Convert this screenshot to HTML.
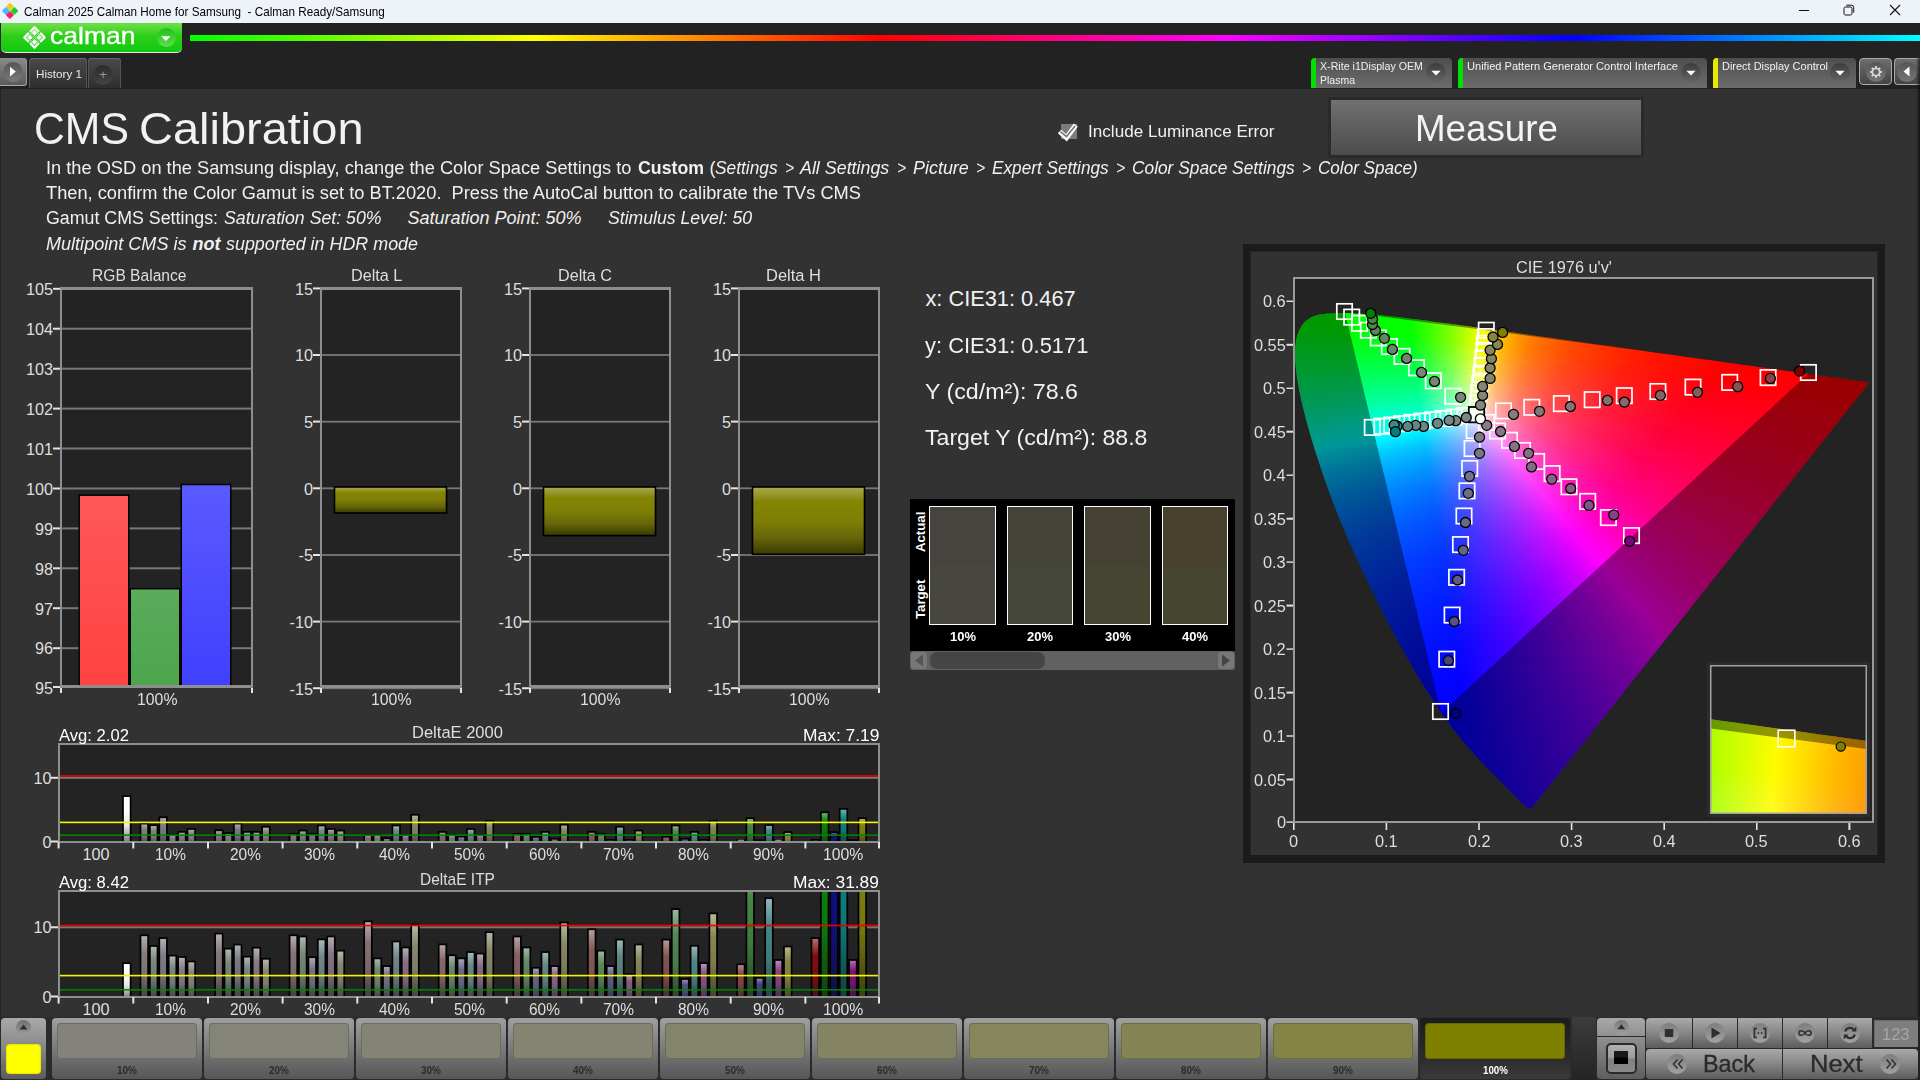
<!DOCTYPE html><html><head><meta charset="utf-8"><title>Calman</title><style>
html,body{margin:0;padding:0}
body{width:1920px;height:1080px;overflow:hidden;background:#323232;position:relative;font-family:"Liberation Sans",sans-serif}
.t{position:absolute;line-height:0;white-space:pre;transform-origin:0 0;z-index:2}
.a{position:absolute}
.tab{position:absolute;top:58px;height:30px;border-radius:4px 4px 0 0;background:linear-gradient(#4a4a4a,#3a3a3a 60%,#2e2e2e);box-shadow:inset 0 1px 0 #666, inset 1px 0 0 #555, inset -1px 0 0 #555}
.dev{position:absolute;top:58px;height:30px;border-radius:4px 4px 0 0;background:linear-gradient(#4e4e4e,#5e5e5e 50%,#6c6c6c);overflow:hidden}
.dev i{position:absolute;left:0;top:0;width:5px;height:30px}
.rb{position:absolute;border-radius:50%}
.btn{position:absolute;background:linear-gradient(#a9a9a9,#8a8a8a 45%,#5c5c5c);}
.pb{position:absolute;top:1018px;width:150px;height:61px;border-radius:4px;background:linear-gradient(#a0a0a0,#7a7a7a 50%,#565656)}
.pb b{position:absolute;left:5px;top:5px;width:140px;height:36px;border-radius:4px;box-shadow:inset 0 0 0 1px rgba(0,0,0,.18)}
</style></head><body>
<div class="a" style="left:0;top:0;width:1920px;height:23px;background:#eef3f9"></div>
<div class="t" style="left:23.50px;top:12.00px;font-size:12.4px;color:#000;transform:scaleX(0.9437);">Calman 2025 Calman Home for Samsung  - Calman Ready/Samsung</div>
<div class="a" style="left:0;top:23px;width:1920px;height:66px;background:#222"></div>
<div class="a" style="left:190px;top:34.9px;width:1730px;height:5.7px;background:linear-gradient(90deg,#0f0 0%,#ff0 20%,#f00 40%,#f0f 60%,#00f 80%,#0ff 100%);filter:blur(0.5px)"></div>
<div class="a" style="left:1px;top:23px;width:181px;height:29px;background:linear-gradient(#6fe048,#2dcf18 45%,#10c810);border-bottom:1px solid #e8e8e8;border-radius:0 0 5px 5px"></div>
<div class="a" style="left:0;top:58px;width:27px;height:28px;border-radius:0 4px 4px 0;background:linear-gradient(#8a8a8a,#5a5a5a);box-shadow:inset 0 -1px 0 #aaa, inset -1px 0 0 #999"></div>
<div class="rb" style="left:3px;top:62px;width:20px;height:20px;background:linear-gradient(#555,#7a7a7a)"></div>
<div class="tab" style="left:29px;width:58px"></div>
<div class="tab" style="left:88px;width:33px"></div>
<div class="rb" style="left:93px;top:65px;width:20px;height:20px;background:linear-gradient(#2c2c2c,#444)"></div>
<div class="t" style="left:35.50px;top:74.00px;font-size:11.6px;color:#e8e8e8;transform:scaleX(1.0051);">History 1</div>
<div class="t" style="left:99.20px;top:75.00px;font-size:13px;color:#999;">+</div>
<div class="dev" style="left:1311px;width:141px"><i style="background:#00e000"></i></div>
<div class="rb" style="left:1426px;top:63px;width:20px;height:20px;background:linear-gradient(#3c3c3c,#666)"></div>
<div class="t" style="left:1320.00px;top:66.00px;font-size:11.6px;color:#f0f0f0;transform:scaleX(0.9183);">X-Rite i1Display OEM</div>
<div class="t" style="left:1320.00px;top:80.00px;font-size:11.6px;color:#f0f0f0;transform:scaleX(0.9048);">Plasma</div>
<div class="dev" style="left:1458px;width:249px"><i style="background:#00e000"></i></div>
<div class="rb" style="left:1681px;top:63px;width:20px;height:20px;background:linear-gradient(#3c3c3c,#666)"></div>
<div class="t" style="left:1467.00px;top:66.00px;font-size:11.6px;color:#f0f0f0;transform:scaleX(0.9540);">Unified Pattern Generator Control Interface</div>
<div class="dev" style="left:1713px;width:143px"><i style="background:#e8e800"></i></div>
<div class="rb" style="left:1830px;top:63px;width:20px;height:20px;background:linear-gradient(#3c3c3c,#666)"></div>
<div class="t" style="left:1722.00px;top:66.00px;font-size:11.6px;color:#f0f0f0;transform:scaleX(0.9450);">Direct Display Control</div>
<div class="a" style="left:1859px;top:58px;width:33px;height:27px;border-radius:4px;border:1px solid #aaa;box-sizing:border-box;background:linear-gradient(#6e6e6e,#444)"></div>
<div class="a" style="left:1894px;top:58px;width:26px;height:27px;border-radius:4px 0 0 4px;border:1px solid #aaa;border-right:none;box-sizing:border-box;background:linear-gradient(#6e6e6e,#444)"></div>
<div class="rb" style="left:1866px;top:62px;width:20px;height:20px;background:linear-gradient(#555,#777)"></div>
<div class="rb" style="left:1897px;top:62px;width:20px;height:20px;background:linear-gradient(#555,#777)"></div>
<div class="a" style="left:0;top:89px;width:1920px;height:928px;background:#323232"></div>
<div class="a" style="left:0;top:89px;width:1px;height:928px;background:#222"></div>
<div class="t" style="left:34.30px;top:128.75px;font-size:43.5px;color:#f2f2f2;transform:scaleX(0.9827);">CMS</div>
<div class="t" style="left:139.20px;top:128.75px;font-size:43.5px;color:#f2f2f2;transform:scaleX(1.0796);">Calibration</div>
<div class="t" style="left:46.00px;top:167.75px;font-size:18px;color:#f0f0f0;transform:scaleX(1.0129);">In the OSD on the Samsung display, change the Color Space Settings to</div>
<div class="t" style="left:637.50px;top:167.75px;font-size:18px;color:#f0f0f0;font-weight:700;transform:scaleX(0.9851);">Custom</div>
<div class="t" style="left:709.50px;top:167.75px;font-size:18px;color:#f0f0f0;">(</div>
<div class="t" style="left:715.40px;top:167.75px;font-size:18px;color:#f0f0f0;font-style:italic;transform:scaleX(0.9625);">Settings</div>
<div class="t" style="left:800.00px;top:167.75px;font-size:18px;color:#f0f0f0;font-style:italic;transform:scaleX(0.9917);">All Settings</div>
<div class="t" style="left:913.00px;top:167.75px;font-size:18px;color:#f0f0f0;font-style:italic;transform:scaleX(0.9960);">Picture</div>
<div class="t" style="left:992.00px;top:167.75px;font-size:18px;color:#f0f0f0;font-style:italic;transform:scaleX(0.9560);">Expert Settings</div>
<div class="t" style="left:1132.30px;top:167.75px;font-size:18px;color:#f0f0f0;font-style:italic;transform:scaleX(0.9622);">Color Space Settings</div>
<div class="t" style="left:1317.80px;top:167.75px;font-size:18px;color:#f0f0f0;font-style:italic;transform:scaleX(0.9500);">Color Space)</div>
<div class="t" style="left:785.30px;top:167.75px;font-size:18px;color:#f0f0f0;font-style:italic;transform:scaleX(0.8752);">&gt;</div>
<div class="t" style="left:896.80px;top:167.75px;font-size:18px;color:#f0f0f0;font-style:italic;transform:scaleX(0.8752);">&gt;</div>
<div class="t" style="left:976.20px;top:167.75px;font-size:18px;color:#f0f0f0;font-style:italic;transform:scaleX(0.8752);">&gt;</div>
<div class="t" style="left:1116.10px;top:167.75px;font-size:18px;color:#f0f0f0;font-style:italic;transform:scaleX(0.8752);">&gt;</div>
<div class="t" style="left:1302.40px;top:167.75px;font-size:18px;color:#f0f0f0;font-style:italic;transform:scaleX(0.8752);">&gt;</div>
<div class="t" style="left:46.00px;top:192.75px;font-size:18px;color:#f0f0f0;transform:scaleX(1.0136);">Then, confirm the Color Gamut is set to BT.2020.  Press the AutoCal button to calibrate the TVs CMS</div>
<div class="t" style="left:46.00px;top:217.50px;font-size:18px;color:#f0f0f0;transform:scaleX(0.9882);">Gamut CMS Settings:</div>
<div class="t" style="left:224.00px;top:217.50px;font-size:18px;color:#f0f0f0;font-style:italic;transform:scaleX(0.9837);">Saturation Set: 50%</div>
<div class="t" style="left:407.50px;top:217.50px;font-size:18px;color:#f0f0f0;font-style:italic;">Saturation Point: 50%</div>
<div class="t" style="left:607.50px;top:217.50px;font-size:18px;color:#f0f0f0;font-style:italic;transform:scaleX(0.9791);">Stimulus Level: 50</div>
<div class="t" style="left:46.00px;top:244.00px;font-size:18px;color:#f0f0f0;font-style:italic;transform:scaleX(1.0033);">Multipoint CMS is</div>
<div class="t" style="left:192.50px;top:244.00px;font-size:18px;color:#f0f0f0;font-weight:700;font-style:italic;">not</div>
<div class="t" style="left:226.00px;top:244.00px;font-size:18px;color:#f0f0f0;font-style:italic;transform:scaleX(0.9943);">supported in HDR mode</div>
<div class="a" style="left:1061px;top:124px;width:16px;height:15px;background:#7c7c7c"></div>
<div class="t" style="left:1088.40px;top:132.00px;font-size:17px;color:#f0f0f0;transform:scaleX(1.0069);">Include Luminance Error</div>
<div class="a" style="left:1328px;top:97px;width:316px;height:61px;background:#2a2a2a"></div>
<div class="a" style="left:1331px;top:100px;width:310px;height:55px;background:linear-gradient(#717171,#4c4c4c)"></div>
<div class="t" style="left:1415.00px;top:128.80px;font-size:37px;color:#f4f4f4;transform:scaleX(0.9933);">Measure</div>
<div class="t" style="left:925.40px;top:299.20px;font-size:21.8px;color:#f2f2f2;">x: CIE31: 0.467</div>
<div class="t" style="left:925.40px;top:345.50px;font-size:21.8px;color:#f2f2f2;transform:scaleX(1.0068);">y: CIE31: 0.5171</div>
<div class="t" style="left:925.40px;top:392.20px;font-size:21.8px;color:#f2f2f2;transform:scaleX(1.0642);">Y (cd/m²): 78.6</div>
<div class="t" style="left:925.40px;top:438.00px;font-size:21.8px;color:#f2f2f2;transform:scaleX(1.0594);">Target Y (cd/m²): 88.8</div>
<div class="t" style="left:34.98px;top:687.60px;font-size:16.2px;color:#dedede;">95</div>
<div class="t" style="left:34.98px;top:648.47px;font-size:16.2px;color:#dedede;">96</div>
<div class="t" style="left:34.98px;top:608.54px;font-size:16.2px;color:#dedede;">97</div>
<div class="t" style="left:34.98px;top:568.61px;font-size:16.2px;color:#dedede;">98</div>
<div class="t" style="left:34.98px;top:528.68px;font-size:16.2px;color:#dedede;">99</div>
<div class="t" style="left:25.97px;top:488.75px;font-size:16.2px;color:#dedede;">100</div>
<div class="t" style="left:25.97px;top:448.82px;font-size:16.2px;color:#dedede;">101</div>
<div class="t" style="left:25.97px;top:408.89px;font-size:16.2px;color:#dedede;">102</div>
<div class="t" style="left:25.97px;top:368.96px;font-size:16.2px;color:#dedede;">103</div>
<div class="t" style="left:25.97px;top:329.03px;font-size:16.2px;color:#dedede;">104</div>
<div class="t" style="left:25.97px;top:289.10px;font-size:16.2px;color:#dedede;">105</div>
<div class="t" style="left:92.45px;top:276.25px;font-size:16.7px;color:#dedede;transform:scaleX(0.9340);">RGB Balance</div>
<div class="t" style="left:136.95px;top:699.00px;font-size:16.2px;color:#dedede;transform:scaleX(0.9775);">100%</div>
<div class="t" style="left:289.58px;top:688.55px;font-size:16.2px;color:#dedede;">-15</div>
<div class="t" style="left:289.58px;top:621.90px;font-size:16.2px;color:#dedede;">-10</div>
<div class="t" style="left:298.59px;top:555.25px;font-size:16.2px;color:#dedede;">-5</div>
<div class="t" style="left:303.99px;top:488.60px;font-size:16.2px;color:#dedede;">0</div>
<div class="t" style="left:303.99px;top:421.95px;font-size:16.2px;color:#dedede;">5</div>
<div class="t" style="left:294.98px;top:355.30px;font-size:16.2px;color:#dedede;">10</div>
<div class="t" style="left:294.98px;top:288.65px;font-size:16.2px;color:#dedede;">15</div>
<div class="t" style="left:350.60px;top:276.25px;font-size:16.7px;color:#dedede;transform:scaleX(0.9714);">Delta L</div>
<div class="t" style="left:370.75px;top:699.00px;font-size:16.2px;color:#dedede;transform:scaleX(0.9775);">100%</div>
<div class="t" style="left:498.58px;top:688.55px;font-size:16.2px;color:#dedede;">-15</div>
<div class="t" style="left:498.58px;top:621.90px;font-size:16.2px;color:#dedede;">-10</div>
<div class="t" style="left:507.59px;top:555.25px;font-size:16.2px;color:#dedede;">-5</div>
<div class="t" style="left:512.99px;top:488.60px;font-size:16.2px;color:#dedede;">0</div>
<div class="t" style="left:512.99px;top:421.95px;font-size:16.2px;color:#dedede;">5</div>
<div class="t" style="left:503.98px;top:355.30px;font-size:16.2px;color:#dedede;">10</div>
<div class="t" style="left:503.98px;top:288.65px;font-size:16.2px;color:#dedede;">15</div>
<div class="t" style="left:558.00px;top:276.25px;font-size:16.7px;color:#dedede;transform:scaleX(0.9697);">Delta C</div>
<div class="t" style="left:579.75px;top:699.00px;font-size:16.2px;color:#dedede;transform:scaleX(0.9775);">100%</div>
<div class="t" style="left:707.58px;top:688.55px;font-size:16.2px;color:#dedede;">-15</div>
<div class="t" style="left:707.58px;top:621.90px;font-size:16.2px;color:#dedede;">-10</div>
<div class="t" style="left:716.59px;top:555.25px;font-size:16.2px;color:#dedede;">-5</div>
<div class="t" style="left:721.99px;top:488.60px;font-size:16.2px;color:#dedede;">0</div>
<div class="t" style="left:721.99px;top:421.95px;font-size:16.2px;color:#dedede;">5</div>
<div class="t" style="left:712.98px;top:355.30px;font-size:16.2px;color:#dedede;">10</div>
<div class="t" style="left:712.98px;top:288.65px;font-size:16.2px;color:#dedede;">15</div>
<div class="t" style="left:766.20px;top:276.25px;font-size:16.7px;color:#dedede;transform:scaleX(0.9877);">Delta H</div>
<div class="t" style="left:788.75px;top:699.00px;font-size:16.2px;color:#dedede;transform:scaleX(0.9775);">100%</div>
<div class="a" style="left:910px;top:499px;width:325px;height:152px;background:#000"></div>
<div class="a" style="left:910px;top:651px;width:325px;height:19px;background:#616161;border-radius:3px"></div>
<div class="a" style="left:930px;top:652px;width:115px;height:17px;background:#454545;border-radius:7px"></div>
<div class="a" style="left:911px;top:652px;width:16px;height:17px;background:#777;border-radius:3px"></div>
<div class="a" style="left:1218px;top:652px;width:16px;height:17px;background:#777;border-radius:3px"></div>
<div class="a" style="left:929.0px;top:506px;width:66.6px;height:119px;box-sizing:border-box;border:1px solid #fff;background:linear-gradient(#47443f 49%,#47463f 51%)"></div>
<div class="t" style="left:949.50px;top:636.80px;font-size:13.6px;color:#fff;font-weight:700;transform:scaleX(0.9552);">10%</div>
<div class="a" style="left:1006.6px;top:506px;width:66.6px;height:119px;box-sizing:border-box;border:1px solid #fff;background:linear-gradient(#46443a 49%,#45463a 51%)"></div>
<div class="t" style="left:1027.10px;top:636.80px;font-size:13.6px;color:#fff;font-weight:700;transform:scaleX(0.9552);">20%</div>
<div class="a" style="left:1084.2px;top:506px;width:66.6px;height:119px;box-sizing:border-box;border:1px solid #fff;background:linear-gradient(#464233 49%,#464532 51%)"></div>
<div class="t" style="left:1104.70px;top:636.80px;font-size:13.6px;color:#fff;font-weight:700;transform:scaleX(0.9552);">30%</div>
<div class="a" style="left:1161.8px;top:506px;width:66.6px;height:119px;box-sizing:border-box;border:1px solid #fff;background:linear-gradient(#47412e 49%,#46452d 51%)"></div>
<div class="t" style="left:1182.30px;top:636.80px;font-size:13.6px;color:#fff;font-weight:700;transform:scaleX(0.9552);">40%</div>
<div class="t" style="left:926px;top:552px;font-size:13.2px;color:#fff;font-weight:700;transform:rotate(-90deg);transform-origin:0 0;line-height:0"><span style="position:absolute;left:0;top:-4.6px">Actual</span></div>
<div class="t" style="left:926px;top:619px;font-size:13.2px;color:#fff;font-weight:700;transform:rotate(-90deg);transform-origin:0 0;line-height:0"><span style="position:absolute;left:0;top:-4.6px">Target</span></div>
<!--MORE-->
<div class="t" style="left:82.44px;top:853.60px;font-size:16.2px;color:#dedede;">100</div>
<div class="t" style="left:155.12px;top:853.60px;font-size:16.2px;color:#dedede;transform:scaleX(0.9561);">10%</div>
<div class="t" style="left:229.80px;top:853.60px;font-size:16.2px;color:#dedede;transform:scaleX(0.9561);">20%</div>
<div class="t" style="left:304.48px;top:853.60px;font-size:16.2px;color:#dedede;transform:scaleX(0.9561);">30%</div>
<div class="t" style="left:379.16px;top:853.60px;font-size:16.2px;color:#dedede;transform:scaleX(0.9561);">40%</div>
<div class="t" style="left:453.84px;top:853.60px;font-size:16.2px;color:#dedede;transform:scaleX(0.9561);">50%</div>
<div class="t" style="left:528.52px;top:853.60px;font-size:16.2px;color:#dedede;transform:scaleX(0.9561);">60%</div>
<div class="t" style="left:603.20px;top:853.60px;font-size:16.2px;color:#dedede;transform:scaleX(0.9561);">70%</div>
<div class="t" style="left:677.88px;top:853.60px;font-size:16.2px;color:#dedede;transform:scaleX(0.9561);">80%</div>
<div class="t" style="left:752.56px;top:853.60px;font-size:16.2px;color:#dedede;transform:scaleX(0.9561);">90%</div>
<div class="t" style="left:822.54px;top:853.60px;font-size:16.2px;color:#dedede;transform:scaleX(0.9750);">100%</div>
<div class="t" style="left:42.49px;top:841.80px;font-size:16.2px;color:#dedede;">0</div>
<div class="t" style="left:33.48px;top:777.80px;font-size:16.2px;color:#dedede;">10</div>
<div class="t" style="left:411.50px;top:732.90px;font-size:16.7px;color:#dedede;transform:scaleX(0.9900);">DeltaE 2000</div>
<div class="t" style="left:58.50px;top:736.10px;font-size:16.7px;color:#fff;transform:scaleX(0.9963);">Avg: 2.02</div>
<div class="t" style="left:802.50px;top:736.10px;font-size:16.7px;color:#fff;transform:scaleX(1.0432);">Max: 7.19</div>
<div class="t" style="left:82.44px;top:1008.50px;font-size:16.2px;color:#dedede;">100</div>
<div class="t" style="left:155.12px;top:1008.50px;font-size:16.2px;color:#dedede;transform:scaleX(0.9561);">10%</div>
<div class="t" style="left:229.80px;top:1008.50px;font-size:16.2px;color:#dedede;transform:scaleX(0.9561);">20%</div>
<div class="t" style="left:304.48px;top:1008.50px;font-size:16.2px;color:#dedede;transform:scaleX(0.9561);">30%</div>
<div class="t" style="left:379.16px;top:1008.50px;font-size:16.2px;color:#dedede;transform:scaleX(0.9561);">40%</div>
<div class="t" style="left:453.84px;top:1008.50px;font-size:16.2px;color:#dedede;transform:scaleX(0.9561);">50%</div>
<div class="t" style="left:528.52px;top:1008.50px;font-size:16.2px;color:#dedede;transform:scaleX(0.9561);">60%</div>
<div class="t" style="left:603.20px;top:1008.50px;font-size:16.2px;color:#dedede;transform:scaleX(0.9561);">70%</div>
<div class="t" style="left:677.88px;top:1008.50px;font-size:16.2px;color:#dedede;transform:scaleX(0.9561);">80%</div>
<div class="t" style="left:752.56px;top:1008.50px;font-size:16.2px;color:#dedede;transform:scaleX(0.9561);">90%</div>
<div class="t" style="left:822.54px;top:1008.50px;font-size:16.2px;color:#dedede;transform:scaleX(0.9750);">100%</div>
<div class="t" style="left:42.49px;top:996.80px;font-size:16.2px;color:#dedede;">0</div>
<div class="t" style="left:33.48px;top:927.30px;font-size:16.2px;color:#dedede;">10</div>
<div class="t" style="left:419.50px;top:880.10px;font-size:16.7px;color:#dedede;transform:scaleX(0.9288);">DeltaE ITP</div>
<div class="t" style="left:58.50px;top:883.30px;font-size:16.7px;color:#fff;transform:scaleX(0.9963);">Avg: 8.42</div>
<div class="t" style="left:793.00px;top:883.30px;font-size:16.7px;color:#fff;transform:scaleX(1.0409);">Max: 31.89</div>
<div class="t" style="left:1276.91px;top:822.20px;font-size:16.5px;color:#dedede;transform:scaleX(0.9900);">0</div>
<div class="t" style="left:1254.21px;top:779.62px;font-size:16.5px;color:#dedede;transform:scaleX(0.9900);">0.05</div>
<div class="t" style="left:1263.29px;top:736.15px;font-size:16.5px;color:#dedede;transform:scaleX(0.9900);">0.1</div>
<div class="t" style="left:1254.21px;top:692.68px;font-size:16.5px;color:#dedede;transform:scaleX(0.9900);">0.15</div>
<div class="t" style="left:1263.29px;top:649.20px;font-size:16.5px;color:#dedede;transform:scaleX(0.9900);">0.2</div>
<div class="t" style="left:1254.21px;top:605.73px;font-size:16.5px;color:#dedede;transform:scaleX(0.9900);">0.25</div>
<div class="t" style="left:1263.29px;top:562.25px;font-size:16.5px;color:#dedede;transform:scaleX(0.9900);">0.3</div>
<div class="t" style="left:1254.21px;top:518.77px;font-size:16.5px;color:#dedede;transform:scaleX(0.9900);">0.35</div>
<div class="t" style="left:1263.29px;top:475.30px;font-size:16.5px;color:#dedede;transform:scaleX(0.9900);">0.4</div>
<div class="t" style="left:1254.21px;top:431.82px;font-size:16.5px;color:#dedede;transform:scaleX(0.9900);">0.45</div>
<div class="t" style="left:1263.29px;top:388.35px;font-size:16.5px;color:#dedede;transform:scaleX(0.9900);">0.5</div>
<div class="t" style="left:1254.21px;top:344.88px;font-size:16.5px;color:#dedede;transform:scaleX(0.9900);">0.55</div>
<div class="t" style="left:1263.29px;top:301.40px;font-size:16.5px;color:#dedede;transform:scaleX(0.9900);">0.6</div>
<div class="t" style="left:1289.26px;top:840.80px;font-size:16.5px;color:#dedede;transform:scaleX(0.9900);">0</div>
<div class="t" style="left:1375.05px;top:840.80px;font-size:16.5px;color:#dedede;transform:scaleX(0.9900);">0.1</div>
<div class="t" style="left:1467.65px;top:840.80px;font-size:16.5px;color:#dedede;transform:scaleX(0.9900);">0.2</div>
<div class="t" style="left:1560.25px;top:840.80px;font-size:16.5px;color:#dedede;transform:scaleX(0.9900);">0.3</div>
<div class="t" style="left:1652.85px;top:840.80px;font-size:16.5px;color:#dedede;transform:scaleX(0.9900);">0.4</div>
<div class="t" style="left:1745.45px;top:840.80px;font-size:16.5px;color:#dedede;transform:scaleX(0.9900);">0.5</div>
<div class="t" style="left:1838.05px;top:840.80px;font-size:16.5px;color:#dedede;transform:scaleX(0.9900);">0.6</div>
<div class="t" style="left:1516.00px;top:266.60px;font-size:17.3px;color:#dedede;transform:scaleX(0.9429);">CIE 1976 u&#x27;v&#x27;</div>
<div class="a" style="left:0;top:1017px;width:1920px;height:63px;background:#2b2b2b"></div>
<div class="a" style="left:1572px;top:1017px;width:24px;height:63px;background:linear-gradient(#3c3c3c,#242424)"></div>
<div class="btn" style="left:1px;top:1018px;width:45px;height:61px;border-radius:4px"></div>
<div class="rb" style="left:16px;top:1020px;width:15px;height:15px;background:linear-gradient(#707070,#9a9a9a)"></div>
<div class="a" style="left:6px;top:1044px;width:35px;height:30px;border-radius:4px;background:#ffff00;box-shadow:inset 0 0 2px rgba(120,120,0,.6)"></div>
<div class="pb" style="left:52px;"><b style="background:#83837c"></b></div>
<div class="t" style="left:117.00px;top:1069.80px;font-size:10.6px;color:#2a2a2a;font-weight:700;transform:scaleX(0.9427);">10%</div>
<div class="pb" style="left:204px;"><b style="background:#848479"></b></div>
<div class="t" style="left:269.00px;top:1069.80px;font-size:10.6px;color:#2a2a2a;font-weight:700;transform:scaleX(0.9427);">20%</div>
<div class="pb" style="left:356px;"><b style="background:#848475"></b></div>
<div class="t" style="left:421.00px;top:1069.80px;font-size:10.6px;color:#2a2a2a;font-weight:700;transform:scaleX(0.9427);">30%</div>
<div class="pb" style="left:508px;"><b style="background:#848470"></b></div>
<div class="t" style="left:573.00px;top:1069.80px;font-size:10.6px;color:#2a2a2a;font-weight:700;transform:scaleX(0.9427);">40%</div>
<div class="pb" style="left:660px;"><b style="background:#84846a"></b></div>
<div class="t" style="left:725.00px;top:1069.80px;font-size:10.6px;color:#2a2a2a;font-weight:700;transform:scaleX(0.9427);">50%</div>
<div class="pb" style="left:812px;"><b style="background:#848463"></b></div>
<div class="t" style="left:877.00px;top:1069.80px;font-size:10.6px;color:#2a2a2a;font-weight:700;transform:scaleX(0.9427);">60%</div>
<div class="pb" style="left:964px;"><b style="background:#85865e"></b></div>
<div class="t" style="left:1029.00px;top:1069.80px;font-size:10.6px;color:#2a2a2a;font-weight:700;transform:scaleX(0.9427);">70%</div>
<div class="pb" style="left:1116px;"><b style="background:#858554"></b></div>
<div class="t" style="left:1181.00px;top:1069.80px;font-size:10.6px;color:#2a2a2a;font-weight:700;transform:scaleX(0.9427);">80%</div>
<div class="pb" style="left:1268px;"><b style="background:#848445"></b></div>
<div class="t" style="left:1333.00px;top:1069.80px;font-size:10.6px;color:#2a2a2a;font-weight:700;transform:scaleX(0.9427);">90%</div>
<div class="pb" style="left:1420px;background:linear-gradient(#1c1c1c,#2a2a2a 60%,#3a3a3a);"><b style="background:#808000"></b></div>
<div class="t" style="left:1482.50px;top:1069.80px;font-size:10.6px;color:#fff;font-weight:700;transform:scaleX(0.9221);">100%</div>
<div class="btn" style="left:1597px;top:1018px;width:48px;height:18px;border-radius:4px 4px 0 0;background:linear-gradient(#a8a8a8,#919191)"></div>
<div class="btn" style="left:1597px;top:1037px;width:48px;height:42px;border-radius:0 0 4px 4px;background:linear-gradient(#8f8f8f,#5e5e5e)"></div>
<div class="rb" style="left:1614px;top:1020px;width:15px;height:15px;background:linear-gradient(#7a7a7a,#a0a0a0)"></div>
<div class="a" style="left:1605.5px;top:1042.5px;width:31px;height:31px;box-sizing:border-box;border:2.5px solid #2a2a2a;border-radius:5px;background:linear-gradient(#b0b0b0 0%,#9c9c9c 49%,#808080 51%,#8a8a8a 100%)"></div>
<div class="a" style="left:1614.3px;top:1051.2px;width:13.4px;height:13.2px;background:linear-gradient(#1a1a1a 0%,#181818 49%,#000 51%)"></div>
<div class="btn" style="left:1646px;top:1018px;width:46px;height:30px;border-radius:4px 0 0 0"></div>
<div class="rb" style="left:1659px;top:1023px;width:20px;height:20px;background:linear-gradient(#7d7d7d,#a2a2a2)"></div>
<div class="btn" style="left:1693px;top:1018px;width:44px;height:30px;border-radius:0"></div>
<div class="rb" style="left:1705px;top:1023px;width:20px;height:20px;background:linear-gradient(#7d7d7d,#a2a2a2)"></div>
<div class="btn" style="left:1738px;top:1018px;width:44px;height:30px;border-radius:0"></div>
<div class="rb" style="left:1750px;top:1023px;width:20px;height:20px;background:linear-gradient(#7d7d7d,#a2a2a2)"></div>
<div class="btn" style="left:1783px;top:1018px;width:44px;height:30px;border-radius:0"></div>
<div class="rb" style="left:1795px;top:1023px;width:20px;height:20px;background:linear-gradient(#7d7d7d,#a2a2a2)"></div>
<div class="btn" style="left:1828px;top:1018px;width:44px;height:30px;border-radius:0"></div>
<div class="rb" style="left:1840px;top:1023px;width:20px;height:20px;background:linear-gradient(#7d7d7d,#a2a2a2)"></div>
<div class="a" style="left:1874px;top:1020px;width:44px;height:27px;background:#7e7e7e;box-shadow:inset 1px 1px 0 #6a6a6a"></div>
<div class="t" style="left:1882.45px;top:1034.60px;font-size:17px;color:#a4a8ac;transform:scaleX(0.9695);">123</div>
<div class="btn" style="left:1646px;top:1049px;width:136px;height:30px;border-radius:4px 0 0 4px"></div>
<div class="btn" style="left:1783px;top:1049px;width:135px;height:30px;border-radius:0 4px 4px 0"></div>
<div class="rb" style="left:1667px;top:1054px;width:20px;height:20px;background:linear-gradient(#7d7d7d,#a2a2a2)"></div>
<div class="rb" style="left:1880px;top:1054px;width:20px;height:20px;background:linear-gradient(#7d7d7d,#a2a2a2)"></div>
<div class="t" style="left:1703.00px;top:1064.20px;font-size:23.2px;color:#2a2a2a;transform:scaleX(1.0082);-webkit-text-stroke:0.3px #2a2a2a;">Back</div>
<div class="t" style="left:1810.00px;top:1064.20px;font-size:23.2px;color:#2a2a2a;transform:scaleX(1.1006);-webkit-text-stroke:0.3px #2a2a2a;">Next</div>
<div class="a" style="left:1918px;top:1017px;width:2px;height:63px;background:#222"></div>
<div class="a" style="left:1915.5px;top:58px;width:4.5px;height:959px;background:linear-gradient(90deg,rgba(0,0,0,0),rgba(0,0,0,.62));z-index:3"></div>
<div class="t" style="left:49.60px;top:35.80px;font-size:23.2px;color:#fff;transform:scaleX(1.1432);-webkit-text-stroke:0.35px #fff;">calman</div>
<div class="rb" style="left:156.5px;top:27.5px;width:19px;height:19px;background:linear-gradient(#1cc01c,#5fe04a)"></div>
<svg class="a" style="left:0;top:0;z-index:1" width="1920" height="1080" viewBox="0 0 1920 1080"><defs><linearGradient id="gr" x2="0" y2="1"><stop offset="0" stop-color="#ff5858"/><stop offset="1" stop-color="#ff4242"/></linearGradient><linearGradient id="gg" x2="0" y2="1"><stop offset="0" stop-color="#5bab5b"/><stop offset="1" stop-color="#4da54d"/></linearGradient><linearGradient id="gb" x2="0" y2="1"><stop offset="0" stop-color="#5a5aff"/><stop offset="1" stop-color="#4040ff"/></linearGradient><linearGradient id="go" x2="0" y2="1"><stop offset="0" stop-color="#abab52"/><stop offset="0.22" stop-color="#848404"/><stop offset="0.5" stop-color="#7f7f06"/><stop offset="0.75" stop-color="#66660a"/><stop offset="1" stop-color="#3a3a00"/></linearGradient><clipPath id="ca"><rect x="58" y="744" width="822" height="98"/></clipPath><linearGradient id="b1" x2="0" y2="1"><stop offset="0" stop-color="#ffffff"/><stop offset="0.28" stop-color="#ffffff"/><stop offset="0.6" stop-color="#e8e8e8"/><stop offset="1" stop-color="#6d6d6d"/></linearGradient><linearGradient id="b2" x2="0" y2="1"><stop offset="0" stop-color="#b9b3b3"/><stop offset="0.28" stop-color="#867c7c"/><stop offset="0.6" stop-color="#7b7272"/><stop offset="1" stop-color="#3f3c3c"/></linearGradient><linearGradient id="b3" x2="0" y2="1"><stop offset="0" stop-color="#b3b9b3"/><stop offset="0.28" stop-color="#7c867c"/><stop offset="0.6" stop-color="#727b72"/><stop offset="1" stop-color="#3c3f3c"/></linearGradient><linearGradient id="b4" x2="0" y2="1"><stop offset="0" stop-color="#b3b3b9"/><stop offset="0.28" stop-color="#7c7c86"/><stop offset="0.6" stop-color="#72727b"/><stop offset="1" stop-color="#3c3c3f"/></linearGradient><linearGradient id="b5" x2="0" y2="1"><stop offset="0" stop-color="#b3b9b9"/><stop offset="0.28" stop-color="#7c8686"/><stop offset="0.6" stop-color="#727b7b"/><stop offset="1" stop-color="#3c3f3f"/></linearGradient><linearGradient id="b6" x2="0" y2="1"><stop offset="0" stop-color="#b9b3b9"/><stop offset="0.28" stop-color="#867c86"/><stop offset="0.6" stop-color="#7b727b"/><stop offset="1" stop-color="#3f3c3f"/></linearGradient><linearGradient id="b7" x2="0" y2="1"><stop offset="0" stop-color="#b9b9b3"/><stop offset="0.28" stop-color="#86867c"/><stop offset="0.6" stop-color="#7b7b72"/><stop offset="1" stop-color="#3f3f3c"/></linearGradient><linearGradient id="b8" x2="0" y2="1"><stop offset="0" stop-color="#b9b1b1"/><stop offset="0.28" stop-color="#867878"/><stop offset="0.6" stop-color="#7b6e6e"/><stop offset="1" stop-color="#3f3a3a"/></linearGradient><linearGradient id="b9" x2="0" y2="1"><stop offset="0" stop-color="#b1b9b1"/><stop offset="0.28" stop-color="#788678"/><stop offset="0.6" stop-color="#6e7b6e"/><stop offset="1" stop-color="#3a3f3a"/></linearGradient><linearGradient id="b10" x2="0" y2="1"><stop offset="0" stop-color="#b1b1b9"/><stop offset="0.28" stop-color="#787886"/><stop offset="0.6" stop-color="#6e6e7b"/><stop offset="1" stop-color="#3a3a3f"/></linearGradient><linearGradient id="b11" x2="0" y2="1"><stop offset="0" stop-color="#b1b9b9"/><stop offset="0.28" stop-color="#788686"/><stop offset="0.6" stop-color="#6e7b7b"/><stop offset="1" stop-color="#3a3f3f"/></linearGradient><linearGradient id="b12" x2="0" y2="1"><stop offset="0" stop-color="#b9b1b9"/><stop offset="0.28" stop-color="#867886"/><stop offset="0.6" stop-color="#7b6e7b"/><stop offset="1" stop-color="#3f3a3f"/></linearGradient><linearGradient id="b13" x2="0" y2="1"><stop offset="0" stop-color="#b9b9b1"/><stop offset="0.28" stop-color="#868678"/><stop offset="0.6" stop-color="#7b7b6e"/><stop offset="1" stop-color="#3f3f3a"/></linearGradient><linearGradient id="b14" x2="0" y2="1"><stop offset="0" stop-color="#b9aeae"/><stop offset="0.28" stop-color="#867474"/><stop offset="0.6" stop-color="#7b6a6a"/><stop offset="1" stop-color="#3f3838"/></linearGradient><linearGradient id="b15" x2="0" y2="1"><stop offset="0" stop-color="#aeb9ae"/><stop offset="0.28" stop-color="#748674"/><stop offset="0.6" stop-color="#6a7b6a"/><stop offset="1" stop-color="#383f38"/></linearGradient><linearGradient id="b16" x2="0" y2="1"><stop offset="0" stop-color="#aeaeb9"/><stop offset="0.28" stop-color="#747486"/><stop offset="0.6" stop-color="#6a6a7b"/><stop offset="1" stop-color="#38383f"/></linearGradient><linearGradient id="b17" x2="0" y2="1"><stop offset="0" stop-color="#aeb9b9"/><stop offset="0.28" stop-color="#748686"/><stop offset="0.6" stop-color="#6a7b7b"/><stop offset="1" stop-color="#383f3f"/></linearGradient><linearGradient id="b18" x2="0" y2="1"><stop offset="0" stop-color="#b9aeb9"/><stop offset="0.28" stop-color="#867486"/><stop offset="0.6" stop-color="#7b6a7b"/><stop offset="1" stop-color="#3f383f"/></linearGradient><linearGradient id="b19" x2="0" y2="1"><stop offset="0" stop-color="#b9b9ae"/><stop offset="0.28" stop-color="#868674"/><stop offset="0.6" stop-color="#7b7b6a"/><stop offset="1" stop-color="#3f3f38"/></linearGradient><linearGradient id="b20" x2="0" y2="1"><stop offset="0" stop-color="#b9abab"/><stop offset="0.28" stop-color="#866f6f"/><stop offset="0.6" stop-color="#7b6666"/><stop offset="1" stop-color="#3f3737"/></linearGradient><linearGradient id="b21" x2="0" y2="1"><stop offset="0" stop-color="#abb9ab"/><stop offset="0.28" stop-color="#6f866f"/><stop offset="0.6" stop-color="#667b66"/><stop offset="1" stop-color="#373f37"/></linearGradient><linearGradient id="b22" x2="0" y2="1"><stop offset="0" stop-color="#ababb9"/><stop offset="0.28" stop-color="#6f6f86"/><stop offset="0.6" stop-color="#66667b"/><stop offset="1" stop-color="#37373f"/></linearGradient><linearGradient id="b23" x2="0" y2="1"><stop offset="0" stop-color="#abb9b9"/><stop offset="0.28" stop-color="#6f8686"/><stop offset="0.6" stop-color="#667b7b"/><stop offset="1" stop-color="#373f3f"/></linearGradient><linearGradient id="b24" x2="0" y2="1"><stop offset="0" stop-color="#b9abb9"/><stop offset="0.28" stop-color="#866f86"/><stop offset="0.6" stop-color="#7b667b"/><stop offset="1" stop-color="#3f373f"/></linearGradient><linearGradient id="b25" x2="0" y2="1"><stop offset="0" stop-color="#b9b9ab"/><stop offset="0.28" stop-color="#86866f"/><stop offset="0.6" stop-color="#7b7b66"/><stop offset="1" stop-color="#3f3f37"/></linearGradient><linearGradient id="b26" x2="0" y2="1"><stop offset="0" stop-color="#b9a8a8"/><stop offset="0.28" stop-color="#866969"/><stop offset="0.6" stop-color="#7b6161"/><stop offset="1" stop-color="#3f3434"/></linearGradient><linearGradient id="b27" x2="0" y2="1"><stop offset="0" stop-color="#a8b9a8"/><stop offset="0.28" stop-color="#698669"/><stop offset="0.6" stop-color="#617b61"/><stop offset="1" stop-color="#343f34"/></linearGradient><linearGradient id="b28" x2="0" y2="1"><stop offset="0" stop-color="#a8a8b9"/><stop offset="0.28" stop-color="#696986"/><stop offset="0.6" stop-color="#61617b"/><stop offset="1" stop-color="#34343f"/></linearGradient><linearGradient id="b29" x2="0" y2="1"><stop offset="0" stop-color="#a8b9b9"/><stop offset="0.28" stop-color="#698686"/><stop offset="0.6" stop-color="#617b7b"/><stop offset="1" stop-color="#343f3f"/></linearGradient><linearGradient id="b30" x2="0" y2="1"><stop offset="0" stop-color="#b9a8b9"/><stop offset="0.28" stop-color="#866986"/><stop offset="0.6" stop-color="#7b617b"/><stop offset="1" stop-color="#3f343f"/></linearGradient><linearGradient id="b31" x2="0" y2="1"><stop offset="0" stop-color="#b9b9a8"/><stop offset="0.28" stop-color="#868669"/><stop offset="0.6" stop-color="#7b7b61"/><stop offset="1" stop-color="#3f3f34"/></linearGradient><linearGradient id="b32" x2="0" y2="1"><stop offset="0" stop-color="#b9a5a5"/><stop offset="0.28" stop-color="#866363"/><stop offset="0.6" stop-color="#7b5b5b"/><stop offset="1" stop-color="#3f3232"/></linearGradient><linearGradient id="b33" x2="0" y2="1"><stop offset="0" stop-color="#a5b9a5"/><stop offset="0.28" stop-color="#638663"/><stop offset="0.6" stop-color="#5b7b5b"/><stop offset="1" stop-color="#323f32"/></linearGradient><linearGradient id="b34" x2="0" y2="1"><stop offset="0" stop-color="#a5a5b9"/><stop offset="0.28" stop-color="#636386"/><stop offset="0.6" stop-color="#5b5b7b"/><stop offset="1" stop-color="#32323f"/></linearGradient><linearGradient id="b35" x2="0" y2="1"><stop offset="0" stop-color="#a5b9b9"/><stop offset="0.28" stop-color="#638686"/><stop offset="0.6" stop-color="#5b7b7b"/><stop offset="1" stop-color="#323f3f"/></linearGradient><linearGradient id="b36" x2="0" y2="1"><stop offset="0" stop-color="#b9a5b9"/><stop offset="0.28" stop-color="#866386"/><stop offset="0.6" stop-color="#7b5b7b"/><stop offset="1" stop-color="#3f323f"/></linearGradient><linearGradient id="b37" x2="0" y2="1"><stop offset="0" stop-color="#b9b9a5"/><stop offset="0.28" stop-color="#868663"/><stop offset="0.6" stop-color="#7b7b5b"/><stop offset="1" stop-color="#3f3f32"/></linearGradient><linearGradient id="b38" x2="0" y2="1"><stop offset="0" stop-color="#b9a0a0"/><stop offset="0.28" stop-color="#865b5b"/><stop offset="0.6" stop-color="#7b5454"/><stop offset="1" stop-color="#3f2f2f"/></linearGradient><linearGradient id="b39" x2="0" y2="1"><stop offset="0" stop-color="#a0b9a0"/><stop offset="0.28" stop-color="#5b865b"/><stop offset="0.6" stop-color="#547b54"/><stop offset="1" stop-color="#2f3f2f"/></linearGradient><linearGradient id="b40" x2="0" y2="1"><stop offset="0" stop-color="#a0a0b9"/><stop offset="0.28" stop-color="#5b5b86"/><stop offset="0.6" stop-color="#54547b"/><stop offset="1" stop-color="#2f2f3f"/></linearGradient><linearGradient id="b41" x2="0" y2="1"><stop offset="0" stop-color="#a0b9b9"/><stop offset="0.28" stop-color="#5b8686"/><stop offset="0.6" stop-color="#547b7b"/><stop offset="1" stop-color="#2f3f3f"/></linearGradient><linearGradient id="b42" x2="0" y2="1"><stop offset="0" stop-color="#b9a0b9"/><stop offset="0.28" stop-color="#865b86"/><stop offset="0.6" stop-color="#7b547b"/><stop offset="1" stop-color="#3f2f3f"/></linearGradient><linearGradient id="b43" x2="0" y2="1"><stop offset="0" stop-color="#b9b9a0"/><stop offset="0.28" stop-color="#86865b"/><stop offset="0.6" stop-color="#7b7b54"/><stop offset="1" stop-color="#3f3f2f"/></linearGradient><linearGradient id="b44" x2="0" y2="1"><stop offset="0" stop-color="#b99a9a"/><stop offset="0.28" stop-color="#865252"/><stop offset="0.6" stop-color="#7b4b4b"/><stop offset="1" stop-color="#3f2b2b"/></linearGradient><linearGradient id="b45" x2="0" y2="1"><stop offset="0" stop-color="#9ab99a"/><stop offset="0.28" stop-color="#528652"/><stop offset="0.6" stop-color="#4b7b4b"/><stop offset="1" stop-color="#2b3f2b"/></linearGradient><linearGradient id="b46" x2="0" y2="1"><stop offset="0" stop-color="#9a9ab9"/><stop offset="0.28" stop-color="#525286"/><stop offset="0.6" stop-color="#4b4b7b"/><stop offset="1" stop-color="#2b2b3f"/></linearGradient><linearGradient id="b47" x2="0" y2="1"><stop offset="0" stop-color="#9ab9b9"/><stop offset="0.28" stop-color="#528686"/><stop offset="0.6" stop-color="#4b7b7b"/><stop offset="1" stop-color="#2b3f3f"/></linearGradient><linearGradient id="b48" x2="0" y2="1"><stop offset="0" stop-color="#b99ab9"/><stop offset="0.28" stop-color="#865286"/><stop offset="0.6" stop-color="#7b4b7b"/><stop offset="1" stop-color="#3f2b3f"/></linearGradient><linearGradient id="b49" x2="0" y2="1"><stop offset="0" stop-color="#b9b99a"/><stop offset="0.28" stop-color="#868652"/><stop offset="0.6" stop-color="#7b7b4b"/><stop offset="1" stop-color="#3f3f2b"/></linearGradient><linearGradient id="b50" x2="0" y2="1"><stop offset="0" stop-color="#b99292"/><stop offset="0.28" stop-color="#864343"/><stop offset="0.6" stop-color="#7b3e3e"/><stop offset="1" stop-color="#3f2626"/></linearGradient><linearGradient id="b51" x2="0" y2="1"><stop offset="0" stop-color="#92b992"/><stop offset="0.28" stop-color="#438643"/><stop offset="0.6" stop-color="#3e7b3e"/><stop offset="1" stop-color="#263f26"/></linearGradient><linearGradient id="b52" x2="0" y2="1"><stop offset="0" stop-color="#92b9b9"/><stop offset="0.28" stop-color="#438686"/><stop offset="0.6" stop-color="#3e7b7b"/><stop offset="1" stop-color="#263f3f"/></linearGradient><linearGradient id="b53" x2="0" y2="1"><stop offset="0" stop-color="#b992b9"/><stop offset="0.28" stop-color="#864386"/><stop offset="0.6" stop-color="#7b3e7b"/><stop offset="1" stop-color="#3f263f"/></linearGradient><linearGradient id="b54" x2="0" y2="1"><stop offset="0" stop-color="#b9b992"/><stop offset="0.28" stop-color="#868643"/><stop offset="0.6" stop-color="#7b7b3e"/><stop offset="1" stop-color="#3f3f26"/></linearGradient><linearGradient id="b55" x2="0" y2="1"><stop offset="0" stop-color="#b57373"/><stop offset="0.28" stop-color="#800e0e"/><stop offset="0.6" stop-color="#750f0f"/><stop offset="1" stop-color="#3d1212"/></linearGradient><linearGradient id="b56" x2="0" y2="1"><stop offset="0" stop-color="#73b573"/><stop offset="0.28" stop-color="#0e800e"/><stop offset="0.6" stop-color="#0f750f"/><stop offset="1" stop-color="#123d12"/></linearGradient><linearGradient id="b57" x2="0" y2="1"><stop offset="0" stop-color="#7373b5"/><stop offset="0.28" stop-color="#0e0e80"/><stop offset="0.6" stop-color="#0f0f75"/><stop offset="1" stop-color="#12123d"/></linearGradient><linearGradient id="b58" x2="0" y2="1"><stop offset="0" stop-color="#73b5b5"/><stop offset="0.28" stop-color="#0e8080"/><stop offset="0.6" stop-color="#0f7575"/><stop offset="1" stop-color="#123d3d"/></linearGradient><linearGradient id="b59" x2="0" y2="1"><stop offset="0" stop-color="#b573b5"/><stop offset="0.28" stop-color="#800e80"/><stop offset="0.6" stop-color="#750f75"/><stop offset="1" stop-color="#3d123d"/></linearGradient><linearGradient id="b60" x2="0" y2="1"><stop offset="0" stop-color="#b5b573"/><stop offset="0.28" stop-color="#80800e"/><stop offset="0.6" stop-color="#75750f"/><stop offset="1" stop-color="#3d3d12"/></linearGradient><clipPath id="cb"><rect x="58" y="891" width="822" height="106"/></clipPath><linearGradient id="b61" x2="0" y2="1"><stop offset="0" stop-color="#ffffff"/><stop offset="0.28" stop-color="#ffffff"/><stop offset="0.6" stop-color="#e8e8e8"/><stop offset="1" stop-color="#6d6d6d"/></linearGradient><linearGradient id="b62" x2="0" y2="1"><stop offset="0" stop-color="#b9b3b3"/><stop offset="0.28" stop-color="#867c7c"/><stop offset="0.6" stop-color="#7b7272"/><stop offset="1" stop-color="#3f3c3c"/></linearGradient><linearGradient id="b63" x2="0" y2="1"><stop offset="0" stop-color="#b3b9b3"/><stop offset="0.28" stop-color="#7c867c"/><stop offset="0.6" stop-color="#727b72"/><stop offset="1" stop-color="#3c3f3c"/></linearGradient><linearGradient id="b64" x2="0" y2="1"><stop offset="0" stop-color="#b3b3b9"/><stop offset="0.28" stop-color="#7c7c86"/><stop offset="0.6" stop-color="#72727b"/><stop offset="1" stop-color="#3c3c3f"/></linearGradient><linearGradient id="b65" x2="0" y2="1"><stop offset="0" stop-color="#b3b9b9"/><stop offset="0.28" stop-color="#7c8686"/><stop offset="0.6" stop-color="#727b7b"/><stop offset="1" stop-color="#3c3f3f"/></linearGradient><linearGradient id="b66" x2="0" y2="1"><stop offset="0" stop-color="#b9b3b9"/><stop offset="0.28" stop-color="#867c86"/><stop offset="0.6" stop-color="#7b727b"/><stop offset="1" stop-color="#3f3c3f"/></linearGradient><linearGradient id="b67" x2="0" y2="1"><stop offset="0" stop-color="#b9b9b3"/><stop offset="0.28" stop-color="#86867c"/><stop offset="0.6" stop-color="#7b7b72"/><stop offset="1" stop-color="#3f3f3c"/></linearGradient><linearGradient id="b68" x2="0" y2="1"><stop offset="0" stop-color="#b9b1b1"/><stop offset="0.28" stop-color="#867878"/><stop offset="0.6" stop-color="#7b6e6e"/><stop offset="1" stop-color="#3f3a3a"/></linearGradient><linearGradient id="b69" x2="0" y2="1"><stop offset="0" stop-color="#b1b9b1"/><stop offset="0.28" stop-color="#788678"/><stop offset="0.6" stop-color="#6e7b6e"/><stop offset="1" stop-color="#3a3f3a"/></linearGradient><linearGradient id="b70" x2="0" y2="1"><stop offset="0" stop-color="#b1b1b9"/><stop offset="0.28" stop-color="#787886"/><stop offset="0.6" stop-color="#6e6e7b"/><stop offset="1" stop-color="#3a3a3f"/></linearGradient><linearGradient id="b71" x2="0" y2="1"><stop offset="0" stop-color="#b1b9b9"/><stop offset="0.28" stop-color="#788686"/><stop offset="0.6" stop-color="#6e7b7b"/><stop offset="1" stop-color="#3a3f3f"/></linearGradient><linearGradient id="b72" x2="0" y2="1"><stop offset="0" stop-color="#b9b1b9"/><stop offset="0.28" stop-color="#867886"/><stop offset="0.6" stop-color="#7b6e7b"/><stop offset="1" stop-color="#3f3a3f"/></linearGradient><linearGradient id="b73" x2="0" y2="1"><stop offset="0" stop-color="#b9b9b1"/><stop offset="0.28" stop-color="#868678"/><stop offset="0.6" stop-color="#7b7b6e"/><stop offset="1" stop-color="#3f3f3a"/></linearGradient><linearGradient id="b74" x2="0" y2="1"><stop offset="0" stop-color="#b9aeae"/><stop offset="0.28" stop-color="#867474"/><stop offset="0.6" stop-color="#7b6a6a"/><stop offset="1" stop-color="#3f3838"/></linearGradient><linearGradient id="b75" x2="0" y2="1"><stop offset="0" stop-color="#aeb9ae"/><stop offset="0.28" stop-color="#748674"/><stop offset="0.6" stop-color="#6a7b6a"/><stop offset="1" stop-color="#383f38"/></linearGradient><linearGradient id="b76" x2="0" y2="1"><stop offset="0" stop-color="#aeaeb9"/><stop offset="0.28" stop-color="#747486"/><stop offset="0.6" stop-color="#6a6a7b"/><stop offset="1" stop-color="#38383f"/></linearGradient><linearGradient id="b77" x2="0" y2="1"><stop offset="0" stop-color="#aeb9b9"/><stop offset="0.28" stop-color="#748686"/><stop offset="0.6" stop-color="#6a7b7b"/><stop offset="1" stop-color="#383f3f"/></linearGradient><linearGradient id="b78" x2="0" y2="1"><stop offset="0" stop-color="#b9aeb9"/><stop offset="0.28" stop-color="#867486"/><stop offset="0.6" stop-color="#7b6a7b"/><stop offset="1" stop-color="#3f383f"/></linearGradient><linearGradient id="b79" x2="0" y2="1"><stop offset="0" stop-color="#b9b9ae"/><stop offset="0.28" stop-color="#868674"/><stop offset="0.6" stop-color="#7b7b6a"/><stop offset="1" stop-color="#3f3f38"/></linearGradient><linearGradient id="b80" x2="0" y2="1"><stop offset="0" stop-color="#b9abab"/><stop offset="0.28" stop-color="#866f6f"/><stop offset="0.6" stop-color="#7b6666"/><stop offset="1" stop-color="#3f3737"/></linearGradient><linearGradient id="b81" x2="0" y2="1"><stop offset="0" stop-color="#abb9ab"/><stop offset="0.28" stop-color="#6f866f"/><stop offset="0.6" stop-color="#667b66"/><stop offset="1" stop-color="#373f37"/></linearGradient><linearGradient id="b82" x2="0" y2="1"><stop offset="0" stop-color="#ababb9"/><stop offset="0.28" stop-color="#6f6f86"/><stop offset="0.6" stop-color="#66667b"/><stop offset="1" stop-color="#37373f"/></linearGradient><linearGradient id="b83" x2="0" y2="1"><stop offset="0" stop-color="#abb9b9"/><stop offset="0.28" stop-color="#6f8686"/><stop offset="0.6" stop-color="#667b7b"/><stop offset="1" stop-color="#373f3f"/></linearGradient><linearGradient id="b84" x2="0" y2="1"><stop offset="0" stop-color="#b9abb9"/><stop offset="0.28" stop-color="#866f86"/><stop offset="0.6" stop-color="#7b667b"/><stop offset="1" stop-color="#3f373f"/></linearGradient><linearGradient id="b85" x2="0" y2="1"><stop offset="0" stop-color="#b9b9ab"/><stop offset="0.28" stop-color="#86866f"/><stop offset="0.6" stop-color="#7b7b66"/><stop offset="1" stop-color="#3f3f37"/></linearGradient><linearGradient id="b86" x2="0" y2="1"><stop offset="0" stop-color="#b9a8a8"/><stop offset="0.28" stop-color="#866969"/><stop offset="0.6" stop-color="#7b6161"/><stop offset="1" stop-color="#3f3434"/></linearGradient><linearGradient id="b87" x2="0" y2="1"><stop offset="0" stop-color="#a8b9a8"/><stop offset="0.28" stop-color="#698669"/><stop offset="0.6" stop-color="#617b61"/><stop offset="1" stop-color="#343f34"/></linearGradient><linearGradient id="b88" x2="0" y2="1"><stop offset="0" stop-color="#a8a8b9"/><stop offset="0.28" stop-color="#696986"/><stop offset="0.6" stop-color="#61617b"/><stop offset="1" stop-color="#34343f"/></linearGradient><linearGradient id="b89" x2="0" y2="1"><stop offset="0" stop-color="#a8b9b9"/><stop offset="0.28" stop-color="#698686"/><stop offset="0.6" stop-color="#617b7b"/><stop offset="1" stop-color="#343f3f"/></linearGradient><linearGradient id="b90" x2="0" y2="1"><stop offset="0" stop-color="#b9a8b9"/><stop offset="0.28" stop-color="#866986"/><stop offset="0.6" stop-color="#7b617b"/><stop offset="1" stop-color="#3f343f"/></linearGradient><linearGradient id="b91" x2="0" y2="1"><stop offset="0" stop-color="#b9b9a8"/><stop offset="0.28" stop-color="#868669"/><stop offset="0.6" stop-color="#7b7b61"/><stop offset="1" stop-color="#3f3f34"/></linearGradient><linearGradient id="b92" x2="0" y2="1"><stop offset="0" stop-color="#b9a5a5"/><stop offset="0.28" stop-color="#866363"/><stop offset="0.6" stop-color="#7b5b5b"/><stop offset="1" stop-color="#3f3232"/></linearGradient><linearGradient id="b93" x2="0" y2="1"><stop offset="0" stop-color="#a5b9a5"/><stop offset="0.28" stop-color="#638663"/><stop offset="0.6" stop-color="#5b7b5b"/><stop offset="1" stop-color="#323f32"/></linearGradient><linearGradient id="b94" x2="0" y2="1"><stop offset="0" stop-color="#a5a5b9"/><stop offset="0.28" stop-color="#636386"/><stop offset="0.6" stop-color="#5b5b7b"/><stop offset="1" stop-color="#32323f"/></linearGradient><linearGradient id="b95" x2="0" y2="1"><stop offset="0" stop-color="#a5b9b9"/><stop offset="0.28" stop-color="#638686"/><stop offset="0.6" stop-color="#5b7b7b"/><stop offset="1" stop-color="#323f3f"/></linearGradient><linearGradient id="b96" x2="0" y2="1"><stop offset="0" stop-color="#b9a5b9"/><stop offset="0.28" stop-color="#866386"/><stop offset="0.6" stop-color="#7b5b7b"/><stop offset="1" stop-color="#3f323f"/></linearGradient><linearGradient id="b97" x2="0" y2="1"><stop offset="0" stop-color="#b9b9a5"/><stop offset="0.28" stop-color="#868663"/><stop offset="0.6" stop-color="#7b7b5b"/><stop offset="1" stop-color="#3f3f32"/></linearGradient><linearGradient id="b98" x2="0" y2="1"><stop offset="0" stop-color="#b9a0a0"/><stop offset="0.28" stop-color="#865b5b"/><stop offset="0.6" stop-color="#7b5454"/><stop offset="1" stop-color="#3f2f2f"/></linearGradient><linearGradient id="b99" x2="0" y2="1"><stop offset="0" stop-color="#a0b9a0"/><stop offset="0.28" stop-color="#5b865b"/><stop offset="0.6" stop-color="#547b54"/><stop offset="1" stop-color="#2f3f2f"/></linearGradient><linearGradient id="b100" x2="0" y2="1"><stop offset="0" stop-color="#a0a0b9"/><stop offset="0.28" stop-color="#5b5b86"/><stop offset="0.6" stop-color="#54547b"/><stop offset="1" stop-color="#2f2f3f"/></linearGradient><linearGradient id="b101" x2="0" y2="1"><stop offset="0" stop-color="#a0b9b9"/><stop offset="0.28" stop-color="#5b8686"/><stop offset="0.6" stop-color="#547b7b"/><stop offset="1" stop-color="#2f3f3f"/></linearGradient><linearGradient id="b102" x2="0" y2="1"><stop offset="0" stop-color="#b9a0b9"/><stop offset="0.28" stop-color="#865b86"/><stop offset="0.6" stop-color="#7b547b"/><stop offset="1" stop-color="#3f2f3f"/></linearGradient><linearGradient id="b103" x2="0" y2="1"><stop offset="0" stop-color="#b9b9a0"/><stop offset="0.28" stop-color="#86865b"/><stop offset="0.6" stop-color="#7b7b54"/><stop offset="1" stop-color="#3f3f2f"/></linearGradient><linearGradient id="b104" x2="0" y2="1"><stop offset="0" stop-color="#b99a9a"/><stop offset="0.28" stop-color="#865252"/><stop offset="0.6" stop-color="#7b4b4b"/><stop offset="1" stop-color="#3f2b2b"/></linearGradient><linearGradient id="b105" x2="0" y2="1"><stop offset="0" stop-color="#9ab99a"/><stop offset="0.28" stop-color="#528652"/><stop offset="0.6" stop-color="#4b7b4b"/><stop offset="1" stop-color="#2b3f2b"/></linearGradient><linearGradient id="b106" x2="0" y2="1"><stop offset="0" stop-color="#9a9ab9"/><stop offset="0.28" stop-color="#525286"/><stop offset="0.6" stop-color="#4b4b7b"/><stop offset="1" stop-color="#2b2b3f"/></linearGradient><linearGradient id="b107" x2="0" y2="1"><stop offset="0" stop-color="#9ab9b9"/><stop offset="0.28" stop-color="#528686"/><stop offset="0.6" stop-color="#4b7b7b"/><stop offset="1" stop-color="#2b3f3f"/></linearGradient><linearGradient id="b108" x2="0" y2="1"><stop offset="0" stop-color="#b99ab9"/><stop offset="0.28" stop-color="#865286"/><stop offset="0.6" stop-color="#7b4b7b"/><stop offset="1" stop-color="#3f2b3f"/></linearGradient><linearGradient id="b109" x2="0" y2="1"><stop offset="0" stop-color="#b9b99a"/><stop offset="0.28" stop-color="#868652"/><stop offset="0.6" stop-color="#7b7b4b"/><stop offset="1" stop-color="#3f3f2b"/></linearGradient><linearGradient id="b110" x2="0" y2="1"><stop offset="0" stop-color="#b99292"/><stop offset="0.28" stop-color="#864343"/><stop offset="0.6" stop-color="#7b3e3e"/><stop offset="1" stop-color="#3f2626"/></linearGradient><linearGradient id="b111" x2="0" y2="1"><stop offset="0" stop-color="#92b992"/><stop offset="0.28" stop-color="#438643"/><stop offset="0.6" stop-color="#3e7b3e"/><stop offset="1" stop-color="#263f26"/></linearGradient><linearGradient id="b112" x2="0" y2="1"><stop offset="0" stop-color="#9292b9"/><stop offset="0.28" stop-color="#434386"/><stop offset="0.6" stop-color="#3e3e7b"/><stop offset="1" stop-color="#26263f"/></linearGradient><linearGradient id="b113" x2="0" y2="1"><stop offset="0" stop-color="#92b9b9"/><stop offset="0.28" stop-color="#438686"/><stop offset="0.6" stop-color="#3e7b7b"/><stop offset="1" stop-color="#263f3f"/></linearGradient><linearGradient id="b114" x2="0" y2="1"><stop offset="0" stop-color="#b992b9"/><stop offset="0.28" stop-color="#864386"/><stop offset="0.6" stop-color="#7b3e7b"/><stop offset="1" stop-color="#3f263f"/></linearGradient><linearGradient id="b115" x2="0" y2="1"><stop offset="0" stop-color="#b9b992"/><stop offset="0.28" stop-color="#868643"/><stop offset="0.6" stop-color="#7b7b3e"/><stop offset="1" stop-color="#3f3f26"/></linearGradient><linearGradient id="b116" x2="0" y2="1"><stop offset="0" stop-color="#b57373"/><stop offset="0.28" stop-color="#800e0e"/><stop offset="0.6" stop-color="#750f0f"/><stop offset="1" stop-color="#3d1212"/></linearGradient><linearGradient id="b117" x2="0" y2="1"><stop offset="0" stop-color="#73b573"/><stop offset="0.28" stop-color="#0e800e"/><stop offset="0.6" stop-color="#0f750f"/><stop offset="1" stop-color="#123d12"/></linearGradient><linearGradient id="b118" x2="0" y2="1"><stop offset="0" stop-color="#7373b5"/><stop offset="0.28" stop-color="#0e0e80"/><stop offset="0.6" stop-color="#0f0f75"/><stop offset="1" stop-color="#12123d"/></linearGradient><linearGradient id="b119" x2="0" y2="1"><stop offset="0" stop-color="#73b5b5"/><stop offset="0.28" stop-color="#0e8080"/><stop offset="0.6" stop-color="#0f7575"/><stop offset="1" stop-color="#123d3d"/></linearGradient><linearGradient id="b120" x2="0" y2="1"><stop offset="0" stop-color="#b573b5"/><stop offset="0.28" stop-color="#800e80"/><stop offset="0.6" stop-color="#750f75"/><stop offset="1" stop-color="#3d123d"/></linearGradient><linearGradient id="b121" x2="0" y2="1"><stop offset="0" stop-color="#b5b573"/><stop offset="0.28" stop-color="#80800e"/><stop offset="0.6" stop-color="#75750f"/><stop offset="1" stop-color="#3d3d12"/></linearGradient><linearGradient id="g0"><stop offset="0.000" stop-color="#00ff00"/><stop offset="1.000" stop-color="#00ff00"/></linearGradient><linearGradient id="g1"><stop offset="0.000" stop-color="#00ff00"/><stop offset="1.000" stop-color="#00ff00"/></linearGradient><linearGradient id="g2"><stop offset="0.000" stop-color="#00ff00"/><stop offset="1.000" stop-color="#02ff00"/></linearGradient><linearGradient id="g3"><stop offset="0.000" stop-color="#00ff00"/><stop offset="0.875" stop-color="#04ff00"/><stop offset="1.000" stop-color="#2cff00"/></linearGradient><linearGradient id="g4"><stop offset="0.000" stop-color="#00ff00"/><stop offset="0.781" stop-color="#03ff00"/><stop offset="1.000" stop-color="#59ff00"/></linearGradient><linearGradient id="g5"><stop offset="0.000" stop-color="#00ff02"/><stop offset="0.708" stop-color="#02ff00"/><stop offset="0.974" stop-color="#7cff00"/><stop offset="1.000" stop-color="#8aff00"/></linearGradient><linearGradient id="g6"><stop offset="0.000" stop-color="#00ff05"/><stop offset="0.651" stop-color="#02ff00"/><stop offset="0.893" stop-color="#7cff00"/><stop offset="1.000" stop-color="#beff00"/></linearGradient><linearGradient id="g7"><stop offset="0.000" stop-color="#00ff08"/><stop offset="0.503" stop-color="#00ff00"/><stop offset="0.605" stop-color="#04ff00"/><stop offset="0.822" stop-color="#7cff00"/><stop offset="1.000" stop-color="#fbff00"/></linearGradient><linearGradient id="g8"><stop offset="0.000" stop-color="#00ff0c"/><stop offset="0.515" stop-color="#00ff00"/><stop offset="0.565" stop-color="#03ff00"/><stop offset="0.765" stop-color="#7cff00"/><stop offset="0.935" stop-color="#fffe00"/><stop offset="1.000" stop-color="#ffcd00"/></linearGradient><linearGradient id="g9"><stop offset="0.000" stop-color="#00ff0f"/><stop offset="0.530" stop-color="#02ff00"/><stop offset="0.716" stop-color="#7cff00"/><stop offset="0.874" stop-color="#fffd00"/><stop offset="0.963" stop-color="#ffbb00"/><stop offset="1.000" stop-color="#ffa600"/></linearGradient><linearGradient id="g10"><stop offset="0.000" stop-color="#00ff12"/><stop offset="0.498" stop-color="#02ff00"/><stop offset="0.671" stop-color="#7cff00"/><stop offset="0.818" stop-color="#fffc00"/><stop offset="0.900" stop-color="#ffba00"/><stop offset="1.000" stop-color="#ff8700"/></linearGradient><linearGradient id="g11"><stop offset="0.000" stop-color="#00ff15"/><stop offset="0.473" stop-color="#04ff01"/><stop offset="0.633" stop-color="#7cff00"/><stop offset="0.771" stop-color="#fffc00"/><stop offset="0.849" stop-color="#ffb900"/><stop offset="0.963" stop-color="#ff7e00"/><stop offset="1.000" stop-color="#ff7000"/></linearGradient><linearGradient id="g12"><stop offset="0.000" stop-color="#00ff18"/><stop offset="0.450" stop-color="#03ff06"/><stop offset="0.600" stop-color="#7cff00"/><stop offset="0.723" stop-color="#faff00"/><stop offset="0.762" stop-color="#ffdb00"/><stop offset="0.850" stop-color="#ff9b00"/><stop offset="0.981" stop-color="#ff6300"/><stop offset="1.000" stop-color="#ff5d00"/></linearGradient><linearGradient id="g13"><stop offset="0.000" stop-color="#00ff1c"/><stop offset="0.427" stop-color="#02ff0a"/><stop offset="0.569" stop-color="#7bff01"/><stop offset="0.690" stop-color="#ffff00"/><stop offset="0.759" stop-color="#ffbb00"/><stop offset="0.858" stop-color="#ff8000"/><stop offset="1.000" stop-color="#ff4e00"/></linearGradient><linearGradient id="g14"><stop offset="0.000" stop-color="#00ff1f"/><stop offset="0.407" stop-color="#01ff0e"/><stop offset="0.541" stop-color="#7bff05"/><stop offset="0.655" stop-color="#fffe00"/><stop offset="0.721" stop-color="#ffba00"/><stop offset="0.814" stop-color="#ff7f00"/><stop offset="0.959" stop-color="#ff4a00"/><stop offset="1.000" stop-color="#ff4000"/></linearGradient><linearGradient id="g15"><stop offset="0.000" stop-color="#00ff22"/><stop offset="0.391" stop-color="#04ff12"/><stop offset="0.516" stop-color="#7bff0a"/><stop offset="0.625" stop-color="#fffd01"/><stop offset="0.688" stop-color="#ffb900"/><stop offset="0.776" stop-color="#ff7e00"/><stop offset="0.914" stop-color="#ff4a00"/><stop offset="1.000" stop-color="#ff3500"/></linearGradient><linearGradient id="g16"><stop offset="0.000" stop-color="#00ff25"/><stop offset="0.374" stop-color="#03ff17"/><stop offset="0.494" stop-color="#7bff0f"/><stop offset="0.597" stop-color="#fffd07"/><stop offset="0.657" stop-color="#ffb801"/><stop offset="0.742" stop-color="#ff7d00"/><stop offset="0.874" stop-color="#ff4900"/><stop offset="1.000" stop-color="#ff2c00"/></linearGradient><linearGradient id="g17"><stop offset="0.000" stop-color="#00ff29"/><stop offset="0.357" stop-color="#02ff1b"/><stop offset="0.471" stop-color="#7bff14"/><stop offset="0.571" stop-color="#fffc0c"/><stop offset="0.628" stop-color="#ffb805"/><stop offset="0.709" stop-color="#ff7d00"/><stop offset="0.835" stop-color="#ff4900"/><stop offset="1.000" stop-color="#ff2300"/></linearGradient><linearGradient id="g18"><stop offset="0.000" stop-color="#00ff2c"/><stop offset="0.343" stop-color="#01ff1f"/><stop offset="0.452" stop-color="#7bff19"/><stop offset="0.542" stop-color="#faff13"/><stop offset="0.565" stop-color="#ffe20f"/><stop offset="0.625" stop-color="#ffa207"/><stop offset="0.715" stop-color="#ff6a00"/><stop offset="0.856" stop-color="#ff3800"/><stop offset="1.000" stop-color="#ff1c00"/></linearGradient><linearGradient id="g19"><stop offset="0.000" stop-color="#00ff2f"/><stop offset="0.332" stop-color="#03ff24"/><stop offset="0.438" stop-color="#7eff1e"/><stop offset="0.524" stop-color="#ffff18"/><stop offset="0.573" stop-color="#ffbc0f"/><stop offset="0.645" stop-color="#ff8006"/><stop offset="0.756" stop-color="#ff4c00"/><stop offset="0.939" stop-color="#ff1f00"/><stop offset="1.000" stop-color="#ff1600"/></linearGradient><linearGradient id="g20"><stop offset="0.000" stop-color="#00ff32"/><stop offset="0.320" stop-color="#03ff28"/><stop offset="0.419" stop-color="#7bff23"/><stop offset="0.504" stop-color="#fffe1e"/><stop offset="0.552" stop-color="#ffbb13"/><stop offset="0.621" stop-color="#ff800a"/><stop offset="0.728" stop-color="#ff4b01"/><stop offset="0.904" stop-color="#ff1f00"/><stop offset="1.000" stop-color="#ff1000"/></linearGradient><linearGradient id="g21"><stop offset="0.000" stop-color="#00ff36"/><stop offset="0.308" stop-color="#02ff2d"/><stop offset="0.403" stop-color="#7aff28"/><stop offset="0.485" stop-color="#fffe23"/><stop offset="0.531" stop-color="#ffba18"/><stop offset="0.597" stop-color="#ff7f0d"/><stop offset="0.700" stop-color="#ff4b04"/><stop offset="0.869" stop-color="#ff1e00"/><stop offset="1.000" stop-color="#ff0b00"/></linearGradient><linearGradient id="g22"><stop offset="0.000" stop-color="#00ff39"/><stop offset="0.300" stop-color="#04ff31"/><stop offset="0.391" stop-color="#7eff2e"/><stop offset="0.468" stop-color="#fffd29"/><stop offset="0.512" stop-color="#ffba1c"/><stop offset="0.577" stop-color="#ff7e11"/><stop offset="0.676" stop-color="#ff4a06"/><stop offset="0.839" stop-color="#ff1e00"/><stop offset="1.000" stop-color="#ff0600"/></linearGradient><linearGradient id="g23"><stop offset="0.000" stop-color="#00ff3d"/><stop offset="0.289" stop-color="#03ff36"/><stop offset="0.378" stop-color="#7eff33"/><stop offset="0.452" stop-color="#fffc2f"/><stop offset="0.495" stop-color="#ffb921"/><stop offset="0.557" stop-color="#ff7d14"/><stop offset="0.653" stop-color="#ff4909"/><stop offset="0.811" stop-color="#ff1d00"/><stop offset="1.000" stop-color="#ff0200"/></linearGradient><linearGradient id="g24"><stop offset="0.000" stop-color="#00ff40"/><stop offset="0.279" stop-color="#03ff3b"/><stop offset="0.363" stop-color="#7aff38"/><stop offset="0.432" stop-color="#f9ff36"/><stop offset="0.446" stop-color="#ffe931"/><stop offset="0.492" stop-color="#ffa721"/><stop offset="0.559" stop-color="#ff6e14"/><stop offset="0.663" stop-color="#ff3c09"/><stop offset="0.838" stop-color="#ff1300"/><stop offset="1.000" stop-color="#ff0000"/></linearGradient><linearGradient id="g25"><stop offset="0.000" stop-color="#00ff43"/><stop offset="0.271" stop-color="#02ff40"/><stop offset="0.351" stop-color="#7aff3e"/><stop offset="0.418" stop-color="#faff3c"/><stop offset="0.432" stop-color="#ffe936"/><stop offset="0.474" stop-color="#ffa926"/><stop offset="0.537" stop-color="#ff7018"/><stop offset="0.635" stop-color="#ff3e0c"/><stop offset="0.801" stop-color="#ff1401"/><stop offset="0.980" stop-color="#ff0000"/><stop offset="1.000" stop-color="#ff0000"/></linearGradient><linearGradient id="g26"><stop offset="0.000" stop-color="#00ff47"/><stop offset="0.265" stop-color="#04ff44"/><stop offset="0.343" stop-color="#7dff43"/><stop offset="0.408" stop-color="#ffff42"/><stop offset="0.445" stop-color="#ffbc30"/><stop offset="0.499" stop-color="#ff8120"/><stop offset="0.581" stop-color="#ff4c12"/><stop offset="0.718" stop-color="#ff1f06"/><stop offset="0.928" stop-color="#ff0000"/><stop offset="1.000" stop-color="#ff0000"/></linearGradient><linearGradient id="g27"><stop offset="0.000" stop-color="#00ff4a"/><stop offset="0.256" stop-color="#03ff49"/><stop offset="0.332" stop-color="#7dff49"/><stop offset="0.395" stop-color="#fffe48"/><stop offset="0.431" stop-color="#ffbc35"/><stop offset="0.483" stop-color="#ff8024"/><stop offset="0.563" stop-color="#ff4c15"/><stop offset="0.695" stop-color="#ff1f08"/><stop offset="0.897" stop-color="#ff0000"/><stop offset="1.000" stop-color="#ff0000"/></linearGradient><linearGradient id="g28"><stop offset="0.000" stop-color="#00ff4e"/><stop offset="0.249" stop-color="#02ff4e"/><stop offset="0.322" stop-color="#7dff4e"/><stop offset="0.384" stop-color="#fffd4e"/><stop offset="0.418" stop-color="#ffbb3a"/><stop offset="0.469" stop-color="#ff7f27"/><stop offset="0.547" stop-color="#ff4b17"/><stop offset="0.676" stop-color="#ff1e0a"/><stop offset="0.867" stop-color="#ff0000"/><stop offset="1.000" stop-color="#ff0000"/></linearGradient><linearGradient id="g29"><stop offset="0.000" stop-color="#00ff51"/><stop offset="0.241" stop-color="#02ff53"/><stop offset="0.310" stop-color="#79ff54"/><stop offset="0.368" stop-color="#f8ff55"/><stop offset="0.376" stop-color="#fff351"/><stop offset="0.412" stop-color="#ffb13c"/><stop offset="0.463" stop-color="#ff7729"/><stop offset="0.545" stop-color="#ff4418"/><stop offset="0.680" stop-color="#ff180a"/><stop offset="0.851" stop-color="#ff0001"/><stop offset="1.000" stop-color="#ff0000"/></linearGradient><linearGradient id="g30"><stop offset="0.000" stop-color="#00ff55"/><stop offset="0.236" stop-color="#04ff58"/><stop offset="0.304" stop-color="#7dff5a"/><stop offset="0.362" stop-color="#fffc5a"/><stop offset="0.395" stop-color="#ffb943"/><stop offset="0.443" stop-color="#ff7d2f"/><stop offset="0.516" stop-color="#ff4a1d"/><stop offset="0.638" stop-color="#ff1d0d"/><stop offset="0.816" stop-color="#ff0003"/><stop offset="1.000" stop-color="#ff0000"/></linearGradient><linearGradient id="g31"><stop offset="0.000" stop-color="#00ff59"/><stop offset="0.229" stop-color="#03ff5e"/><stop offset="0.295" stop-color="#7dff60"/><stop offset="0.350" stop-color="#feff62"/><stop offset="0.383" stop-color="#ffb848"/><stop offset="0.430" stop-color="#ff7d32"/><stop offset="0.502" stop-color="#ff4920"/><stop offset="0.620" stop-color="#ff1d0f"/><stop offset="0.791" stop-color="#ff0004"/><stop offset="1.000" stop-color="#ff0000"/></linearGradient><linearGradient id="g32"><stop offset="0.000" stop-color="#00ff5c"/><stop offset="0.223" stop-color="#02ff63"/><stop offset="0.288" stop-color="#7dff66"/><stop offset="0.341" stop-color="#ffff69"/><stop offset="0.372" stop-color="#ffbb4e"/><stop offset="0.416" stop-color="#ff8038"/><stop offset="0.484" stop-color="#ff4b23"/><stop offset="0.595" stop-color="#ff1f12"/><stop offset="0.764" stop-color="#ff0006"/><stop offset="1.000" stop-color="#ff0000"/></linearGradient><linearGradient id="g33"><stop offset="0.000" stop-color="#00ff60"/><stop offset="0.216" stop-color="#01ff68"/><stop offset="0.277" stop-color="#79ff6c"/><stop offset="0.331" stop-color="#fffe6f"/><stop offset="0.361" stop-color="#ffba54"/><stop offset="0.404" stop-color="#ff7f3b"/><stop offset="0.470" stop-color="#ff4b26"/><stop offset="0.580" stop-color="#ff1e14"/><stop offset="0.742" stop-color="#ff0007"/><stop offset="1.000" stop-color="#ff0000"/></linearGradient><linearGradient id="g34"><stop offset="0.000" stop-color="#00ff64"/><stop offset="0.213" stop-color="#04ff6d"/><stop offset="0.272" stop-color="#7cff72"/><stop offset="0.323" stop-color="#fffd76"/><stop offset="0.351" stop-color="#ffbc5a"/><stop offset="0.393" stop-color="#ff8040"/><stop offset="0.455" stop-color="#ff4c2a"/><stop offset="0.560" stop-color="#ff1f17"/><stop offset="0.721" stop-color="#ff0009"/><stop offset="1.000" stop-color="#ff0000"/></linearGradient><linearGradient id="g35"><stop offset="0.000" stop-color="#00ff67"/><stop offset="0.211" stop-color="#03ff73"/><stop offset="0.270" stop-color="#7cff78"/><stop offset="0.321" stop-color="#fffd7d"/><stop offset="0.348" stop-color="#ffbb5f"/><stop offset="0.390" stop-color="#ff7f44"/><stop offset="0.452" stop-color="#ff4b2d"/><stop offset="0.556" stop-color="#ff1f19"/><stop offset="0.714" stop-color="#ff000a"/><stop offset="1.000" stop-color="#ff0000"/></linearGradient><linearGradient id="g36"><stop offset="0.000" stop-color="#00ff6b"/><stop offset="0.210" stop-color="#02ff78"/><stop offset="0.270" stop-color="#7cff7e"/><stop offset="0.320" stop-color="#fffc83"/><stop offset="0.348" stop-color="#ffba64"/><stop offset="0.390" stop-color="#ff7e48"/><stop offset="0.452" stop-color="#ff4b30"/><stop offset="0.557" stop-color="#ff1e1b"/><stop offset="0.711" stop-color="#ff000c"/><stop offset="1.000" stop-color="#ff0000"/></linearGradient><linearGradient id="g37"><stop offset="0.000" stop-color="#00ff6f"/><stop offset="0.211" stop-color="#01ff7e"/><stop offset="0.271" stop-color="#7cff85"/><stop offset="0.321" stop-color="#fffb8a"/><stop offset="0.349" stop-color="#ffba6a"/><stop offset="0.391" stop-color="#ff7d4c"/><stop offset="0.454" stop-color="#ff4a33"/><stop offset="0.558" stop-color="#ff1e1d"/><stop offset="0.712" stop-color="#ff000d"/><stop offset="1.000" stop-color="#ff0000"/></linearGradient><linearGradient id="g38"><stop offset="0.000" stop-color="#00ff73"/><stop offset="0.213" stop-color="#04ff84"/><stop offset="0.271" stop-color="#7cff8b"/><stop offset="0.320" stop-color="#ffff93"/><stop offset="0.348" stop-color="#ffbc71"/><stop offset="0.388" stop-color="#ff8152"/><stop offset="0.449" stop-color="#ff4d37"/><stop offset="0.551" stop-color="#ff2020"/><stop offset="0.708" stop-color="#ff000f"/><stop offset="1.000" stop-color="#ff0001"/></linearGradient><linearGradient id="g39"><stop offset="0.000" stop-color="#00ff77"/><stop offset="0.213" stop-color="#03ff89"/><stop offset="0.271" stop-color="#7cff92"/><stop offset="0.320" stop-color="#ffff9a"/><stop offset="0.348" stop-color="#ffbb76"/><stop offset="0.388" stop-color="#ff8056"/><stop offset="0.450" stop-color="#ff4c3a"/><stop offset="0.552" stop-color="#ff1f22"/><stop offset="0.708" stop-color="#ff0010"/><stop offset="1.000" stop-color="#ff0002"/></linearGradient><linearGradient id="g40"><stop offset="0.000" stop-color="#00ff7b"/><stop offset="0.213" stop-color="#02ff8f"/><stop offset="0.272" stop-color="#7cff98"/><stop offset="0.321" stop-color="#fffea1"/><stop offset="0.349" stop-color="#ffba7b"/><stop offset="0.390" stop-color="#ff7f5a"/><stop offset="0.451" stop-color="#ff4b3d"/><stop offset="0.554" stop-color="#ff1f24"/><stop offset="0.707" stop-color="#ff0012"/><stop offset="1.000" stop-color="#ff0003"/></linearGradient><linearGradient id="g41"><stop offset="0.000" stop-color="#00ff7f"/><stop offset="0.212" stop-color="#01ff95"/><stop offset="0.271" stop-color="#7bff9f"/><stop offset="0.320" stop-color="#fffda8"/><stop offset="0.349" stop-color="#ffb981"/><stop offset="0.389" stop-color="#ff7e5e"/><stop offset="0.451" stop-color="#ff4a40"/><stop offset="0.554" stop-color="#ff1e26"/><stop offset="0.706" stop-color="#ff0014"/><stop offset="1.000" stop-color="#ff0004"/></linearGradient><linearGradient id="g42"><stop offset="0.000" stop-color="#00ff83"/><stop offset="0.215" stop-color="#04ff9b"/><stop offset="0.272" stop-color="#7bffa6"/><stop offset="0.321" stop-color="#fffcaf"/><stop offset="0.350" stop-color="#ffb886"/><stop offset="0.391" stop-color="#ff7d62"/><stop offset="0.453" stop-color="#ff4a43"/><stop offset="0.556" stop-color="#ff1d28"/><stop offset="0.707" stop-color="#ff0015"/><stop offset="1.000" stop-color="#ff0005"/></linearGradient><linearGradient id="g43"><stop offset="0.000" stop-color="#00ff87"/><stop offset="0.215" stop-color="#03ffa1"/><stop offset="0.272" stop-color="#7bffac"/><stop offset="0.322" stop-color="#fffbb7"/><stop offset="0.351" stop-color="#ffb88c"/><stop offset="0.391" stop-color="#ff7c67"/><stop offset="0.454" stop-color="#ff4946"/><stop offset="0.557" stop-color="#ff1d2a"/><stop offset="0.706" stop-color="#ff0017"/><stop offset="1.000" stop-color="#ff0006"/></linearGradient><linearGradient id="g44"><stop offset="0.000" stop-color="#00ff8b"/><stop offset="0.215" stop-color="#02ffa7"/><stop offset="0.272" stop-color="#7bffb3"/><stop offset="0.318" stop-color="#f9ffc0"/><stop offset="0.326" stop-color="#fff0b7"/><stop offset="0.354" stop-color="#ffb08d"/><stop offset="0.397" stop-color="#ff7667"/><stop offset="0.463" stop-color="#ff4346"/><stop offset="0.574" stop-color="#ff1829"/><stop offset="0.712" stop-color="#ff0018"/><stop offset="1.000" stop-color="#ff0007"/></linearGradient><linearGradient id="g45"><stop offset="0.000" stop-color="#00ff8f"/><stop offset="0.215" stop-color="#01ffad"/><stop offset="0.273" stop-color="#7bffba"/><stop offset="0.320" stop-color="#faffc8"/><stop offset="0.325" stop-color="#fff4c2"/><stop offset="0.354" stop-color="#ffb295"/><stop offset="0.395" stop-color="#ff796e"/><stop offset="0.460" stop-color="#ff454b"/><stop offset="0.567" stop-color="#ff1a2d"/><stop offset="0.709" stop-color="#ff001a"/><stop offset="1.000" stop-color="#ff0008"/></linearGradient><linearGradient id="g46"><stop offset="0.000" stop-color="#00ff93"/><stop offset="0.216" stop-color="#03ffb4"/><stop offset="0.272" stop-color="#7bffc2"/><stop offset="0.321" stop-color="#fffed0"/><stop offset="0.348" stop-color="#ffbca2"/><stop offset="0.387" stop-color="#ff8077"/><stop offset="0.449" stop-color="#ff4b52"/><stop offset="0.550" stop-color="#ff1e33"/><stop offset="0.701" stop-color="#ff001c"/><stop offset="1.000" stop-color="#ff0009"/></linearGradient><linearGradient id="g47"><stop offset="0.000" stop-color="#00ff98"/><stop offset="0.217" stop-color="#03ffba"/><stop offset="0.273" stop-color="#7affc9"/><stop offset="0.322" stop-color="#fffdd8"/><stop offset="0.349" stop-color="#ffbba7"/><stop offset="0.389" stop-color="#ff7f7c"/><stop offset="0.450" stop-color="#ff4a56"/><stop offset="0.552" stop-color="#ff1e35"/><stop offset="0.700" stop-color="#ff001e"/><stop offset="1.000" stop-color="#ff000a"/></linearGradient><linearGradient id="g48"><stop offset="0.000" stop-color="#00ff9c"/><stop offset="0.216" stop-color="#02ffc1"/><stop offset="0.272" stop-color="#7affd0"/><stop offset="0.321" stop-color="#fffce0"/><stop offset="0.348" stop-color="#ffbaad"/><stop offset="0.388" stop-color="#ff7e80"/><stop offset="0.450" stop-color="#ff4a59"/><stop offset="0.552" stop-color="#ff1d37"/><stop offset="0.699" stop-color="#ff0020"/><stop offset="1.000" stop-color="#ff000b"/></linearGradient><linearGradient id="g49"><stop offset="0.000" stop-color="#00ffa0"/><stop offset="0.217" stop-color="#01ffc7"/><stop offset="0.273" stop-color="#7affd8"/><stop offset="0.322" stop-color="#fffbe7"/><stop offset="0.350" stop-color="#ffb9b3"/><stop offset="0.390" stop-color="#ff7d85"/><stop offset="0.452" stop-color="#ff495c"/><stop offset="0.554" stop-color="#ff1d39"/><stop offset="0.699" stop-color="#ff0021"/><stop offset="1.000" stop-color="#ff000c"/></linearGradient><linearGradient id="g50"><stop offset="0.000" stop-color="#00ffa5"/><stop offset="0.218" stop-color="#03ffce"/><stop offset="0.274" stop-color="#7effe0"/><stop offset="0.320" stop-color="#fefff2"/><stop offset="0.349" stop-color="#ffb8b9"/><stop offset="0.389" stop-color="#ff7c89"/><stop offset="0.452" stop-color="#ff485f"/><stop offset="0.554" stop-color="#ff1c3c"/><stop offset="0.698" stop-color="#ff0023"/><stop offset="1.000" stop-color="#ff000d"/></linearGradient><linearGradient id="g51"><stop offset="0.000" stop-color="#00ffa9"/><stop offset="0.215" stop-color="#00ffd4"/><stop offset="0.235" stop-color="#23ffda"/><stop offset="0.288" stop-color="#9fffed"/><stop offset="0.321" stop-color="#fffffb"/><stop offset="0.349" stop-color="#ffbbc2"/><stop offset="0.387" stop-color="#ff8091"/><stop offset="0.446" stop-color="#ff4c66"/><stop offset="0.543" stop-color="#ff1f41"/><stop offset="0.692" stop-color="#ff0026"/><stop offset="1.000" stop-color="#ff000e"/></linearGradient><linearGradient id="g52"><stop offset="0.000" stop-color="#00ffae"/><stop offset="0.210" stop-color="#00ffd9"/><stop offset="0.220" stop-color="#05ffdc"/><stop offset="0.275" stop-color="#7effef"/><stop offset="0.321" stop-color="#fafaff"/><stop offset="0.332" stop-color="#ffdfe9"/><stop offset="0.363" stop-color="#ff9fb2"/><stop offset="0.410" stop-color="#ff6882"/><stop offset="0.483" stop-color="#ff3758"/><stop offset="0.609" stop-color="#ff0e35"/><stop offset="0.710" stop-color="#ff0025"/><stop offset="1.000" stop-color="#ff000f"/></linearGradient><linearGradient id="g53"><stop offset="0.000" stop-color="#00ffb2"/><stop offset="0.205" stop-color="#00ffde"/><stop offset="0.220" stop-color="#04ffe3"/><stop offset="0.275" stop-color="#7efff7"/><stop offset="0.311" stop-color="#d7f7ff"/><stop offset="0.327" stop-color="#ffedfd"/><stop offset="0.357" stop-color="#ffabc3"/><stop offset="0.399" stop-color="#ff7290"/><stop offset="0.466" stop-color="#ff3f63"/><stop offset="0.579" stop-color="#ff153d"/><stop offset="0.702" stop-color="#ff0028"/><stop offset="1.000" stop-color="#ff0010"/></linearGradient><linearGradient id="g54"><stop offset="0.000" stop-color="#00ffb7"/><stop offset="0.203" stop-color="#00ffe4"/><stop offset="0.219" stop-color="#03ffea"/><stop offset="0.277" stop-color="#82feff"/><stop offset="0.331" stop-color="#ffe2fc"/><stop offset="0.361" stop-color="#ffa4c3"/><stop offset="0.405" stop-color="#ff6b8f"/><stop offset="0.476" stop-color="#ff3a62"/><stop offset="0.595" stop-color="#ff103c"/><stop offset="0.704" stop-color="#ff0029"/><stop offset="1.000" stop-color="#ff0011"/></linearGradient><linearGradient id="g55"><stop offset="0.000" stop-color="#00ffbc"/><stop offset="0.197" stop-color="#00ffe9"/><stop offset="0.220" stop-color="#02fff1"/><stop offset="0.268" stop-color="#69faff"/><stop offset="0.333" stop-color="#ffdcff"/><stop offset="0.365" stop-color="#ff9dc3"/><stop offset="0.412" stop-color="#ff658e"/><stop offset="0.486" stop-color="#ff3461"/><stop offset="0.615" stop-color="#ff0c3a"/><stop offset="0.709" stop-color="#ff002b"/><stop offset="1.000" stop-color="#ff0012"/></linearGradient><linearGradient id="g56"><stop offset="0.000" stop-color="#00ffc1"/><stop offset="0.195" stop-color="#00ffef"/><stop offset="0.219" stop-color="#01fff8"/><stop offset="0.258" stop-color="#52f6ff"/><stop offset="0.337" stop-color="#ffd2fd"/><stop offset="0.371" stop-color="#ff93c0"/><stop offset="0.421" stop-color="#ff5c8b"/><stop offset="0.502" stop-color="#ff2d5d"/><stop offset="0.642" stop-color="#ff0637"/><stop offset="0.753" stop-color="#ff0027"/><stop offset="1.000" stop-color="#ff0014"/></linearGradient><linearGradient id="g57"><stop offset="0.000" stop-color="#00ffc5"/><stop offset="0.192" stop-color="#00fff5"/><stop offset="0.222" stop-color="#04feff"/><stop offset="0.327" stop-color="#e0d2ff"/><stop offset="0.342" stop-color="#ffc8fc"/><stop offset="0.378" stop-color="#ff8abe"/><stop offset="0.430" stop-color="#ff5589"/><stop offset="0.517" stop-color="#ff275b"/><stop offset="0.669" stop-color="#ff0134"/><stop offset="0.979" stop-color="#ff0016"/><stop offset="1.000" stop-color="#ff0015"/></linearGradient><linearGradient id="g58"><stop offset="0.000" stop-color="#00ffca"/><stop offset="0.187" stop-color="#00fffa"/><stop offset="0.221" stop-color="#03f7ff"/><stop offset="0.328" stop-color="#decaff"/><stop offset="0.345" stop-color="#ffbffa"/><stop offset="0.381" stop-color="#ff84be"/><stop offset="0.436" stop-color="#ff5088"/><stop offset="0.525" stop-color="#ff245a"/><stop offset="0.675" stop-color="#ff0035"/><stop offset="0.989" stop-color="#ff0016"/><stop offset="1.000" stop-color="#ff0016"/></linearGradient><linearGradient id="g59"><stop offset="0.000" stop-color="#00ffcf"/><stop offset="0.192" stop-color="#00fbff"/><stop offset="0.220" stop-color="#02f0ff"/><stop offset="0.330" stop-color="#dcc3ff"/><stop offset="0.347" stop-color="#ffbafd"/><stop offset="0.383" stop-color="#ff81c1"/><stop offset="0.438" stop-color="#ff4e8b"/><stop offset="0.528" stop-color="#ff225c"/><stop offset="0.677" stop-color="#ff0037"/><stop offset="0.987" stop-color="#ff0018"/><stop offset="1.000" stop-color="#ff0017"/></linearGradient><linearGradient id="g60"><stop offset="0.000" stop-color="#00ffd4"/><stop offset="0.173" stop-color="#00fbff"/><stop offset="0.221" stop-color="#01eaff"/><stop offset="0.333" stop-color="#dabcff"/><stop offset="0.352" stop-color="#ffb2fc"/><stop offset="0.390" stop-color="#ff79be"/><stop offset="0.447" stop-color="#ff4889"/><stop offset="0.540" stop-color="#ff1e5b"/><stop offset="0.683" stop-color="#ff0038"/><stop offset="0.992" stop-color="#ff0019"/><stop offset="1.000" stop-color="#ff0018"/></linearGradient><linearGradient id="g61"><stop offset="0.000" stop-color="#00ffd9"/><stop offset="0.153" stop-color="#00fbff"/><stop offset="0.222" stop-color="#03e3ff"/><stop offset="0.337" stop-color="#dcb5ff"/><stop offset="0.356" stop-color="#ffaafa"/><stop offset="0.394" stop-color="#ff74bf"/><stop offset="0.453" stop-color="#ff4488"/><stop offset="0.549" stop-color="#ff1b5a"/><stop offset="0.685" stop-color="#ff0039"/><stop offset="0.990" stop-color="#ff001a"/><stop offset="1.000" stop-color="#ff0019"/></linearGradient><linearGradient id="g62"><stop offset="0.000" stop-color="#00ffde"/><stop offset="0.136" stop-color="#00fbff"/><stop offset="0.223" stop-color="#03ddff"/><stop offset="0.342" stop-color="#deaeff"/><stop offset="0.359" stop-color="#ffa5fd"/><stop offset="0.399" stop-color="#ff6fbf"/><stop offset="0.459" stop-color="#ff4189"/><stop offset="0.555" stop-color="#ff195b"/><stop offset="0.687" stop-color="#ff003b"/><stop offset="0.990" stop-color="#ff001b"/><stop offset="1.000" stop-color="#ff001a"/></linearGradient><linearGradient id="g63"><stop offset="0.000" stop-color="#00ffe4"/><stop offset="0.116" stop-color="#00fbff"/><stop offset="0.222" stop-color="#02d7ff"/><stop offset="0.343" stop-color="#dda8ff"/><stop offset="0.362" stop-color="#ff9efc"/><stop offset="0.403" stop-color="#ff6abf"/><stop offset="0.464" stop-color="#ff3d89"/><stop offset="0.565" stop-color="#ff165b"/><stop offset="0.688" stop-color="#ff003d"/><stop offset="0.987" stop-color="#ff001c"/><stop offset="1.000" stop-color="#ff001c"/></linearGradient><linearGradient id="g64"><stop offset="0.000" stop-color="#00ffe8"/><stop offset="0.099" stop-color="#00faff"/><stop offset="0.224" stop-color="#04d1ff"/><stop offset="0.348" stop-color="#dea1ff"/><stop offset="0.368" stop-color="#ff96fb"/><stop offset="0.410" stop-color="#ff64bd"/><stop offset="0.474" stop-color="#ff3887"/><stop offset="0.578" stop-color="#ff1259"/><stop offset="0.689" stop-color="#ff003f"/><stop offset="0.983" stop-color="#ff001e"/><stop offset="1.000" stop-color="#ff001d"/></linearGradient><linearGradient id="g65"><stop offset="0.000" stop-color="#00ffee"/><stop offset="0.080" stop-color="#00faff"/><stop offset="0.223" stop-color="#03cbff"/><stop offset="0.350" stop-color="#dd9cff"/><stop offset="0.369" stop-color="#ff92fd"/><stop offset="0.412" stop-color="#ff61bf"/><stop offset="0.476" stop-color="#ff3689"/><stop offset="0.579" stop-color="#ff115b"/><stop offset="0.687" stop-color="#ff0041"/><stop offset="0.975" stop-color="#ff0020"/><stop offset="1.000" stop-color="#ff001e"/></linearGradient><linearGradient id="g66"><stop offset="0.000" stop-color="#00fff4"/><stop offset="0.062" stop-color="#00f9ff"/><stop offset="0.223" stop-color="#02c6ff"/><stop offset="0.354" stop-color="#df95ff"/><stop offset="0.373" stop-color="#ff8cfc"/><stop offset="0.416" stop-color="#ff5dbf"/><stop offset="0.482" stop-color="#ff3289"/><stop offset="0.590" stop-color="#ff0e5b"/><stop offset="0.688" stop-color="#ff0043"/><stop offset="0.971" stop-color="#ff0021"/><stop offset="1.000" stop-color="#ff001f"/></linearGradient><linearGradient id="g67"><stop offset="0.000" stop-color="#00fff9"/><stop offset="0.059" stop-color="#00f5ff"/><stop offset="0.223" stop-color="#01c1ff"/><stop offset="0.356" stop-color="#dd90ff"/><stop offset="0.378" stop-color="#ff85fb"/><stop offset="0.423" stop-color="#ff57bd"/><stop offset="0.491" stop-color="#ff2e87"/><stop offset="0.603" stop-color="#ff0b59"/><stop offset="0.691" stop-color="#ff0044"/><stop offset="0.973" stop-color="#ff0022"/><stop offset="1.000" stop-color="#ff0020"/></linearGradient><linearGradient id="g68"><stop offset="0.000" stop-color="#00ffff"/><stop offset="0.224" stop-color="#03bcff"/><stop offset="0.360" stop-color="#df8bff"/><stop offset="0.380" stop-color="#ff82fd"/><stop offset="0.425" stop-color="#ff54c0"/><stop offset="0.494" stop-color="#ff2c89"/><stop offset="0.604" stop-color="#ff0a5b"/><stop offset="0.691" stop-color="#ff0046"/><stop offset="0.969" stop-color="#ff0024"/><stop offset="1.000" stop-color="#ff0022"/></linearGradient><linearGradient id="g69"><stop offset="0.000" stop-color="#00faff"/><stop offset="0.224" stop-color="#03b7ff"/><stop offset="0.362" stop-color="#dd86ff"/><stop offset="0.384" stop-color="#ff7cfc"/><stop offset="0.432" stop-color="#ff4fbe"/><stop offset="0.503" stop-color="#ff2888"/><stop offset="0.618" stop-color="#ff075a"/><stop offset="0.705" stop-color="#ff0046"/><stop offset="0.992" stop-color="#ff0023"/><stop offset="1.000" stop-color="#ff0023"/></linearGradient><linearGradient id="g70"><stop offset="0.000" stop-color="#00f5ff"/><stop offset="0.224" stop-color="#02b3ff"/><stop offset="0.365" stop-color="#db81ff"/><stop offset="0.389" stop-color="#ff76fb"/><stop offset="0.437" stop-color="#ff4bbe"/><stop offset="0.510" stop-color="#ff2588"/><stop offset="0.627" stop-color="#ff055a"/><stop offset="0.760" stop-color="#ff003e"/><stop offset="1.000" stop-color="#ff0024"/></linearGradient><linearGradient id="g71"><stop offset="0.000" stop-color="#00efff"/><stop offset="0.226" stop-color="#04aeff"/><stop offset="0.371" stop-color="#e07bff"/><stop offset="0.391" stop-color="#ff73fd"/><stop offset="0.439" stop-color="#ff49c0"/><stop offset="0.513" stop-color="#ff2489"/><stop offset="0.631" stop-color="#ff045b"/><stop offset="0.840" stop-color="#ff0035"/><stop offset="1.000" stop-color="#ff0025"/></linearGradient><linearGradient id="g72"><stop offset="0.000" stop-color="#00ebff"/><stop offset="0.226" stop-color="#03aaff"/><stop offset="0.374" stop-color="#df77ff"/><stop offset="0.396" stop-color="#ff6dfc"/><stop offset="0.446" stop-color="#ff44be"/><stop offset="0.522" stop-color="#ff2088"/><stop offset="0.644" stop-color="#ff015a"/><stop offset="0.862" stop-color="#ff0034"/><stop offset="1.000" stop-color="#ff0027"/></linearGradient><linearGradient id="g73"><stop offset="0.000" stop-color="#00e5ff"/><stop offset="0.225" stop-color="#02a6ff"/><stop offset="0.376" stop-color="#dd73ff"/><stop offset="0.400" stop-color="#ff68fb"/><stop offset="0.451" stop-color="#ff41be"/><stop offset="0.527" stop-color="#ff1e89"/><stop offset="0.652" stop-color="#ff005a"/><stop offset="0.873" stop-color="#ff0034"/><stop offset="1.000" stop-color="#ff0028"/></linearGradient><linearGradient id="g74"><stop offset="0.000" stop-color="#00e0ff"/><stop offset="0.225" stop-color="#02a2ff"/><stop offset="0.379" stop-color="#dc6fff"/><stop offset="0.403" stop-color="#ff65fd"/><stop offset="0.453" stop-color="#ff3fc0"/><stop offset="0.530" stop-color="#ff1c8a"/><stop offset="0.656" stop-color="#ff005c"/><stop offset="0.877" stop-color="#ff0035"/><stop offset="1.000" stop-color="#ff0029"/></linearGradient><linearGradient id="g75"><stop offset="0.000" stop-color="#00dcff"/><stop offset="0.227" stop-color="#039dff"/><stop offset="0.383" stop-color="#dd6aff"/><stop offset="0.408" stop-color="#ff60fc"/><stop offset="0.460" stop-color="#ff3abf"/><stop offset="0.540" stop-color="#ff1989"/><stop offset="0.665" stop-color="#ff005c"/><stop offset="0.890" stop-color="#ff0035"/><stop offset="1.000" stop-color="#ff002b"/></linearGradient><linearGradient id="g76"><stop offset="0.000" stop-color="#00d7ff"/><stop offset="0.227" stop-color="#039aff"/><stop offset="0.388" stop-color="#df66ff"/><stop offset="0.412" stop-color="#ff5cfb"/><stop offset="0.467" stop-color="#ff36bd"/><stop offset="0.551" stop-color="#ff1587"/><stop offset="0.667" stop-color="#ff005e"/><stop offset="0.892" stop-color="#ff0037"/><stop offset="1.000" stop-color="#ff002c"/></linearGradient><linearGradient id="g77"><stop offset="0.000" stop-color="#00d3ff"/><stop offset="0.225" stop-color="#0296ff"/><stop offset="0.389" stop-color="#dd62ff"/><stop offset="0.414" stop-color="#ff59fd"/><stop offset="0.469" stop-color="#ff34bf"/><stop offset="0.553" stop-color="#ff1488"/><stop offset="0.664" stop-color="#ff0061"/><stop offset="0.883" stop-color="#ff0039"/><stop offset="1.000" stop-color="#ff002d"/></linearGradient><linearGradient id="g78"><stop offset="0.000" stop-color="#00cfff"/><stop offset="0.228" stop-color="#0492ff"/><stop offset="0.395" stop-color="#df5eff"/><stop offset="0.420" stop-color="#ff54fc"/><stop offset="0.475" stop-color="#ff31bf"/><stop offset="0.560" stop-color="#ff1289"/><stop offset="0.665" stop-color="#ff0063"/><stop offset="0.881" stop-color="#ff003b"/><stop offset="1.000" stop-color="#ff002f"/></linearGradient><linearGradient id="g79"><stop offset="0.000" stop-color="#00cbff"/><stop offset="0.228" stop-color="#038fff"/><stop offset="0.398" stop-color="#de5aff"/><stop offset="0.424" stop-color="#ff50fb"/><stop offset="0.482" stop-color="#ff2dbd"/><stop offset="0.569" stop-color="#ff0f88"/><stop offset="0.665" stop-color="#ff0066"/><stop offset="0.878" stop-color="#ff003d"/><stop offset="1.000" stop-color="#ff0030"/></linearGradient><linearGradient id="g80"><stop offset="0.000" stop-color="#00c6ff"/><stop offset="0.227" stop-color="#028cff"/><stop offset="0.399" stop-color="#dc57ff"/><stop offset="0.426" stop-color="#ff4dfd"/><stop offset="0.484" stop-color="#ff2cbf"/><stop offset="0.572" stop-color="#ff0e89"/><stop offset="0.663" stop-color="#ff0068"/><stop offset="0.873" stop-color="#ff003f"/><stop offset="1.000" stop-color="#ff0031"/></linearGradient><linearGradient id="g81"><stop offset="0.000" stop-color="#00c3ff"/><stop offset="0.228" stop-color="#0288ff"/><stop offset="0.405" stop-color="#de53ff"/><stop offset="0.432" stop-color="#ff49fc"/><stop offset="0.493" stop-color="#ff28be"/><stop offset="0.582" stop-color="#ff0b88"/><stop offset="0.666" stop-color="#ff006a"/><stop offset="0.875" stop-color="#ff0041"/><stop offset="1.000" stop-color="#ff0033"/></linearGradient><linearGradient id="g82"><stop offset="0.000" stop-color="#00bfff"/><stop offset="0.229" stop-color="#0385ff"/><stop offset="0.409" stop-color="#df4fff"/><stop offset="0.436" stop-color="#ff45fb"/><stop offset="0.497" stop-color="#ff25be"/><stop offset="0.589" stop-color="#ff0988"/><stop offset="0.669" stop-color="#ff006c"/><stop offset="0.876" stop-color="#ff0042"/><stop offset="1.000" stop-color="#ff0034"/></linearGradient><linearGradient id="g83"><stop offset="0.000" stop-color="#00bbff"/><stop offset="0.228" stop-color="#0382ff"/><stop offset="0.411" stop-color="#de4cff"/><stop offset="0.439" stop-color="#ff43fd"/><stop offset="0.500" stop-color="#ff24bf"/><stop offset="0.593" stop-color="#ff0889"/><stop offset="0.673" stop-color="#ff006d"/><stop offset="0.882" stop-color="#ff0043"/><stop offset="1.000" stop-color="#ff0036"/></linearGradient><linearGradient id="g84"><stop offset="0.000" stop-color="#00b7ff"/><stop offset="0.227" stop-color="#027fff"/><stop offset="0.413" stop-color="#dc49ff"/><stop offset="0.443" stop-color="#ff3ffc"/><stop offset="0.506" stop-color="#ff20be"/><stop offset="0.602" stop-color="#ff0688"/><stop offset="0.703" stop-color="#ff0067"/><stop offset="0.934" stop-color="#ff003e"/><stop offset="1.000" stop-color="#ff0037"/></linearGradient><linearGradient id="g85"><stop offset="0.000" stop-color="#00b4ff"/><stop offset="0.230" stop-color="#047cff"/><stop offset="0.419" stop-color="#de46ff"/><stop offset="0.449" stop-color="#ff3cfb"/><stop offset="0.513" stop-color="#ff1ebe"/><stop offset="0.611" stop-color="#ff0488"/><stop offset="0.768" stop-color="#ff005a"/><stop offset="1.000" stop-color="#ff0038"/></linearGradient><linearGradient id="g86"><stop offset="0.000" stop-color="#00b0ff"/><stop offset="0.229" stop-color="#0379ff"/><stop offset="0.424" stop-color="#df43ff"/><stop offset="0.452" stop-color="#ff3afd"/><stop offset="0.516" stop-color="#ff1cc0"/><stop offset="0.615" stop-color="#ff0389"/><stop offset="0.773" stop-color="#ff005b"/><stop offset="1.000" stop-color="#ff003a"/></linearGradient><linearGradient id="g87"><stop offset="0.000" stop-color="#00acff"/><stop offset="0.228" stop-color="#0276ff"/><stop offset="0.426" stop-color="#de40ff"/><stop offset="0.456" stop-color="#ff36fc"/><stop offset="0.523" stop-color="#ff19be"/><stop offset="0.624" stop-color="#ff0088"/><stop offset="0.787" stop-color="#ff005a"/><stop offset="1.000" stop-color="#ff003b"/></linearGradient><linearGradient id="g88"><stop offset="0.000" stop-color="#00a9ff"/><stop offset="0.231" stop-color="#0473ff"/><stop offset="0.432" stop-color="#df3dff"/><stop offset="0.462" stop-color="#ff33fb"/><stop offset="0.531" stop-color="#ff17bd"/><stop offset="0.635" stop-color="#ff0087"/><stop offset="0.803" stop-color="#ff0059"/><stop offset="1.000" stop-color="#ff003d"/></linearGradient><linearGradient id="g89"><stop offset="0.000" stop-color="#00a6ff"/><stop offset="0.230" stop-color="#0371ff"/><stop offset="0.434" stop-color="#de3aff"/><stop offset="0.464" stop-color="#ff31fd"/><stop offset="0.534" stop-color="#ff15be"/><stop offset="0.638" stop-color="#ff0089"/><stop offset="0.807" stop-color="#ff005a"/><stop offset="1.000" stop-color="#ff003e"/></linearGradient><linearGradient id="g90"><stop offset="0.000" stop-color="#00a2ff"/><stop offset="0.229" stop-color="#036eff"/><stop offset="0.439" stop-color="#df37ff"/><stop offset="0.469" stop-color="#ff2efc"/><stop offset="0.539" stop-color="#ff13bf"/><stop offset="0.640" stop-color="#ff008b"/><stop offset="0.808" stop-color="#ff005c"/><stop offset="1.000" stop-color="#ff0040"/></linearGradient><linearGradient id="g91"><stop offset="0.000" stop-color="#009fff"/><stop offset="0.229" stop-color="#026cff"/><stop offset="0.442" stop-color="#de35ff"/><stop offset="0.475" stop-color="#ff2bfb"/><stop offset="0.547" stop-color="#ff10bd"/><stop offset="0.640" stop-color="#ff008e"/><stop offset="0.804" stop-color="#ff005f"/><stop offset="1.000" stop-color="#ff0042"/></linearGradient><linearGradient id="g92"><stop offset="0.000" stop-color="#009cff"/><stop offset="0.231" stop-color="#0469ff"/><stop offset="0.447" stop-color="#df32ff"/><stop offset="0.478" stop-color="#ff29fd"/><stop offset="0.551" stop-color="#ff0fbf"/><stop offset="0.639" stop-color="#ff0091"/><stop offset="0.802" stop-color="#ff0062"/><stop offset="1.000" stop-color="#ff0043"/></linearGradient><linearGradient id="g93"><stop offset="0.000" stop-color="#0099ff"/><stop offset="0.231" stop-color="#0367ff"/><stop offset="0.450" stop-color="#de2fff"/><stop offset="0.483" stop-color="#ff26fc"/><stop offset="0.557" stop-color="#ff0dbf"/><stop offset="0.639" stop-color="#ff0094"/><stop offset="0.800" stop-color="#ff0064"/><stop offset="1.000" stop-color="#ff0045"/></linearGradient><linearGradient id="g94"><stop offset="0.000" stop-color="#0096ff"/><stop offset="0.229" stop-color="#0365ff"/><stop offset="0.452" stop-color="#dd2dff"/><stop offset="0.488" stop-color="#ff23fb"/><stop offset="0.563" stop-color="#ff0abe"/><stop offset="0.641" stop-color="#ff0096"/><stop offset="0.804" stop-color="#ff0065"/><stop offset="1.000" stop-color="#ff0046"/></linearGradient><linearGradient id="g95"><stop offset="0.000" stop-color="#0093ff"/><stop offset="0.231" stop-color="#0462ff"/><stop offset="0.457" stop-color="#de2aff"/><stop offset="0.491" stop-color="#ff21fd"/><stop offset="0.567" stop-color="#ff09bf"/><stop offset="0.641" stop-color="#ff0099"/><stop offset="0.800" stop-color="#ff0068"/><stop offset="1.000" stop-color="#ff0048"/></linearGradient><linearGradient id="g96"><stop offset="0.000" stop-color="#0091ff"/><stop offset="0.232" stop-color="#0360ff"/><stop offset="0.464" stop-color="#df28ff"/><stop offset="0.498" stop-color="#ff1efc"/><stop offset="0.577" stop-color="#ff07be"/><stop offset="0.655" stop-color="#ff0097"/><stop offset="0.822" stop-color="#ff0066"/><stop offset="1.000" stop-color="#ff004a"/></linearGradient><linearGradient id="g97"><stop offset="0.000" stop-color="#008eff"/><stop offset="0.231" stop-color="#035eff"/><stop offset="0.466" stop-color="#de26ff"/><stop offset="0.502" stop-color="#ff1cfb"/><stop offset="0.581" stop-color="#ff05be"/><stop offset="0.701" stop-color="#ff0088"/><stop offset="0.896" stop-color="#ff005a"/><stop offset="1.000" stop-color="#ff004b"/></linearGradient><linearGradient id="g98"><stop offset="0.000" stop-color="#008bff"/><stop offset="0.230" stop-color="#025cff"/><stop offset="0.469" stop-color="#dd24ff"/><stop offset="0.508" stop-color="#ff19fa"/><stop offset="0.590" stop-color="#ff03bd"/><stop offset="0.713" stop-color="#ff0087"/><stop offset="0.913" stop-color="#ff0059"/><stop offset="1.000" stop-color="#ff004d"/></linearGradient><linearGradient id="g99"><stop offset="0.000" stop-color="#0088ff"/><stop offset="0.231" stop-color="#0459ff"/><stop offset="0.474" stop-color="#de21ff"/><stop offset="0.510" stop-color="#ff17fc"/><stop offset="0.593" stop-color="#ff02be"/><stop offset="0.716" stop-color="#ff0089"/><stop offset="0.918" stop-color="#ff005a"/><stop offset="1.000" stop-color="#ff004e"/></linearGradient><linearGradient id="g100"><stop offset="0.000" stop-color="#0086ff"/><stop offset="0.232" stop-color="#0357ff"/><stop offset="0.480" stop-color="#df1eff"/><stop offset="0.517" stop-color="#ff15fb"/><stop offset="0.600" stop-color="#ff00be"/><stop offset="0.726" stop-color="#ff0088"/><stop offset="0.931" stop-color="#ff005a"/><stop offset="1.000" stop-color="#ff0050"/></linearGradient><linearGradient id="g101"><stop offset="0.000" stop-color="#0083ff"/><stop offset="0.231" stop-color="#0356ff"/><stop offset="0.483" stop-color="#de1dff"/><stop offset="0.522" stop-color="#ff13fa"/><stop offset="0.607" stop-color="#ff00bd"/><stop offset="0.737" stop-color="#ff0087"/><stop offset="0.947" stop-color="#ff0059"/><stop offset="1.000" stop-color="#ff0052"/></linearGradient><linearGradient id="g102"><stop offset="0.000" stop-color="#0081ff"/><stop offset="0.233" stop-color="#0453ff"/><stop offset="0.488" stop-color="#e01aff"/><stop offset="0.526" stop-color="#ff11fc"/><stop offset="0.612" stop-color="#ff00be"/><stop offset="0.742" stop-color="#ff0089"/><stop offset="0.953" stop-color="#ff005a"/><stop offset="1.000" stop-color="#ff0053"/></linearGradient><linearGradient id="g103"><stop offset="0.000" stop-color="#007eff"/><stop offset="0.232" stop-color="#0352ff"/><stop offset="0.492" stop-color="#de18ff"/><stop offset="0.532" stop-color="#ff0ffb"/><stop offset="0.614" stop-color="#ff00c1"/><stop offset="0.745" stop-color="#ff008a"/><stop offset="0.956" stop-color="#ff005c"/><stop offset="1.000" stop-color="#ff0055"/></linearGradient><linearGradient id="g104"><stop offset="0.000" stop-color="#007cff"/><stop offset="0.231" stop-color="#0350ff"/><stop offset="0.494" stop-color="#dd17ff"/><stop offset="0.536" stop-color="#ff0dfa"/><stop offset="0.614" stop-color="#ff00c4"/><stop offset="0.744" stop-color="#ff008d"/><stop offset="0.953" stop-color="#ff005e"/><stop offset="1.000" stop-color="#ff0057"/></linearGradient><linearGradient id="g105"><stop offset="0.000" stop-color="#007aff"/><stop offset="0.232" stop-color="#024eff"/><stop offset="0.501" stop-color="#df14ff"/><stop offset="0.541" stop-color="#ff0bfc"/><stop offset="0.615" stop-color="#ff00c8"/><stop offset="0.742" stop-color="#ff0091"/><stop offset="0.946" stop-color="#ff0061"/><stop offset="1.000" stop-color="#ff0059"/></linearGradient><linearGradient id="g106"><stop offset="0.000" stop-color="#0077ff"/><stop offset="0.233" stop-color="#044cff"/><stop offset="0.506" stop-color="#e012ff"/><stop offset="0.546" stop-color="#ff09fb"/><stop offset="0.615" stop-color="#ff00cb"/><stop offset="0.743" stop-color="#ff0093"/><stop offset="0.948" stop-color="#ff0063"/><stop offset="1.000" stop-color="#ff005b"/></linearGradient><linearGradient id="g107"><stop offset="0.000" stop-color="#0075ff"/><stop offset="0.232" stop-color="#034aff"/><stop offset="0.510" stop-color="#df11ff"/><stop offset="0.553" stop-color="#ff07fa"/><stop offset="0.627" stop-color="#ff00c8"/><stop offset="0.758" stop-color="#ff0091"/><stop offset="0.969" stop-color="#ff0061"/><stop offset="1.000" stop-color="#ff005c"/></linearGradient><linearGradient id="g108"><stop offset="0.000" stop-color="#0072ff"/><stop offset="0.231" stop-color="#0349ff"/><stop offset="0.513" stop-color="#de0fff"/><stop offset="0.557" stop-color="#ff05fc"/><stop offset="0.651" stop-color="#ff00bf"/><stop offset="0.795" stop-color="#ff0089"/><stop offset="1.000" stop-color="#ff005f"/></linearGradient><linearGradient id="g109"><stop offset="0.000" stop-color="#0070ff"/><stop offset="0.232" stop-color="#0447ff"/><stop offset="0.518" stop-color="#df0dff"/><stop offset="0.562" stop-color="#ff03fb"/><stop offset="0.659" stop-color="#ff00be"/><stop offset="0.806" stop-color="#ff0088"/><stop offset="1.000" stop-color="#ff0060"/></linearGradient><linearGradient id="g110"><stop offset="0.000" stop-color="#006eff"/><stop offset="0.232" stop-color="#0345ff"/><stop offset="0.524" stop-color="#e00bff"/><stop offset="0.568" stop-color="#ff01fb"/><stop offset="0.668" stop-color="#ff00bd"/><stop offset="0.820" stop-color="#ff0087"/><stop offset="1.000" stop-color="#ff0062"/></linearGradient><linearGradient id="g111"><stop offset="0.000" stop-color="#006cff"/><stop offset="0.232" stop-color="#0344ff"/><stop offset="0.528" stop-color="#df09ff"/><stop offset="0.572" stop-color="#ff00fc"/><stop offset="0.672" stop-color="#ff00be"/><stop offset="0.824" stop-color="#ff0088"/><stop offset="1.000" stop-color="#ff0064"/></linearGradient><linearGradient id="g112"><stop offset="0.000" stop-color="#006aff"/><stop offset="0.234" stop-color="#0442ff"/><stop offset="0.534" stop-color="#e008ff"/><stop offset="0.579" stop-color="#ff00fb"/><stop offset="0.680" stop-color="#ff00be"/><stop offset="0.835" stop-color="#ff0088"/><stop offset="1.000" stop-color="#ff0066"/></linearGradient><linearGradient id="g113"><stop offset="0.000" stop-color="#0068ff"/><stop offset="0.233" stop-color="#0440ff"/><stop offset="0.538" stop-color="#df06ff"/><stop offset="0.586" stop-color="#ff00fb"/><stop offset="0.690" stop-color="#ff00bd"/><stop offset="0.849" stop-color="#ff0087"/><stop offset="1.000" stop-color="#ff0068"/></linearGradient><linearGradient id="g114"><stop offset="0.000" stop-color="#0066ff"/><stop offset="0.232" stop-color="#033fff"/><stop offset="0.541" stop-color="#de05ff"/><stop offset="0.589" stop-color="#ff00fc"/><stop offset="0.693" stop-color="#ff00be"/><stop offset="0.853" stop-color="#ff0088"/><stop offset="1.000" stop-color="#ff006a"/></linearGradient><linearGradient id="g115"><stop offset="0.000" stop-color="#0064ff"/><stop offset="0.231" stop-color="#033eff"/><stop offset="0.548" stop-color="#df03ff"/><stop offset="0.595" stop-color="#ff00fb"/><stop offset="0.704" stop-color="#ff00bd"/><stop offset="0.867" stop-color="#ff0087"/><stop offset="1.000" stop-color="#ff006c"/></linearGradient><linearGradient id="g116"><stop offset="0.000" stop-color="#0062ff"/><stop offset="0.232" stop-color="#043cff"/><stop offset="0.553" stop-color="#e001ff"/><stop offset="0.601" stop-color="#ff00fb"/><stop offset="0.710" stop-color="#ff00bd"/><stop offset="0.874" stop-color="#ff0088"/><stop offset="1.000" stop-color="#ff006e"/></linearGradient><linearGradient id="g117"><stop offset="0.000" stop-color="#0060ff"/><stop offset="0.232" stop-color="#033bff"/><stop offset="0.557" stop-color="#df00ff"/><stop offset="0.606" stop-color="#ff00fc"/><stop offset="0.715" stop-color="#ff00be"/><stop offset="0.880" stop-color="#ff0089"/><stop offset="1.000" stop-color="#ff0070"/></linearGradient><linearGradient id="g118"><stop offset="0.000" stop-color="#005eff"/><stop offset="0.230" stop-color="#0339ff"/><stop offset="0.560" stop-color="#de00ff"/><stop offset="0.611" stop-color="#ff00fb"/><stop offset="0.724" stop-color="#ff00bd"/><stop offset="0.895" stop-color="#ff0087"/><stop offset="1.000" stop-color="#ff0072"/></linearGradient><linearGradient id="g119"><stop offset="0.000" stop-color="#005cff"/><stop offset="0.234" stop-color="#0438ff"/><stop offset="0.568" stop-color="#df00ff"/><stop offset="0.620" stop-color="#ff00fb"/><stop offset="0.733" stop-color="#ff00be"/><stop offset="0.905" stop-color="#ff0088"/><stop offset="1.000" stop-color="#ff0074"/></linearGradient><linearGradient id="g120"><stop offset="0.000" stop-color="#005aff"/><stop offset="0.233" stop-color="#0436ff"/><stop offset="0.573" stop-color="#de00ff"/><stop offset="0.624" stop-color="#ff00fc"/><stop offset="0.741" stop-color="#ff00be"/><stop offset="0.917" stop-color="#ff0088"/><stop offset="1.000" stop-color="#ff0077"/></linearGradient><linearGradient id="g121"><stop offset="0.000" stop-color="#0058ff"/><stop offset="0.232" stop-color="#0335ff"/><stop offset="0.568" stop-color="#d800ff"/><stop offset="0.630" stop-color="#ff00fb"/><stop offset="0.747" stop-color="#ff00be"/><stop offset="0.924" stop-color="#ff0088"/><stop offset="1.000" stop-color="#ff0079"/></linearGradient><linearGradient id="g122"><stop offset="0.000" stop-color="#0057ff"/><stop offset="0.231" stop-color="#0334ff"/><stop offset="0.567" stop-color="#d400ff"/><stop offset="0.638" stop-color="#ff00fb"/><stop offset="0.759" stop-color="#ff00bd"/><stop offset="0.940" stop-color="#ff0087"/><stop offset="1.000" stop-color="#ff007b"/></linearGradient><linearGradient id="g123"><stop offset="0.000" stop-color="#0055ff"/><stop offset="0.232" stop-color="#0432ff"/><stop offset="0.562" stop-color="#ce00ff"/><stop offset="0.641" stop-color="#ff00fc"/><stop offset="0.763" stop-color="#ff00be"/><stop offset="0.945" stop-color="#ff0088"/><stop offset="1.000" stop-color="#ff007d"/></linearGradient><linearGradient id="g124"><stop offset="0.000" stop-color="#0053ff"/><stop offset="0.231" stop-color="#0331ff"/><stop offset="0.561" stop-color="#c900ff"/><stop offset="0.649" stop-color="#ff00fb"/><stop offset="0.771" stop-color="#ff00be"/><stop offset="0.957" stop-color="#ff0088"/><stop offset="1.000" stop-color="#ff007f"/></linearGradient><linearGradient id="g125"><stop offset="0.000" stop-color="#0051ff"/><stop offset="0.231" stop-color="#0330ff"/><stop offset="0.558" stop-color="#c400ff"/><stop offset="0.657" stop-color="#ff00fb"/><stop offset="0.783" stop-color="#ff00bd"/><stop offset="0.973" stop-color="#ff0087"/><stop offset="1.000" stop-color="#ff0082"/></linearGradient><linearGradient id="g126"><stop offset="0.000" stop-color="#0050ff"/><stop offset="0.232" stop-color="#042fff"/><stop offset="0.555" stop-color="#c000ff"/><stop offset="0.660" stop-color="#ff00fc"/><stop offset="0.787" stop-color="#ff00be"/><stop offset="0.978" stop-color="#ff0088"/><stop offset="1.000" stop-color="#ff0084"/></linearGradient><linearGradient id="g127"><stop offset="0.000" stop-color="#004eff"/><stop offset="0.231" stop-color="#042eff"/><stop offset="0.552" stop-color="#ba00ff"/><stop offset="0.668" stop-color="#ff00fb"/><stop offset="0.799" stop-color="#ff00bd"/><stop offset="0.995" stop-color="#ff0087"/><stop offset="1.000" stop-color="#ff0086"/></linearGradient><linearGradient id="g128"><stop offset="0.000" stop-color="#004cff"/><stop offset="0.230" stop-color="#032cff"/><stop offset="0.549" stop-color="#b700ff"/><stop offset="0.672" stop-color="#ff00fc"/><stop offset="0.803" stop-color="#ff00be"/><stop offset="1.000" stop-color="#ff0088"/></linearGradient><linearGradient id="g129"><stop offset="0.000" stop-color="#004bff"/><stop offset="0.229" stop-color="#032bff"/><stop offset="0.545" stop-color="#b100ff"/><stop offset="0.680" stop-color="#ff00fc"/><stop offset="0.813" stop-color="#ff00be"/><stop offset="1.000" stop-color="#ff008b"/></linearGradient><linearGradient id="g130"><stop offset="0.000" stop-color="#0049ff"/><stop offset="0.231" stop-color="#042aff"/><stop offset="0.544" stop-color="#ae00ff"/><stop offset="0.689" stop-color="#ff00fb"/><stop offset="0.825" stop-color="#ff00bd"/><stop offset="1.000" stop-color="#ff008e"/></linearGradient><linearGradient id="g131"><stop offset="0.000" stop-color="#0048ff"/><stop offset="0.229" stop-color="#0329ff"/><stop offset="0.539" stop-color="#a900ff"/><stop offset="0.693" stop-color="#ff00fc"/><stop offset="0.830" stop-color="#ff00be"/><stop offset="1.000" stop-color="#ff0090"/></linearGradient><linearGradient id="g132"><stop offset="0.000" stop-color="#0046ff"/><stop offset="0.228" stop-color="#0328ff"/><stop offset="0.538" stop-color="#a500ff"/><stop offset="0.701" stop-color="#ff00fc"/><stop offset="0.839" stop-color="#ff00bf"/><stop offset="1.000" stop-color="#ff0093"/></linearGradient><linearGradient id="g133"><stop offset="0.000" stop-color="#0044ff"/><stop offset="0.229" stop-color="#0427ff"/><stop offset="0.535" stop-color="#a200ff"/><stop offset="0.708" stop-color="#ff00fb"/><stop offset="0.850" stop-color="#ff00be"/><stop offset="1.000" stop-color="#ff0095"/></linearGradient><linearGradient id="g134"><stop offset="0.000" stop-color="#0043ff"/><stop offset="0.229" stop-color="#0426ff"/><stop offset="0.531" stop-color="#9d00ff"/><stop offset="0.714" stop-color="#ff00fc"/><stop offset="0.857" stop-color="#ff00bf"/><stop offset="1.000" stop-color="#ff0098"/></linearGradient><linearGradient id="g135"><stop offset="0.000" stop-color="#0042ff"/><stop offset="0.229" stop-color="#0325ff"/><stop offset="0.530" stop-color="#9a00ff"/><stop offset="0.722" stop-color="#ff00fc"/><stop offset="0.868" stop-color="#ff00be"/><stop offset="1.000" stop-color="#ff009a"/></linearGradient><linearGradient id="g136"><stop offset="0.000" stop-color="#0040ff"/><stop offset="0.231" stop-color="#0423ff"/><stop offset="0.526" stop-color="#9500ff"/><stop offset="0.731" stop-color="#ff00fb"/><stop offset="0.879" stop-color="#ff00be"/><stop offset="1.000" stop-color="#ff009d"/></linearGradient><linearGradient id="g137"><stop offset="0.000" stop-color="#003fff"/><stop offset="0.230" stop-color="#0423ff"/><stop offset="0.525" stop-color="#9200ff"/><stop offset="0.738" stop-color="#ff00fc"/><stop offset="0.886" stop-color="#ff00bf"/><stop offset="1.000" stop-color="#ff00a0"/></linearGradient><linearGradient id="g138"><stop offset="0.000" stop-color="#003dff"/><stop offset="0.229" stop-color="#0322ff"/><stop offset="0.519" stop-color="#8d00ff"/><stop offset="0.745" stop-color="#ff00fc"/><stop offset="0.897" stop-color="#ff00be"/><stop offset="1.000" stop-color="#ff00a2"/></linearGradient><linearGradient id="g139"><stop offset="0.000" stop-color="#003cff"/><stop offset="0.228" stop-color="#0321ff"/><stop offset="0.518" stop-color="#8a00ff"/><stop offset="0.754" stop-color="#ff00fb"/><stop offset="0.911" stop-color="#ff00bd"/><stop offset="1.000" stop-color="#ff00a5"/></linearGradient><linearGradient id="g140"><stop offset="0.000" stop-color="#003bff"/><stop offset="0.229" stop-color="#0420ff"/><stop offset="0.512" stop-color="#8600ff"/><stop offset="0.759" stop-color="#ff00fc"/><stop offset="0.917" stop-color="#ff00be"/><stop offset="1.000" stop-color="#ff00a7"/></linearGradient><linearGradient id="g141"><stop offset="0.000" stop-color="#0039ff"/><stop offset="0.228" stop-color="#041fff"/><stop offset="0.511" stop-color="#8300ff"/><stop offset="0.769" stop-color="#ff00fc"/><stop offset="0.928" stop-color="#ff00be"/><stop offset="1.000" stop-color="#ff00ab"/></linearGradient><linearGradient id="g142"><stop offset="0.000" stop-color="#0038ff"/><stop offset="0.227" stop-color="#031eff"/><stop offset="0.506" stop-color="#7f00ff"/><stop offset="0.779" stop-color="#ff00fb"/><stop offset="0.942" stop-color="#ff00bd"/><stop offset="1.000" stop-color="#ff00ae"/></linearGradient><linearGradient id="g143"><stop offset="0.000" stop-color="#0037ff"/><stop offset="0.229" stop-color="#041dff"/><stop offset="0.503" stop-color="#7c00ff"/><stop offset="0.784" stop-color="#ff00fc"/><stop offset="0.948" stop-color="#ff00be"/><stop offset="1.000" stop-color="#ff00b0"/></linearGradient><linearGradient id="g144"><stop offset="0.000" stop-color="#0035ff"/><stop offset="0.228" stop-color="#041cff"/><stop offset="0.498" stop-color="#7800ff"/><stop offset="0.794" stop-color="#ff00fc"/><stop offset="0.960" stop-color="#ff00be"/><stop offset="1.000" stop-color="#ff00b4"/></linearGradient><linearGradient id="g145"><stop offset="0.000" stop-color="#0034ff"/><stop offset="0.226" stop-color="#031bff"/><stop offset="0.495" stop-color="#7600ff"/><stop offset="0.802" stop-color="#ff00fb"/><stop offset="0.972" stop-color="#ff00be"/><stop offset="1.000" stop-color="#ff00b6"/></linearGradient><linearGradient id="g146"><stop offset="0.000" stop-color="#0033ff"/><stop offset="0.225" stop-color="#031aff"/><stop offset="0.494" stop-color="#7300ff"/><stop offset="0.809" stop-color="#ff00fc"/><stop offset="0.981" stop-color="#ff00bf"/><stop offset="1.000" stop-color="#ff00b9"/></linearGradient><linearGradient id="g147"><stop offset="0.000" stop-color="#0031ff"/><stop offset="0.227" stop-color="#0419ff"/><stop offset="0.489" stop-color="#6f00ff"/><stop offset="0.820" stop-color="#ff00fc"/><stop offset="0.997" stop-color="#ff00be"/><stop offset="1.000" stop-color="#ff00bd"/></linearGradient><linearGradient id="g148"><stop offset="0.000" stop-color="#0030ff"/><stop offset="0.225" stop-color="#0418ff"/><stop offset="0.486" stop-color="#6c00ff"/><stop offset="0.829" stop-color="#ff00fb"/><stop offset="1.000" stop-color="#ff00c0"/></linearGradient><linearGradient id="g149"><stop offset="0.000" stop-color="#002fff"/><stop offset="0.224" stop-color="#0318ff"/><stop offset="0.481" stop-color="#6900ff"/><stop offset="0.840" stop-color="#ff00fb"/><stop offset="1.000" stop-color="#ff00c3"/></linearGradient><linearGradient id="g150"><stop offset="0.000" stop-color="#002eff"/><stop offset="0.226" stop-color="#0417ff"/><stop offset="0.477" stop-color="#6600ff"/><stop offset="0.845" stop-color="#ff00fc"/><stop offset="1.000" stop-color="#ff00c6"/></linearGradient><linearGradient id="g151"><stop offset="0.000" stop-color="#002dff"/><stop offset="0.225" stop-color="#0416ff"/><stop offset="0.476" stop-color="#6400ff"/><stop offset="0.857" stop-color="#ff00fb"/><stop offset="1.000" stop-color="#ff00c9"/></linearGradient><linearGradient id="g152"><stop offset="0.000" stop-color="#002bff"/><stop offset="0.223" stop-color="#0315ff"/><stop offset="0.469" stop-color="#6000ff"/><stop offset="0.866" stop-color="#ff00fb"/><stop offset="1.000" stop-color="#ff00cc"/></linearGradient><linearGradient id="g153"><stop offset="0.000" stop-color="#002aff"/><stop offset="0.225" stop-color="#0414ff"/><stop offset="0.467" stop-color="#5e00ff"/><stop offset="0.874" stop-color="#ff00fc"/><stop offset="1.000" stop-color="#ff00d0"/></linearGradient><linearGradient id="g154"><stop offset="0.000" stop-color="#0029ff"/><stop offset="0.224" stop-color="#0413ff"/><stop offset="0.462" stop-color="#5a00ff"/><stop offset="0.886" stop-color="#ff00fb"/><stop offset="1.000" stop-color="#ff00d4"/></linearGradient><linearGradient id="g155"><stop offset="0.000" stop-color="#0028ff"/><stop offset="0.222" stop-color="#0413ff"/><stop offset="0.458" stop-color="#5800ff"/><stop offset="0.896" stop-color="#ff00fb"/><stop offset="1.000" stop-color="#ff00d7"/></linearGradient><linearGradient id="g156"><stop offset="0.000" stop-color="#0027ff"/><stop offset="0.221" stop-color="#0312ff"/><stop offset="0.456" stop-color="#5600ff"/><stop offset="0.905" stop-color="#ff00fc"/><stop offset="1.000" stop-color="#ff00db"/></linearGradient><linearGradient id="g157"><stop offset="0.000" stop-color="#0026ff"/><stop offset="0.223" stop-color="#0411ff"/><stop offset="0.449" stop-color="#5300ff"/><stop offset="0.914" stop-color="#ff00fb"/><stop offset="1.000" stop-color="#ff00de"/></linearGradient><linearGradient id="g158"><stop offset="0.000" stop-color="#0024ff"/><stop offset="0.219" stop-color="#0410ff"/><stop offset="0.444" stop-color="#5100ff"/><stop offset="0.927" stop-color="#ff00fb"/><stop offset="1.000" stop-color="#ff00e2"/></linearGradient><linearGradient id="g159"><stop offset="0.000" stop-color="#0023ff"/><stop offset="0.218" stop-color="#0310ff"/><stop offset="0.442" stop-color="#4e00ff"/><stop offset="0.937" stop-color="#ff00fc"/><stop offset="1.000" stop-color="#ff00e6"/></linearGradient><linearGradient id="g160"><stop offset="0.000" stop-color="#0022ff"/><stop offset="0.219" stop-color="#040fff"/><stop offset="0.438" stop-color="#4c00ff"/><stop offset="0.947" stop-color="#ff00fb"/><stop offset="1.000" stop-color="#ff00e9"/></linearGradient><linearGradient id="g161"><stop offset="0.000" stop-color="#0021ff"/><stop offset="0.218" stop-color="#040eff"/><stop offset="0.436" stop-color="#4a00ff"/><stop offset="0.961" stop-color="#ff00fb"/><stop offset="1.000" stop-color="#ff00ed"/></linearGradient><linearGradient id="g162"><stop offset="0.000" stop-color="#0020ff"/><stop offset="0.216" stop-color="#040eff"/><stop offset="0.428" stop-color="#4700ff"/><stop offset="0.968" stop-color="#ff00fc"/><stop offset="1.000" stop-color="#ff00f1"/></linearGradient><linearGradient id="g163"><stop offset="0.000" stop-color="#001fff"/><stop offset="0.215" stop-color="#030dff"/><stop offset="0.425" stop-color="#4500ff"/><stop offset="0.982" stop-color="#ff00fb"/><stop offset="1.000" stop-color="#ff00f5"/></linearGradient><linearGradient id="g164"><stop offset="0.000" stop-color="#001eff"/><stop offset="0.217" stop-color="#040cff"/><stop offset="0.423" stop-color="#4300ff"/><stop offset="0.996" stop-color="#ff00fb"/><stop offset="1.000" stop-color="#ff00fa"/></linearGradient><linearGradient id="g165"><stop offset="0.000" stop-color="#001dff"/><stop offset="0.215" stop-color="#040bff"/><stop offset="0.419" stop-color="#4100ff"/><stop offset="1.000" stop-color="#ff00fd"/></linearGradient><linearGradient id="g166"><stop offset="0.000" stop-color="#001cff"/><stop offset="0.213" stop-color="#030bff"/><stop offset="0.419" stop-color="#4100ff"/><stop offset="1.000" stop-color="#fc00ff"/></linearGradient><linearGradient id="g167"><stop offset="0.000" stop-color="#001bff"/><stop offset="0.215" stop-color="#040aff"/><stop offset="0.415" stop-color="#3f00ff"/><stop offset="1.000" stop-color="#f900ff"/></linearGradient><linearGradient id="g168"><stop offset="0.000" stop-color="#001aff"/><stop offset="0.214" stop-color="#0409ff"/><stop offset="0.416" stop-color="#3e00ff"/><stop offset="1.000" stop-color="#f400ff"/></linearGradient><linearGradient id="g169"><stop offset="0.000" stop-color="#0019ff"/><stop offset="0.212" stop-color="#0409ff"/><stop offset="0.412" stop-color="#3c00ff"/><stop offset="1.000" stop-color="#f100ff"/></linearGradient><linearGradient id="g170"><stop offset="0.000" stop-color="#0018ff"/><stop offset="0.214" stop-color="#0408ff"/><stop offset="0.416" stop-color="#3d00ff"/><stop offset="1.000" stop-color="#ed00ff"/></linearGradient><linearGradient id="g171"><stop offset="0.000" stop-color="#0017ff"/><stop offset="0.209" stop-color="#0407ff"/><stop offset="0.419" stop-color="#3d00ff"/><stop offset="1.000" stop-color="#e800ff"/></linearGradient><linearGradient id="g172"><stop offset="0.000" stop-color="#0016ff"/><stop offset="0.207" stop-color="#0407ff"/><stop offset="0.422" stop-color="#3e00ff"/><stop offset="1.000" stop-color="#e500ff"/></linearGradient><linearGradient id="g173"><stop offset="0.000" stop-color="#0015ff"/><stop offset="0.210" stop-color="#0406ff"/><stop offset="0.452" stop-color="#4500ff"/><stop offset="1.000" stop-color="#e100ff"/></linearGradient><linearGradient id="g174"><stop offset="0.000" stop-color="#0015ff"/><stop offset="0.207" stop-color="#0406ff"/><stop offset="0.476" stop-color="#4a00ff"/><stop offset="1.000" stop-color="#de00ff"/></linearGradient><linearGradient id="g175"><stop offset="0.000" stop-color="#0014ff"/><stop offset="0.206" stop-color="#0405ff"/><stop offset="0.539" stop-color="#5a00ff"/><stop offset="1.000" stop-color="#da00ff"/></linearGradient><linearGradient id="g176"><stop offset="0.000" stop-color="#0013ff"/><stop offset="0.204" stop-color="#0405ff"/><stop offset="0.721" stop-color="#8900ff"/><stop offset="1.000" stop-color="#d600ff"/></linearGradient><linearGradient id="g177"><stop offset="0.000" stop-color="#0012ff"/><stop offset="0.206" stop-color="#0404ff"/><stop offset="1.000" stop-color="#d300ff"/></linearGradient><linearGradient id="g178"><stop offset="0.000" stop-color="#0011ff"/><stop offset="0.201" stop-color="#0403ff"/><stop offset="1.000" stop-color="#cf00ff"/></linearGradient><linearGradient id="g179"><stop offset="0.000" stop-color="#0010ff"/><stop offset="0.198" stop-color="#0403ff"/><stop offset="1.000" stop-color="#cc00ff"/></linearGradient><linearGradient id="g180"><stop offset="0.000" stop-color="#000fff"/><stop offset="0.201" stop-color="#0402ff"/><stop offset="1.000" stop-color="#c800ff"/></linearGradient><linearGradient id="g181"><stop offset="0.000" stop-color="#000eff"/><stop offset="0.199" stop-color="#0402ff"/><stop offset="1.000" stop-color="#c400ff"/></linearGradient><linearGradient id="g182"><stop offset="0.000" stop-color="#000dff"/><stop offset="0.196" stop-color="#0401ff"/><stop offset="1.000" stop-color="#c200ff"/></linearGradient><linearGradient id="g183"><stop offset="0.000" stop-color="#000cff"/><stop offset="0.195" stop-color="#0400ff"/><stop offset="1.000" stop-color="#be00ff"/></linearGradient><linearGradient id="g184"><stop offset="0.000" stop-color="#000cff"/><stop offset="0.193" stop-color="#0400ff"/><stop offset="1.000" stop-color="#bb00ff"/></linearGradient><linearGradient id="g185"><stop offset="0.000" stop-color="#000bff"/><stop offset="0.191" stop-color="#0400ff"/><stop offset="1.000" stop-color="#b800ff"/></linearGradient><linearGradient id="g186"><stop offset="0.000" stop-color="#000aff"/><stop offset="0.188" stop-color="#0400ff"/><stop offset="1.000" stop-color="#b500ff"/></linearGradient><linearGradient id="g187"><stop offset="0.000" stop-color="#0009ff"/><stop offset="0.187" stop-color="#0400ff"/><stop offset="1.000" stop-color="#b200ff"/></linearGradient><linearGradient id="g188"><stop offset="0.000" stop-color="#0008ff"/><stop offset="0.184" stop-color="#0400ff"/><stop offset="1.000" stop-color="#ae00ff"/></linearGradient><linearGradient id="g189"><stop offset="0.000" stop-color="#0007ff"/><stop offset="0.181" stop-color="#0400ff"/><stop offset="1.000" stop-color="#ac00ff"/></linearGradient><linearGradient id="g190"><stop offset="0.000" stop-color="#0007ff"/><stop offset="0.184" stop-color="#0400ff"/><stop offset="1.000" stop-color="#a800ff"/></linearGradient><linearGradient id="g191"><stop offset="0.000" stop-color="#0006ff"/><stop offset="0.177" stop-color="#0400ff"/><stop offset="1.000" stop-color="#a600ff"/></linearGradient><linearGradient id="g192"><stop offset="0.000" stop-color="#0005ff"/><stop offset="0.174" stop-color="#0400ff"/><stop offset="1.000" stop-color="#a300ff"/></linearGradient><linearGradient id="g193"><stop offset="0.000" stop-color="#0004ff"/><stop offset="0.177" stop-color="#0500ff"/><stop offset="1.000" stop-color="#9f00ff"/></linearGradient><linearGradient id="g194"><stop offset="0.000" stop-color="#0004ff"/><stop offset="0.174" stop-color="#0400ff"/><stop offset="1.000" stop-color="#9d00ff"/></linearGradient><linearGradient id="g195"><stop offset="0.000" stop-color="#0003ff"/><stop offset="0.167" stop-color="#0400ff"/><stop offset="1.000" stop-color="#9a00ff"/></linearGradient><linearGradient id="g196"><stop offset="0.000" stop-color="#0002ff"/><stop offset="0.168" stop-color="#0500ff"/><stop offset="1.000" stop-color="#9800ff"/></linearGradient><linearGradient id="g197"><stop offset="0.000" stop-color="#0001ff"/><stop offset="0.166" stop-color="#0400ff"/><stop offset="1.000" stop-color="#9500ff"/></linearGradient><linearGradient id="g198"><stop offset="0.000" stop-color="#0000ff"/><stop offset="0.158" stop-color="#0400ff"/><stop offset="1.000" stop-color="#9200ff"/></linearGradient><linearGradient id="g199"><stop offset="0.000" stop-color="#0000ff"/><stop offset="0.160" stop-color="#0500ff"/><stop offset="1.000" stop-color="#9000ff"/></linearGradient><linearGradient id="g200"><stop offset="0.000" stop-color="#0000ff"/><stop offset="0.157" stop-color="#0500ff"/><stop offset="1.000" stop-color="#8d00ff"/></linearGradient><linearGradient id="g201"><stop offset="0.000" stop-color="#0000ff"/><stop offset="0.154" stop-color="#0500ff"/><stop offset="1.000" stop-color="#8b00ff"/></linearGradient><linearGradient id="g202"><stop offset="0.000" stop-color="#0000ff"/><stop offset="0.151" stop-color="#0500ff"/><stop offset="1.000" stop-color="#8800ff"/></linearGradient><linearGradient id="g203"><stop offset="0.000" stop-color="#0000ff"/><stop offset="0.147" stop-color="#0600ff"/><stop offset="1.000" stop-color="#8600ff"/></linearGradient><linearGradient id="g204"><stop offset="0.000" stop-color="#0000ff"/><stop offset="0.144" stop-color="#0500ff"/><stop offset="1.000" stop-color="#8300ff"/></linearGradient><linearGradient id="g205"><stop offset="0.000" stop-color="#0000ff"/><stop offset="0.141" stop-color="#0600ff"/><stop offset="1.000" stop-color="#8000ff"/></linearGradient><linearGradient id="g206"><stop offset="0.000" stop-color="#0000ff"/><stop offset="0.136" stop-color="#0600ff"/><stop offset="1.000" stop-color="#7e00ff"/></linearGradient><linearGradient id="g207"><stop offset="0.000" stop-color="#0000ff"/><stop offset="0.139" stop-color="#0600ff"/><stop offset="1.000" stop-color="#7b00ff"/></linearGradient><linearGradient id="g208"><stop offset="0.000" stop-color="#0000ff"/><stop offset="0.128" stop-color="#0600ff"/><stop offset="1.000" stop-color="#7900ff"/></linearGradient><linearGradient id="g209"><stop offset="0.000" stop-color="#0000ff"/><stop offset="0.131" stop-color="#0700ff"/><stop offset="1.000" stop-color="#7700ff"/></linearGradient><linearGradient id="g210"><stop offset="0.000" stop-color="#0000ff"/><stop offset="0.135" stop-color="#0800ff"/><stop offset="1.000" stop-color="#7400ff"/></linearGradient><linearGradient id="g211"><stop offset="0.000" stop-color="#0000ff"/><stop offset="0.138" stop-color="#0900ff"/><stop offset="1.000" stop-color="#7200ff"/></linearGradient><linearGradient id="g212"><stop offset="0.000" stop-color="#0000ff"/><stop offset="0.163" stop-color="#0d00ff"/><stop offset="1.000" stop-color="#7000ff"/></linearGradient><linearGradient id="g213"><stop offset="0.000" stop-color="#0000ff"/><stop offset="0.348" stop-color="#2200ff"/><stop offset="1.000" stop-color="#6e00ff"/></linearGradient><linearGradient id="g214"><stop offset="0.000" stop-color="#0000ff"/><stop offset="1.000" stop-color="#6b00ff"/></linearGradient><linearGradient id="g215"><stop offset="0.000" stop-color="#0000ff"/><stop offset="1.000" stop-color="#6900ff"/></linearGradient><linearGradient id="g216"><stop offset="0.000" stop-color="#0000ff"/><stop offset="1.000" stop-color="#6700ff"/></linearGradient><linearGradient id="g217"><stop offset="0.000" stop-color="#0000ff"/><stop offset="1.000" stop-color="#6500ff"/></linearGradient><linearGradient id="g218"><stop offset="0.000" stop-color="#0100ff"/><stop offset="1.000" stop-color="#6300ff"/></linearGradient><linearGradient id="g219"><stop offset="0.000" stop-color="#0200ff"/><stop offset="1.000" stop-color="#6100ff"/></linearGradient><linearGradient id="g220"><stop offset="0.000" stop-color="#0400ff"/><stop offset="1.000" stop-color="#5f00ff"/></linearGradient><linearGradient id="g221"><stop offset="0.000" stop-color="#0500ff"/><stop offset="1.000" stop-color="#5d00ff"/></linearGradient><linearGradient id="g222"><stop offset="0.000" stop-color="#0600ff"/><stop offset="1.000" stop-color="#5a00ff"/></linearGradient><linearGradient id="g223"><stop offset="0.000" stop-color="#0700ff"/><stop offset="1.000" stop-color="#5900ff"/></linearGradient><linearGradient id="g224"><stop offset="0.000" stop-color="#0800ff"/><stop offset="1.000" stop-color="#5600ff"/></linearGradient><linearGradient id="g225"><stop offset="0.000" stop-color="#0a00ff"/><stop offset="1.000" stop-color="#5500ff"/></linearGradient><linearGradient id="g226"><stop offset="0.000" stop-color="#0b00ff"/><stop offset="1.000" stop-color="#5300ff"/></linearGradient><linearGradient id="g227"><stop offset="0.000" stop-color="#0c00ff"/><stop offset="1.000" stop-color="#5000ff"/></linearGradient><linearGradient id="g228"><stop offset="0.000" stop-color="#0e00ff"/><stop offset="1.000" stop-color="#4f00ff"/></linearGradient><linearGradient id="g229"><stop offset="0.000" stop-color="#0f00ff"/><stop offset="1.000" stop-color="#4d00ff"/></linearGradient><linearGradient id="g230"><stop offset="0.000" stop-color="#1000ff"/><stop offset="1.000" stop-color="#4b00ff"/></linearGradient><linearGradient id="g231"><stop offset="0.000" stop-color="#1200ff"/><stop offset="1.000" stop-color="#4900ff"/></linearGradient><linearGradient id="g232"><stop offset="0.000" stop-color="#1300ff"/><stop offset="1.000" stop-color="#4700ff"/></linearGradient><linearGradient id="g233"><stop offset="0.000" stop-color="#1400ff"/><stop offset="1.000" stop-color="#4600ff"/></linearGradient><linearGradient id="g234"><stop offset="0.000" stop-color="#1500ff"/><stop offset="1.000" stop-color="#4300ff"/></linearGradient><linearGradient id="g235"><stop offset="0.000" stop-color="#1700ff"/><stop offset="1.000" stop-color="#4200ff"/></linearGradient><linearGradient id="g236"><stop offset="0.000" stop-color="#1800ff"/><stop offset="1.000" stop-color="#4000ff"/></linearGradient><linearGradient id="g237"><stop offset="0.000" stop-color="#1900ff"/><stop offset="1.000" stop-color="#3f00ff"/></linearGradient><linearGradient id="g238"><stop offset="0.000" stop-color="#1a00ff"/><stop offset="1.000" stop-color="#3d00ff"/></linearGradient><linearGradient id="g239"><stop offset="0.000" stop-color="#1b00ff"/><stop offset="1.000" stop-color="#3b00ff"/></linearGradient><linearGradient id="g240"><stop offset="0.000" stop-color="#1d00ff"/><stop offset="1.000" stop-color="#3a00ff"/></linearGradient><linearGradient id="g241"><stop offset="0.000" stop-color="#1e00ff"/><stop offset="1.000" stop-color="#3800ff"/></linearGradient><linearGradient id="g242"><stop offset="0.000" stop-color="#1f00ff"/><stop offset="1.000" stop-color="#3600ff"/></linearGradient><linearGradient id="g243"><stop offset="0.000" stop-color="#1f00ff"/><stop offset="1.000" stop-color="#3400ff"/></linearGradient><linearGradient id="g244"><stop offset="0.000" stop-color="#2100ff"/><stop offset="1.000" stop-color="#3200ff"/></linearGradient><linearGradient id="g245"><stop offset="0.000" stop-color="#2200ff"/><stop offset="1.000" stop-color="#3100ff"/></linearGradient><linearGradient id="g246"><stop offset="0.000" stop-color="#2400ff"/><stop offset="1.000" stop-color="#2f00ff"/></linearGradient><linearGradient id="g247"><stop offset="0.000" stop-color="#2500ff"/><stop offset="1.000" stop-color="#2e00ff"/></linearGradient><linearGradient id="g248"><stop offset="0.000" stop-color="#2600ff"/><stop offset="1.000" stop-color="#2c00ff"/></linearGradient><clipPath id="loc"><path d="M1531.7,807.9L1531.6,807.9L1531.6,807.9L1531.6,807.9L1531.5,807.8L1531.5,807.9L1531.4,807.9L1531.4,808.0L1531.4,808.0L1531.3,808.0L1531.2,808.0L1531.1,808.0L1531.1,808.0L1531.0,808.0L1530.9,808.0L1530.8,808.0L1530.8,808.1L1530.8,808.2L1530.7,808.3L1530.7,808.3L1530.6,808.4L1530.6,808.4L1530.5,808.4L1530.4,808.4L1530.3,808.4L1530.2,808.4L1530.0,808.4L1529.9,808.4L1529.7,808.4L1529.6,808.4L1529.5,808.4L1529.3,808.4L1529.2,808.4L1529.0,808.4L1528.9,808.3L1528.7,808.3L1528.5,808.2L1528.3,808.1L1528.0,808.0L1527.7,807.8L1527.4,807.5L1526.9,807.2L1526.5,806.9L1526.0,806.5L1525.5,806.1L1525.0,805.6L1524.4,805.1L1523.8,804.6L1523.1,804.0L1522.4,803.3L1521.7,802.6L1520.9,801.8L1520.0,801.0L1519.1,800.1L1518.1,799.1L1517.1,798.1L1516.0,797.0L1514.9,795.8L1513.7,794.6L1512.5,793.3L1511.2,791.9L1509.8,790.5L1508.4,789.1L1506.9,787.6L1505.3,786.0L1503.7,784.3L1501.9,782.5L1500.0,780.7L1498.1,778.7L1496.1,776.6L1493.9,774.5L1491.7,772.3L1489.4,770.0L1487.1,767.6L1484.6,765.1L1482.0,762.4L1479.4,759.6L1476.6,756.6L1473.7,753.5L1470.7,750.1L1467.6,746.6L1464.4,742.9L1461.1,739.0L1457.7,734.8L1454.1,730.2L1450.3,725.1L1446.2,719.5L1441.8,713.2L1437.2,706.4L1432.3,699.0L1427.2,691.2L1422.1,682.9L1416.7,674.1L1411.3,664.8L1405.7,655.1L1400.0,644.8L1394.2,634.0L1388.3,622.8L1382.4,611.2L1376.4,599.3L1370.5,587.2L1364.6,574.9L1358.7,562.5L1353.0,550.0L1347.4,537.4L1342.1,524.8L1337.0,512.4L1332.3,500.1L1327.9,488.1L1323.7,476.4L1319.9,465.0L1316.3,454.0L1312.9,443.3L1309.9,433.2L1307.2,423.6L1304.8,414.5L1302.7,406.0L1300.9,398.0L1299.3,390.5L1298.0,383.5L1297.0,377.0L1296.2,370.9L1295.6,365.3L1295.2,360.1L1295.1,355.4L1295.1,350.9L1295.4,346.7L1295.8,342.9L1296.4,339.3L1297.1,336.0L1298.1,333.0L1299.2,330.2L1300.5,327.7L1301.9,325.4L1303.5,323.3L1305.2,321.6L1307.0,320.0L1308.9,318.7L1310.9,317.5L1313.0,316.6L1315.2,315.8L1317.5,315.1L1319.8,314.6L1322.2,314.2L1324.6,313.9L1327.1,313.6L1329.7,313.4L1332.3,313.3L1334.9,313.2L1337.5,313.1L1340.2,313.1L1342.8,313.1L1345.4,313.1L1348.0,313.1L1350.7,313.2L1353.4,313.3L1356.1,313.4L1358.8,313.5L1361.5,313.7L1364.3,313.9L1367.2,314.1L1370.0,314.3L1373.0,314.5L1375.9,314.8L1378.9,315.1L1382.0,315.4L1385.1,315.7L1388.3,316.0L1391.5,316.4L1394.8,316.7L1398.2,317.1L1401.6,317.5L1405.1,318.0L1408.6,318.4L1412.2,318.9L1415.9,319.3L1419.7,319.8L1423.6,320.3L1427.5,320.8L1431.5,321.4L1435.6,321.9L1439.8,322.5L1444.0,323.0L1448.4,323.6L1452.8,324.2L1457.3,324.8L1462.0,325.5L1466.7,326.1L1471.5,326.8L1476.4,327.5L1481.4,328.2L1486.5,328.9L1491.7,329.6L1497.0,330.3L1502.4,331.1L1507.9,331.9L1513.4,332.6L1519.1,333.4L1524.9,334.2L1530.8,335.1L1536.7,335.9L1542.8,336.8L1548.9,337.6L1555.1,338.5L1561.4,339.4L1567.8,340.3L1574.3,341.2L1580.8,342.1L1587.4,343.0L1594.0,343.9L1600.7,344.9L1607.5,345.8L1614.3,346.8L1621.1,347.7L1627.9,348.7L1634.6,349.6L1641.3,350.6L1647.9,351.5L1654.4,352.4L1661.0,353.3L1667.5,354.2L1673.9,355.1L1680.4,356.0L1686.8,356.9L1693.2,357.8L1699.4,358.7L1705.4,359.5L1711.3,360.3L1717.1,361.1L1722.7,361.9L1728.2,362.7L1733.6,363.5L1738.9,364.2L1744.0,364.9L1748.9,365.6L1753.7,366.3L1758.4,366.9L1762.9,367.6L1767.3,368.2L1771.5,368.8L1775.5,369.3L1779.4,369.9L1783.2,370.4L1786.9,370.9L1790.4,371.4L1793.8,371.9L1797.0,372.3L1800.2,372.8L1803.3,373.2L1806.2,373.6L1809.1,374.0L1811.9,374.4L1814.7,374.8L1817.3,375.2L1819.9,375.5L1822.4,375.9L1824.8,376.2L1827.2,376.6L1829.4,376.9L1831.6,377.2L1833.7,377.5L1835.7,377.8L1837.6,378.0L1839.5,378.3L1841.2,378.5L1842.9,378.8L1844.5,379.0L1845.9,379.2L1847.3,379.4L1848.6,379.6L1849.8,379.7L1851.0,379.9L1852.2,380.1L1853.3,380.2L1854.3,380.4L1855.3,380.5L1856.2,380.6L1857.1,380.8L1857.9,380.9L1858.7,381.0L1859.4,381.1L1860.0,381.2L1860.6,381.3L1861.2,381.3L1861.7,381.4L1862.1,381.5L1862.6,381.5L1863.1,381.6L1863.5,381.7L1863.9,381.7L1864.3,381.8L1864.7,381.8L1865.1,381.9L1865.5,381.9L1865.8,382.0L1866.1,382.0L1866.5,382.1L1866.8,382.1L1867.2,382.2L1867.5,382.2L1867.9,382.3L1868.2,382.3L1868.5,382.4L1868.8,382.4L1869.2,382.4L1869.4,382.5Z"/></clipPath><linearGradient id="h0"><stop offset="0.000" stop-color="#a9ff00"/><stop offset="1.000" stop-color="#b5ff00"/></linearGradient><linearGradient id="h1"><stop offset="0.000" stop-color="#a9ff00"/><stop offset="1.000" stop-color="#d0ff00"/></linearGradient><linearGradient id="h2"><stop offset="0.000" stop-color="#a9ff00"/><stop offset="1.000" stop-color="#ecff00"/></linearGradient><linearGradient id="h3"><stop offset="0.000" stop-color="#a9ff00"/><stop offset="0.933" stop-color="#fffc00"/><stop offset="1.000" stop-color="#fff500"/></linearGradient><linearGradient id="h4"><stop offset="0.000" stop-color="#a9ff00"/><stop offset="0.722" stop-color="#fffb00"/><stop offset="1.000" stop-color="#ffdb00"/></linearGradient><linearGradient id="h5"><stop offset="0.000" stop-color="#a9ff00"/><stop offset="0.593" stop-color="#fffb00"/><stop offset="1.000" stop-color="#ffc500"/></linearGradient><linearGradient id="h6"><stop offset="0.000" stop-color="#aaff00"/><stop offset="0.500" stop-color="#fffb00"/><stop offset="0.957" stop-color="#ffb700"/><stop offset="1.000" stop-color="#ffb200"/></linearGradient><linearGradient id="h7"><stop offset="0.000" stop-color="#aaff00"/><stop offset="0.429" stop-color="#fffc00"/><stop offset="0.820" stop-color="#ffb800"/><stop offset="1.000" stop-color="#ffa200"/></linearGradient><linearGradient id="h8"><stop offset="0.000" stop-color="#aaff00"/><stop offset="0.429" stop-color="#fffb00"/><stop offset="0.820" stop-color="#ffb800"/><stop offset="1.000" stop-color="#ffa100"/></linearGradient><linearGradient id="h9"><stop offset="0.000" stop-color="#aaff00"/><stop offset="0.429" stop-color="#fffb00"/><stop offset="0.820" stop-color="#ffb700"/><stop offset="1.000" stop-color="#ffa100"/></linearGradient><linearGradient id="h10"><stop offset="0.000" stop-color="#aaff00"/><stop offset="0.429" stop-color="#fffb00"/><stop offset="0.820" stop-color="#ffb700"/><stop offset="1.000" stop-color="#ffa100"/></linearGradient><linearGradient id="h11"><stop offset="0.000" stop-color="#aaff00"/><stop offset="0.422" stop-color="#fffc00"/><stop offset="0.807" stop-color="#ffb800"/><stop offset="1.000" stop-color="#ffa000"/></linearGradient><linearGradient id="h12"><stop offset="0.000" stop-color="#aaff00"/><stop offset="0.422" stop-color="#fffc00"/><stop offset="0.807" stop-color="#ffb800"/><stop offset="1.000" stop-color="#ffa000"/></linearGradient><linearGradient id="h13"><stop offset="0.000" stop-color="#aaff00"/><stop offset="0.422" stop-color="#fffb00"/><stop offset="0.807" stop-color="#ffb800"/><stop offset="1.000" stop-color="#ffa000"/></linearGradient><linearGradient id="h14"><stop offset="0.000" stop-color="#aaff00"/><stop offset="0.422" stop-color="#fffb00"/><stop offset="0.807" stop-color="#ffb700"/><stop offset="1.000" stop-color="#ff9f00"/></linearGradient><linearGradient id="h15"><stop offset="0.000" stop-color="#aaff00"/><stop offset="0.416" stop-color="#fffc00"/><stop offset="0.801" stop-color="#ffb800"/><stop offset="1.000" stop-color="#ff9f00"/></linearGradient><linearGradient id="h16"><stop offset="0.000" stop-color="#aaff01"/><stop offset="0.416" stop-color="#fffc00"/><stop offset="0.801" stop-color="#ffb800"/><stop offset="1.000" stop-color="#ff9e00"/></linearGradient><linearGradient id="h17"><stop offset="0.000" stop-color="#aaff03"/><stop offset="0.416" stop-color="#fffb00"/><stop offset="0.795" stop-color="#ffb800"/><stop offset="1.000" stop-color="#ff9e00"/></linearGradient><linearGradient id="h18"><stop offset="0.000" stop-color="#aaff05"/><stop offset="0.416" stop-color="#fffb00"/><stop offset="0.795" stop-color="#ffb800"/><stop offset="1.000" stop-color="#ff9e00"/></linearGradient><linearGradient id="h19"><stop offset="0.000" stop-color="#aaff08"/><stop offset="0.410" stop-color="#fffc02"/><stop offset="0.789" stop-color="#ffb800"/><stop offset="1.000" stop-color="#ff9d00"/></linearGradient><linearGradient id="h20"><stop offset="0.000" stop-color="#aaff0a"/><stop offset="0.410" stop-color="#fffc05"/><stop offset="0.789" stop-color="#ffb800"/><stop offset="1.000" stop-color="#ff9d00"/></linearGradient><linearGradient id="h21"><stop offset="0.000" stop-color="#abff0d"/><stop offset="0.410" stop-color="#fffb07"/><stop offset="0.789" stop-color="#ffb801"/><stop offset="1.000" stop-color="#ff9d00"/></linearGradient><linearGradient id="h22"><stop offset="0.000" stop-color="#abff0f"/><stop offset="0.410" stop-color="#fffb0a"/><stop offset="0.789" stop-color="#ffb703"/><stop offset="1.000" stop-color="#ff9c00"/></linearGradient><linearGradient id="h23"><stop offset="0.000" stop-color="#abff11"/><stop offset="0.404" stop-color="#fffc0c"/><stop offset="0.776" stop-color="#ffb905"/><stop offset="1.000" stop-color="#ff9c02"/></linearGradient><linearGradient id="h24"><stop offset="0.000" stop-color="#abff14"/><stop offset="0.404" stop-color="#fffc0f"/><stop offset="0.776" stop-color="#ffb807"/><stop offset="1.000" stop-color="#ff9c04"/></linearGradient><linearGradient id="h25"><stop offset="0.000" stop-color="#abff16"/><stop offset="0.404" stop-color="#fffb11"/><stop offset="0.776" stop-color="#ffb809"/><stop offset="1.000" stop-color="#ff9b06"/></linearGradient><linearGradient id="h26"><stop offset="0.000" stop-color="#abff19"/><stop offset="0.404" stop-color="#fffb14"/><stop offset="0.776" stop-color="#ffb70b"/><stop offset="1.000" stop-color="#ff9b08"/></linearGradient><linearGradient id="h27"><stop offset="0.000" stop-color="#abff1b"/><stop offset="0.398" stop-color="#fffc17"/><stop offset="0.770" stop-color="#ffb80d"/><stop offset="1.000" stop-color="#ff9b09"/></linearGradient><linearGradient id="h28"><stop offset="0.000" stop-color="#abff1e"/><stop offset="0.398" stop-color="#fffc19"/><stop offset="0.764" stop-color="#ffb910"/><stop offset="1.000" stop-color="#ff9a0b"/></linearGradient><linearGradient id="h29"><stop offset="0.000" stop-color="#abff20"/><stop offset="0.398" stop-color="#fffc1c"/><stop offset="0.764" stop-color="#ffb812"/><stop offset="1.000" stop-color="#ff9a0d"/></linearGradient><linearGradient id="h30"><stop offset="0.000" stop-color="#abff23"/><stop offset="0.398" stop-color="#fffb1f"/><stop offset="0.764" stop-color="#ffb814"/><stop offset="1.000" stop-color="#ff990f"/></linearGradient><linearGradient id="h31"><stop offset="0.000" stop-color="#abff25"/><stop offset="0.398" stop-color="#fffb21"/><stop offset="0.764" stop-color="#ffb716"/><stop offset="1.000" stop-color="#ff9911"/></linearGradient><clipPath id="iloc"><path d="M1928.9,2262.4L1928.8,2262.4L1928.7,2262.3L1928.6,2262.2L1928.5,2262.2L1928.4,2262.2L1928.2,2262.4L1928.1,2262.6L1928.0,2262.7L1927.8,2262.8L1927.6,2262.8L1927.3,2262.7L1927.0,2262.6L1926.7,2262.6L1926.5,2262.6L1926.3,2262.8L1926.2,2263.0L1926.1,2263.3L1926.0,2263.6L1925.8,2263.8L1925.7,2263.9L1925.5,2264.0L1925.2,2264.1L1924.9,2264.1L1924.6,2264.1L1924.2,2264.1L1923.7,2264.1L1923.2,2264.0L1922.8,2263.9L1922.3,2263.9L1921.9,2263.9L1921.5,2264.0L1921.0,2264.0L1920.5,2263.9L1920.0,2263.8L1919.4,2263.6L1918.8,2263.4L1918.1,2263.1L1917.3,2262.7L1916.3,2262.1L1915.2,2261.2L1913.8,2260.3L1912.4,2259.2L1910.8,2258.0L1909.2,2256.6L1907.5,2255.1L1905.7,2253.5L1903.7,2251.7L1901.6,2249.7L1899.4,2247.6L1897.0,2245.3L1894.4,2242.8L1891.6,2240.2L1888.6,2237.3L1885.5,2234.2L1882.2,2230.9L1878.8,2227.4L1875.2,2223.6L1871.5,2219.7L1867.5,2215.6L1863.4,2211.3L1859.1,2206.8L1854.5,2202.2L1849.8,2197.4L1844.7,2192.3L1839.4,2186.9L1833.7,2181.2L1827.8,2175.2L1821.5,2168.9L1815.0,2162.4L1808.2,2155.5L1801.1,2148.4L1793.8,2141.1L1786.2,2133.4L1778.4,2125.4L1770.2,2116.9L1761.6,2107.8L1752.6,2098.3L1743.3,2088.2L1733.8,2077.5L1723.9,2066.2L1713.7,2054.4L1703.2,2041.9L1692.2,2028.4L1680.7,2013.7L1668.5,1997.4L1655.4,1979.4L1641.4,1959.4L1626.5,1937.6L1610.9,1914.0L1594.8,1888.9L1578.2,1862.3L1561.2,1834.2L1543.7,1804.6L1525.8,1773.3L1507.6,1740.5L1489.0,1706.0L1470.2,1670.1L1451.2,1633.0L1432.2,1594.9L1413.2,1556.1L1394.3,1516.8L1375.5,1477.1L1357.2,1437.0L1339.3,1396.8L1322.3,1356.6L1306.2,1316.7L1291.0,1277.5L1276.9,1239.1L1263.6,1201.6L1251.2,1165.1L1239.6,1129.8L1229.0,1095.8L1219.3,1063.4L1210.7,1032.6L1203.0,1003.6L1196.2,976.3L1190.4,950.7L1185.5,926.8L1181.4,904.4L1178.0,883.5L1175.4,864.1L1173.5,846.2L1172.4,829.6L1171.9,814.2L1172.0,800.0L1172.7,786.7L1174.1,774.3L1176.0,762.8L1178.5,752.3L1181.5,742.6L1185.1,733.7L1189.2,725.6L1193.7,718.3L1198.7,711.8L1204.1,706.1L1209.9,701.1L1216.1,696.8L1222.6,693.2L1229.3,690.1L1236.3,687.5L1243.5,685.4L1250.9,683.8L1258.6,682.5L1266.4,681.4L1274.4,680.6L1282.6,680.0L1290.9,679.6L1299.3,679.2L1307.7,679.0L1316.1,678.9L1324.5,678.9L1332.9,679.0L1341.4,679.1L1349.8,679.3L1358.4,679.6L1367.0,679.9L1375.7,680.4L1384.6,680.9L1393.5,681.4L1402.6,682.1L1411.8,682.8L1421.1,683.6L1430.6,684.4L1440.2,685.3L1450.0,686.3L1460.0,687.3L1470.2,688.4L1480.5,689.5L1491.0,690.7L1501.7,691.9L1512.7,693.2L1523.8,694.6L1535.2,696.0L1546.8,697.4L1558.6,698.9L1570.7,700.5L1583.0,702.1L1595.6,703.7L1608.4,705.4L1621.5,707.2L1634.8,709.0L1648.5,710.8L1662.4,712.7L1676.6,714.6L1691.1,716.6L1705.9,718.6L1721.0,720.7L1736.4,722.8L1752.0,725.0L1768.0,727.2L1784.4,729.5L1801.0,731.8L1817.9,734.2L1835.2,736.6L1852.7,739.0L1870.6,741.5L1888.8,744.1L1907.3,746.7L1926.1,749.3L1945.1,752.0L1964.5,754.7L1984.2,757.5L2004.1,760.3L2024.3,763.1L2044.7,765.9L2065.4,768.8L2086.2,771.7L2107.3,774.7L2128.6,777.7L2150.0,780.7L2171.6,783.7L2193.4,786.7L2215.2,789.8L2236.9,792.9L2258.5,795.9L2279.8,798.9L2300.9,801.8L2321.8,804.8L2342.7,807.7L2363.5,810.6L2384.3,813.5L2405.0,816.4L2425.5,819.3L2445.8,822.1L2465.6,824.9L2484.9,827.6L2503.8,830.2L2522.2,832.8L2540.3,835.3L2557.9,837.7L2575.1,840.1L2591.9,842.5L2608.3,844.8L2624.2,847.0L2639.6,849.2L2654.5,851.3L2668.9,853.3L2682.9,855.3L2696.3,857.1L2709.3,859.0L2721.8,860.7L2733.9,862.4L2745.5,864.0L2756.8,865.6L2767.7,867.1L2778.2,868.6L2788.3,870.0L2798.0,871.4L2807.5,872.7L2816.8,874.0L2825.8,875.2L2834.6,876.5L2843.1,877.7L2851.4,878.8L2859.4,880.0L2867.1,881.0L2874.6,882.1L2881.8,883.1L2888.7,884.1L2895.4,885.0L2901.8,885.9L2908.0,886.8L2913.9,887.6L2919.6,888.4L2924.9,889.1L2929.9,889.8L2934.6,890.5L2939.0,891.1L2943.1,891.7L2947.1,892.2L2950.9,892.8L2954.6,893.3L2958.1,893.8L2961.4,894.3L2964.6,894.7L2967.5,895.1L2970.3,895.5L2973.0,895.9L2975.4,896.2L2977.7,896.5L2979.8,896.8L2981.6,897.1L2983.3,897.3L2984.9,897.6L2986.4,897.8L2987.9,898.0L2989.4,898.2L2990.8,898.4L2992.2,898.6L2993.5,898.8L2994.8,898.9L2996.0,899.1L2997.1,899.3L2998.2,899.4L2999.3,899.6L3000.4,899.7L3001.5,899.9L3002.6,900.0L3003.7,900.2L3004.8,900.4L3005.9,900.5L3006.9,900.7L3007.9,900.8L3008.9,900.9L3009.8,901.1Z"/></clipPath><clipPath id="ibox"><rect x="1711" y="666" width="155" height="147"/></clipPath></defs><path d="M1059.5,131.5 L1066.5,137.8 L1075.8,125" fill="none" stroke="#fff" stroke-width="5" stroke-linejoin="miter"/><path d="M1060.5,131.7 L1066.4,136.6 L1075.3,125.8" fill="none" stroke="#777" stroke-width="1.6"/>
<rect x="60" y="287" width="193" height="401" fill="#232323"/>
<rect x="53" y="686.0" width="7" height="2" fill="#e4e4e4"/>
<rect x="60" y="647.2" width="193" height="2" fill="#787878"/>
<rect x="53" y="647.2" width="7" height="2" fill="#e4e4e4"/>
<rect x="60" y="607.2" width="193" height="2" fill="#787878"/>
<rect x="53" y="607.2" width="7" height="2" fill="#e4e4e4"/>
<rect x="60" y="567.3" width="193" height="2" fill="#787878"/>
<rect x="53" y="567.3" width="7" height="2" fill="#e4e4e4"/>
<rect x="60" y="527.4" width="193" height="2" fill="#787878"/>
<rect x="53" y="527.4" width="7" height="2" fill="#e4e4e4"/>
<rect x="60" y="487.5" width="193" height="2" fill="#787878"/>
<rect x="53" y="487.5" width="7" height="2" fill="#e4e4e4"/>
<rect x="60" y="447.5" width="193" height="2" fill="#787878"/>
<rect x="53" y="447.5" width="7" height="2" fill="#e4e4e4"/>
<rect x="60" y="407.6" width="193" height="2" fill="#787878"/>
<rect x="53" y="407.6" width="7" height="2" fill="#e4e4e4"/>
<rect x="60" y="367.7" width="193" height="2" fill="#787878"/>
<rect x="53" y="367.7" width="7" height="2" fill="#e4e4e4"/>
<rect x="60" y="327.7" width="193" height="2" fill="#787878"/>
<rect x="53" y="327.7" width="7" height="2" fill="#e4e4e4"/>
<rect x="53" y="287.8" width="7" height="2" fill="#e4e4e4"/>
<rect x="79.25" y="495.2" width="49.5" height="191.8" fill="url(#gr)" stroke="#000" stroke-width="1.5"/>
<rect x="130.25" y="588.7" width="49.5" height="98.3" fill="url(#gg)" stroke="#000" stroke-width="1.5"/>
<rect x="181.25" y="484.5" width="49.5" height="202.5" fill="url(#gb)" stroke="#000" stroke-width="1.5"/>
<rect x="61" y="288" width="191" height="399" fill="none" stroke="#8e8e8e" stroke-width="2"/>
<rect x="60" y="287" width="193" height="3" fill="#8e8e8e"/><rect x="60" y="685" width="193" height="3" fill="#8e8e8e"/>
<rect x="60" y="688" width="2" height="5" fill="#e4e4e4"/><rect x="251" y="688" width="2" height="5" fill="#e4e4e4"/>
<rect x="320" y="287" width="142" height="401" fill="#232323"/>
<rect x="320" y="687.4" width="142" height="1.8" fill="#787878"/>
<rect x="313" y="687.2" width="7" height="2" fill="#e4e4e4"/>
<rect x="320" y="620.7" width="142" height="1.8" fill="#787878"/>
<rect x="313" y="620.6" width="7" height="2" fill="#e4e4e4"/>
<rect x="320" y="554.1" width="142" height="1.8" fill="#787878"/>
<rect x="313" y="554.0" width="7" height="2" fill="#e4e4e4"/>
<rect x="320" y="487.4" width="142" height="1.8" fill="#787878"/>
<rect x="313" y="487.3" width="7" height="2" fill="#e4e4e4"/>
<rect x="320" y="420.8" width="142" height="1.8" fill="#787878"/>
<rect x="313" y="420.6" width="7" height="2" fill="#e4e4e4"/>
<rect x="320" y="354.1" width="142" height="1.8" fill="#787878"/>
<rect x="313" y="354.0" width="7" height="2" fill="#e4e4e4"/>
<rect x="320" y="287.5" width="142" height="1.8" fill="#787878"/>
<rect x="313" y="287.4" width="7" height="2" fill="#e4e4e4"/>
<rect x="334.5" y="487" width="112" height="26.0" fill="url(#go)" stroke="#000" stroke-width="1.6"/>
<rect x="321" y="288" width="140" height="399" fill="none" stroke="#8e8e8e" stroke-width="2"/>
<rect x="320" y="287" width="142" height="3" fill="#8e8e8e"/><rect x="320" y="685" width="142" height="3" fill="#8e8e8e"/>
<rect x="320" y="688" width="2" height="5" fill="#e4e4e4"/><rect x="460" y="688" width="2" height="5" fill="#e4e4e4"/>
<rect x="529" y="287" width="142" height="401" fill="#232323"/>
<rect x="529" y="687.4" width="142" height="1.8" fill="#787878"/>
<rect x="522" y="687.2" width="7" height="2" fill="#e4e4e4"/>
<rect x="529" y="620.7" width="142" height="1.8" fill="#787878"/>
<rect x="522" y="620.6" width="7" height="2" fill="#e4e4e4"/>
<rect x="529" y="554.1" width="142" height="1.8" fill="#787878"/>
<rect x="522" y="554.0" width="7" height="2" fill="#e4e4e4"/>
<rect x="529" y="487.4" width="142" height="1.8" fill="#787878"/>
<rect x="522" y="487.3" width="7" height="2" fill="#e4e4e4"/>
<rect x="529" y="420.8" width="142" height="1.8" fill="#787878"/>
<rect x="522" y="420.6" width="7" height="2" fill="#e4e4e4"/>
<rect x="529" y="354.1" width="142" height="1.8" fill="#787878"/>
<rect x="522" y="354.0" width="7" height="2" fill="#e4e4e4"/>
<rect x="529" y="287.5" width="142" height="1.8" fill="#787878"/>
<rect x="522" y="287.4" width="7" height="2" fill="#e4e4e4"/>
<rect x="543.5" y="487" width="112" height="48.6" fill="url(#go)" stroke="#000" stroke-width="1.6"/>
<rect x="530" y="288" width="140" height="399" fill="none" stroke="#8e8e8e" stroke-width="2"/>
<rect x="529" y="287" width="142" height="3" fill="#8e8e8e"/><rect x="529" y="685" width="142" height="3" fill="#8e8e8e"/>
<rect x="529" y="688" width="2" height="5" fill="#e4e4e4"/><rect x="669" y="688" width="2" height="5" fill="#e4e4e4"/>
<rect x="738" y="287" width="142" height="401" fill="#232323"/>
<rect x="738" y="687.4" width="142" height="1.8" fill="#787878"/>
<rect x="731" y="687.2" width="7" height="2" fill="#e4e4e4"/>
<rect x="738" y="620.7" width="142" height="1.8" fill="#787878"/>
<rect x="731" y="620.6" width="7" height="2" fill="#e4e4e4"/>
<rect x="738" y="554.1" width="142" height="1.8" fill="#787878"/>
<rect x="731" y="554.0" width="7" height="2" fill="#e4e4e4"/>
<rect x="738" y="487.4" width="142" height="1.8" fill="#787878"/>
<rect x="731" y="487.3" width="7" height="2" fill="#e4e4e4"/>
<rect x="738" y="420.8" width="142" height="1.8" fill="#787878"/>
<rect x="731" y="420.6" width="7" height="2" fill="#e4e4e4"/>
<rect x="738" y="354.1" width="142" height="1.8" fill="#787878"/>
<rect x="731" y="354.0" width="7" height="2" fill="#e4e4e4"/>
<rect x="738" y="287.5" width="142" height="1.8" fill="#787878"/>
<rect x="731" y="287.4" width="7" height="2" fill="#e4e4e4"/>
<rect x="752.5" y="487" width="112" height="67.3" fill="url(#go)" stroke="#000" stroke-width="1.6"/>
<rect x="739" y="288" width="140" height="399" fill="none" stroke="#8e8e8e" stroke-width="2"/>
<rect x="738" y="287" width="142" height="3" fill="#8e8e8e"/><rect x="738" y="685" width="142" height="3" fill="#8e8e8e"/>
<rect x="738" y="688" width="2" height="5" fill="#e4e4e4"/><rect x="878" y="688" width="2" height="5" fill="#e4e4e4"/>
<path d="M915,660.5 L923,654.5 L923,666.5Z" fill="#555"/><path d="M1230,660.5 L1222,654.5 L1222,666.5Z" fill="#444"/>
<rect x="58" y="743" width="822" height="99" fill="#232323"/>
<rect x="58" y="776.8" width="822" height="2" fill="#787878"/>
<g clip-path="url(#ca)">
<rect x="123.0" y="796.1" width="7.6" height="48.6" fill="url(#b1)" stroke="#000" stroke-width="1.7"/>
<rect x="140.5" y="823.6" width="7.6" height="21.1" fill="url(#b2)" stroke="#000" stroke-width="1.7"/>
<rect x="149.9" y="825.2" width="7.6" height="19.5" fill="url(#b3)" stroke="#000" stroke-width="1.7"/>
<rect x="159.3" y="817.3" width="7.6" height="27.4" fill="url(#b4)" stroke="#000" stroke-width="1.7"/>
<rect x="168.7" y="834.7" width="7.6" height="10.0" fill="url(#b5)" stroke="#000" stroke-width="1.7"/>
<rect x="178.1" y="831.9" width="7.6" height="12.8" fill="url(#b6)" stroke="#000" stroke-width="1.7"/>
<rect x="187.5" y="829.0" width="7.6" height="15.7" fill="url(#b7)" stroke="#000" stroke-width="1.7"/>
<rect x="215.1" y="830.3" width="7.6" height="14.4" fill="url(#b8)" stroke="#000" stroke-width="1.7"/>
<rect x="224.5" y="833.1" width="7.6" height="11.6" fill="url(#b9)" stroke="#000" stroke-width="1.7"/>
<rect x="233.9" y="823.6" width="7.6" height="21.1" fill="url(#b10)" stroke="#000" stroke-width="1.7"/>
<rect x="243.3" y="831.9" width="7.6" height="12.8" fill="url(#b11)" stroke="#000" stroke-width="1.7"/>
<rect x="252.7" y="831.9" width="7.6" height="12.8" fill="url(#b12)" stroke="#000" stroke-width="1.7"/>
<rect x="262.1" y="826.8" width="7.6" height="17.9" fill="url(#b13)" stroke="#000" stroke-width="1.7"/>
<rect x="289.6" y="833.8" width="7.6" height="10.9" fill="url(#b14)" stroke="#000" stroke-width="1.7"/>
<rect x="299.0" y="830.6" width="7.6" height="14.1" fill="url(#b15)" stroke="#000" stroke-width="1.7"/>
<rect x="308.4" y="833.8" width="7.6" height="10.9" fill="url(#b16)" stroke="#000" stroke-width="1.7"/>
<rect x="317.8" y="825.5" width="7.6" height="19.2" fill="url(#b17)" stroke="#000" stroke-width="1.7"/>
<rect x="327.2" y="829.0" width="7.6" height="15.7" fill="url(#b18)" stroke="#000" stroke-width="1.7"/>
<rect x="336.6" y="830.6" width="7.6" height="14.1" fill="url(#b19)" stroke="#000" stroke-width="1.7"/>
<rect x="364.2" y="835.0" width="7.6" height="9.7" fill="url(#b20)" stroke="#000" stroke-width="1.7"/>
<rect x="373.6" y="835.0" width="7.6" height="9.7" fill="url(#b21)" stroke="#000" stroke-width="1.7"/>
<rect x="383.0" y="838.2" width="7.6" height="6.5" fill="url(#b22)" stroke="#000" stroke-width="1.7"/>
<rect x="392.4" y="825.5" width="7.6" height="19.2" fill="url(#b23)" stroke="#000" stroke-width="1.7"/>
<rect x="401.8" y="835.0" width="7.6" height="9.7" fill="url(#b24)" stroke="#000" stroke-width="1.7"/>
<rect x="411.2" y="814.8" width="7.6" height="29.9" fill="url(#b25)" stroke="#000" stroke-width="1.7"/>
<rect x="438.7" y="831.9" width="7.6" height="12.8" fill="url(#b26)" stroke="#000" stroke-width="1.7"/>
<rect x="448.1" y="835.0" width="7.6" height="9.7" fill="url(#b27)" stroke="#000" stroke-width="1.7"/>
<rect x="457.5" y="836.6" width="7.6" height="8.1" fill="url(#b28)" stroke="#000" stroke-width="1.7"/>
<rect x="466.9" y="829.0" width="7.6" height="15.7" fill="url(#b29)" stroke="#000" stroke-width="1.7"/>
<rect x="476.3" y="835.0" width="7.6" height="9.7" fill="url(#b30)" stroke="#000" stroke-width="1.7"/>
<rect x="485.7" y="820.9" width="7.6" height="23.8" fill="url(#b31)" stroke="#000" stroke-width="1.7"/>
<rect x="513.3" y="833.8" width="7.6" height="10.9" fill="url(#b32)" stroke="#000" stroke-width="1.7"/>
<rect x="522.7" y="833.8" width="7.6" height="10.9" fill="url(#b33)" stroke="#000" stroke-width="1.7"/>
<rect x="532.1" y="836.9" width="7.6" height="7.8" fill="url(#b34)" stroke="#000" stroke-width="1.7"/>
<rect x="541.5" y="831.9" width="7.6" height="12.8" fill="url(#b35)" stroke="#000" stroke-width="1.7"/>
<rect x="550.9" y="838.8" width="7.6" height="5.9" fill="url(#b36)" stroke="#000" stroke-width="1.7"/>
<rect x="560.3" y="824.7" width="7.6" height="20.0" fill="url(#b37)" stroke="#000" stroke-width="1.7"/>
<rect x="587.9" y="831.9" width="7.6" height="12.8" fill="url(#b38)" stroke="#000" stroke-width="1.7"/>
<rect x="597.3" y="833.8" width="7.6" height="10.9" fill="url(#b39)" stroke="#000" stroke-width="1.7"/>
<rect x="606.7" y="839.9" width="7.6" height="4.8" fill="url(#b40)" stroke="#000" stroke-width="1.7"/>
<rect x="616.1" y="826.8" width="7.6" height="17.9" fill="url(#b41)" stroke="#000" stroke-width="1.7"/>
<rect x="625.5" y="839.9" width="7.6" height="4.8" fill="url(#b42)" stroke="#000" stroke-width="1.7"/>
<rect x="634.9" y="830.6" width="7.6" height="14.1" fill="url(#b43)" stroke="#000" stroke-width="1.7"/>
<rect x="662.4" y="836.9" width="7.6" height="7.8" fill="url(#b44)" stroke="#000" stroke-width="1.7"/>
<rect x="671.8" y="825.5" width="7.6" height="19.2" fill="url(#b45)" stroke="#000" stroke-width="1.7"/>
<rect x="681.2" y="838.8" width="7.6" height="5.9" fill="url(#b46)" stroke="#000" stroke-width="1.7"/>
<rect x="690.6" y="831.9" width="7.6" height="12.8" fill="url(#b47)" stroke="#000" stroke-width="1.7"/>
<rect x="700.0" y="839.9" width="7.6" height="4.8" fill="url(#b48)" stroke="#000" stroke-width="1.7"/>
<rect x="709.4" y="820.9" width="7.6" height="23.8" fill="url(#b49)" stroke="#000" stroke-width="1.7"/>
<rect x="736.2" y="839.0" width="9.2" height="2.0" fill="#000"/>
<rect x="737.6" y="839.6" width="6.4" height="2.4" fill="#a47272"/>
<rect x="746.4" y="818.2" width="7.6" height="26.5" fill="url(#b51)" stroke="#000" stroke-width="1.7"/>
<rect x="755.2" y="839.4" width="8.8" height="1.6" fill="#000"/>
<rect x="765.2" y="825.1" width="7.6" height="19.6" fill="url(#b52)" stroke="#000" stroke-width="1.7"/>
<rect x="773.8" y="839.0" width="9.2" height="2.0" fill="#000"/>
<rect x="775.2" y="839.6" width="6.4" height="2.4" fill="#a472a4"/>
<rect x="784.0" y="832.1" width="7.6" height="12.6" fill="url(#b54)" stroke="#000" stroke-width="1.7"/>
<rect x="811.5" y="839.8" width="7.6" height="4.9" fill="url(#b55)" stroke="#000" stroke-width="1.7"/>
<rect x="820.9" y="812.3" width="7.6" height="32.4" fill="url(#b56)" stroke="#000" stroke-width="1.7"/>
<rect x="830.3" y="832.1" width="7.6" height="12.6" fill="url(#b57)" stroke="#000" stroke-width="1.7"/>
<rect x="839.7" y="808.9" width="7.6" height="35.8" fill="url(#b58)" stroke="#000" stroke-width="1.7"/>
<rect x="849.1" y="840.1" width="7.6" height="4.6" fill="url(#b59)" stroke="#000" stroke-width="1.7"/>
<rect x="858.5" y="818.2" width="7.6" height="26.5" fill="url(#b60)" stroke="#000" stroke-width="1.7"/>
</g>
<rect x="58" y="775.2" width="822" height="1.6" fill="#ee0000"/>
<rect x="58" y="821.6" width="822" height="1.6" fill="#f6f600"/>
<rect x="58" y="834.4" width="822" height="1.5" fill="#008800"/>
<rect x="59" y="744" width="820" height="98" fill="none" stroke="#8e8e8e" stroke-width="2"/>
<rect x="57.6" y="842" width="2" height="6.5" fill="#e4e4e4"/>
<rect x="132.3" y="842" width="2" height="6.5" fill="#e4e4e4"/>
<rect x="207.0" y="842" width="2" height="6.5" fill="#e4e4e4"/>
<rect x="281.6" y="842" width="2" height="6.5" fill="#e4e4e4"/>
<rect x="356.3" y="842" width="2" height="6.5" fill="#e4e4e4"/>
<rect x="431.0" y="842" width="2" height="6.5" fill="#e4e4e4"/>
<rect x="505.7" y="842" width="2" height="6.5" fill="#e4e4e4"/>
<rect x="580.4" y="842" width="2" height="6.5" fill="#e4e4e4"/>
<rect x="655.0" y="842" width="2" height="6.5" fill="#e4e4e4"/>
<rect x="729.7" y="842" width="2" height="6.5" fill="#e4e4e4"/>
<rect x="804.4" y="842" width="2" height="6.5" fill="#e4e4e4"/>
<rect x="878.0" y="842" width="2" height="6.5" fill="#e4e4e4"/>
<rect x="51" y="840.5" width="7" height="2" fill="#e4e4e4"/><rect x="51" y="776.8" width="7" height="2" fill="#e4e4e4"/>
<rect x="58" y="890" width="822" height="107" fill="#232323"/>
<rect x="58" y="926.3" width="822" height="2" fill="#787878"/>
<g clip-path="url(#cb)">
<rect x="123.0" y="963.2" width="7.6" height="36.5" fill="url(#b61)" stroke="#000" stroke-width="1.7"/>
<rect x="140.5" y="935.3" width="7.6" height="64.4" fill="url(#b62)" stroke="#000" stroke-width="1.7"/>
<rect x="149.9" y="946.0" width="7.6" height="53.7" fill="url(#b63)" stroke="#000" stroke-width="1.7"/>
<rect x="159.3" y="938.1" width="7.6" height="61.7" fill="url(#b64)" stroke="#000" stroke-width="1.7"/>
<rect x="168.7" y="955.6" width="7.6" height="44.1" fill="url(#b65)" stroke="#000" stroke-width="1.7"/>
<rect x="178.1" y="957.0" width="7.6" height="42.7" fill="url(#b66)" stroke="#000" stroke-width="1.7"/>
<rect x="187.5" y="961.5" width="7.6" height="38.2" fill="url(#b67)" stroke="#000" stroke-width="1.7"/>
<rect x="215.1" y="933.6" width="7.6" height="66.1" fill="url(#b68)" stroke="#000" stroke-width="1.7"/>
<rect x="224.5" y="948.7" width="7.6" height="51.0" fill="url(#b69)" stroke="#000" stroke-width="1.7"/>
<rect x="233.9" y="944.6" width="7.6" height="55.1" fill="url(#b70)" stroke="#000" stroke-width="1.7"/>
<rect x="243.3" y="956.7" width="7.6" height="43.0" fill="url(#b71)" stroke="#000" stroke-width="1.7"/>
<rect x="252.7" y="947.7" width="7.6" height="52.0" fill="url(#b72)" stroke="#000" stroke-width="1.7"/>
<rect x="262.1" y="958.8" width="7.6" height="41.0" fill="url(#b73)" stroke="#000" stroke-width="1.7"/>
<rect x="289.6" y="935.3" width="7.6" height="64.4" fill="url(#b74)" stroke="#000" stroke-width="1.7"/>
<rect x="299.0" y="936.5" width="7.6" height="63.2" fill="url(#b75)" stroke="#000" stroke-width="1.7"/>
<rect x="308.4" y="957.2" width="7.6" height="42.5" fill="url(#b76)" stroke="#000" stroke-width="1.7"/>
<rect x="317.8" y="939.4" width="7.6" height="60.3" fill="url(#b77)" stroke="#000" stroke-width="1.7"/>
<rect x="327.2" y="936.5" width="7.6" height="63.2" fill="url(#b78)" stroke="#000" stroke-width="1.7"/>
<rect x="336.6" y="950.7" width="7.6" height="49.0" fill="url(#b79)" stroke="#000" stroke-width="1.7"/>
<rect x="364.2" y="921.3" width="7.6" height="78.4" fill="url(#b80)" stroke="#000" stroke-width="1.7"/>
<rect x="373.6" y="958.4" width="7.6" height="41.3" fill="url(#b81)" stroke="#000" stroke-width="1.7"/>
<rect x="383.0" y="966.1" width="7.6" height="33.6" fill="url(#b82)" stroke="#000" stroke-width="1.7"/>
<rect x="392.4" y="941.5" width="7.6" height="58.2" fill="url(#b83)" stroke="#000" stroke-width="1.7"/>
<rect x="401.8" y="947.5" width="7.6" height="52.2" fill="url(#b84)" stroke="#000" stroke-width="1.7"/>
<rect x="411.2" y="924.5" width="7.6" height="75.2" fill="url(#b85)" stroke="#000" stroke-width="1.7"/>
<rect x="438.7" y="944.4" width="7.6" height="55.3" fill="url(#b86)" stroke="#000" stroke-width="1.7"/>
<rect x="448.1" y="955.3" width="7.6" height="44.4" fill="url(#b87)" stroke="#000" stroke-width="1.7"/>
<rect x="457.5" y="958.4" width="7.6" height="41.3" fill="url(#b88)" stroke="#000" stroke-width="1.7"/>
<rect x="466.9" y="952.1" width="7.6" height="47.6" fill="url(#b89)" stroke="#000" stroke-width="1.7"/>
<rect x="476.3" y="953.6" width="7.6" height="46.1" fill="url(#b90)" stroke="#000" stroke-width="1.7"/>
<rect x="485.7" y="932.2" width="7.6" height="67.5" fill="url(#b91)" stroke="#000" stroke-width="1.7"/>
<rect x="513.3" y="936.5" width="7.6" height="63.2" fill="url(#b92)" stroke="#000" stroke-width="1.7"/>
<rect x="522.7" y="947.5" width="7.6" height="52.2" fill="url(#b93)" stroke="#000" stroke-width="1.7"/>
<rect x="532.1" y="967.8" width="7.6" height="31.9" fill="url(#b94)" stroke="#000" stroke-width="1.7"/>
<rect x="541.5" y="952.1" width="7.6" height="47.6" fill="url(#b95)" stroke="#000" stroke-width="1.7"/>
<rect x="550.9" y="966.1" width="7.6" height="33.6" fill="url(#b96)" stroke="#000" stroke-width="1.7"/>
<rect x="560.3" y="922.5" width="7.6" height="77.2" fill="url(#b97)" stroke="#000" stroke-width="1.7"/>
<rect x="587.9" y="929.3" width="7.6" height="70.4" fill="url(#b98)" stroke="#000" stroke-width="1.7"/>
<rect x="597.3" y="950.7" width="7.6" height="49.0" fill="url(#b99)" stroke="#000" stroke-width="1.7"/>
<rect x="606.7" y="966.1" width="7.6" height="33.6" fill="url(#b100)" stroke="#000" stroke-width="1.7"/>
<rect x="616.1" y="939.6" width="7.6" height="60.1" fill="url(#b101)" stroke="#000" stroke-width="1.7"/>
<rect x="625.5" y="974.1" width="7.6" height="25.6" fill="url(#b102)" stroke="#000" stroke-width="1.7"/>
<rect x="634.9" y="944.5" width="7.6" height="55.2" fill="url(#b103)" stroke="#000" stroke-width="1.7"/>
<rect x="662.4" y="939.6" width="7.6" height="60.1" fill="url(#b104)" stroke="#000" stroke-width="1.7"/>
<rect x="671.8" y="909.1" width="7.6" height="90.6" fill="url(#b105)" stroke="#000" stroke-width="1.7"/>
<rect x="681.2" y="979.0" width="7.6" height="20.7" fill="url(#b106)" stroke="#000" stroke-width="1.7"/>
<rect x="690.6" y="945.8" width="7.6" height="53.9" fill="url(#b107)" stroke="#000" stroke-width="1.7"/>
<rect x="700.0" y="963.1" width="7.6" height="36.6" fill="url(#b108)" stroke="#000" stroke-width="1.7"/>
<rect x="709.4" y="913.4" width="7.6" height="86.3" fill="url(#b109)" stroke="#000" stroke-width="1.7"/>
<rect x="737.0" y="964.3" width="7.6" height="35.4" fill="url(#b110)" stroke="#000" stroke-width="1.7"/>
<rect x="746.4" y="858.7" width="7.6" height="141.0" fill="url(#b111)" stroke="#000" stroke-width="1.7"/>
<rect x="755.8" y="977.8" width="7.6" height="21.9" fill="url(#b112)" stroke="#000" stroke-width="1.7"/>
<rect x="765.2" y="898.2" width="7.6" height="101.5" fill="url(#b113)" stroke="#000" stroke-width="1.7"/>
<rect x="774.6" y="960.0" width="7.6" height="39.7" fill="url(#b114)" stroke="#000" stroke-width="1.7"/>
<rect x="784.0" y="946.5" width="7.6" height="53.2" fill="url(#b115)" stroke="#000" stroke-width="1.7"/>
<rect x="811.5" y="938.1" width="7.6" height="61.7" fill="url(#b116)" stroke="#000" stroke-width="1.7"/>
<rect x="820.9" y="824.2" width="7.6" height="175.5" fill="url(#b117)" stroke="#000" stroke-width="1.7"/>
<rect x="830.3" y="824.2" width="7.6" height="175.5" fill="url(#b118)" stroke="#000" stroke-width="1.7"/>
<rect x="839.7" y="824.2" width="7.6" height="175.5" fill="url(#b119)" stroke="#000" stroke-width="1.7"/>
<rect x="849.1" y="960.0" width="7.6" height="39.7" fill="url(#b120)" stroke="#000" stroke-width="1.7"/>
<rect x="858.5" y="824.2" width="7.6" height="175.5" fill="url(#b121)" stroke="#000" stroke-width="1.7"/>
</g>
<rect x="58" y="924.7" width="822" height="1.6" fill="#ee0000"/>
<rect x="58" y="974.8" width="822" height="1.6" fill="#f6f600"/>
<rect x="58" y="989.1" width="822" height="1.5" fill="#008800"/>
<rect x="59" y="891" width="820" height="106" fill="none" stroke="#8e8e8e" stroke-width="2"/>
<rect x="57.6" y="997" width="2" height="6.5" fill="#e4e4e4"/>
<rect x="132.3" y="997" width="2" height="6.5" fill="#e4e4e4"/>
<rect x="207.0" y="997" width="2" height="6.5" fill="#e4e4e4"/>
<rect x="281.6" y="997" width="2" height="6.5" fill="#e4e4e4"/>
<rect x="356.3" y="997" width="2" height="6.5" fill="#e4e4e4"/>
<rect x="431.0" y="997" width="2" height="6.5" fill="#e4e4e4"/>
<rect x="505.7" y="997" width="2" height="6.5" fill="#e4e4e4"/>
<rect x="580.4" y="997" width="2" height="6.5" fill="#e4e4e4"/>
<rect x="655.0" y="997" width="2" height="6.5" fill="#e4e4e4"/>
<rect x="729.7" y="997" width="2" height="6.5" fill="#e4e4e4"/>
<rect x="804.4" y="997" width="2" height="6.5" fill="#e4e4e4"/>
<rect x="878.0" y="997" width="2" height="6.5" fill="#e4e4e4"/>
<rect x="51" y="995.5" width="7" height="2" fill="#e4e4e4"/><rect x="51" y="926.3" width="7" height="2" fill="#e4e4e4"/>
<rect x="1243" y="244" width="642" height="619" fill="#1b1b1b"/>
<rect x="1250.5" y="251.5" width="627" height="603.5" fill="#323232"/>
<rect x="1293" y="277" width="581" height="546" fill="#232323"/>
<g clip-path="url(#loc)" shape-rendering="crispEdges"><rect x="1321" y="312" width="48" height="2" fill="url(#g0)"/><rect x="1312" y="314" width="79" height="2" fill="url(#g1)"/><rect x="1308" y="316" width="100" height="2" fill="url(#g2)"/><rect x="1304" y="318" width="120" height="2" fill="url(#g3)"/><rect x="1302" y="320" width="137" height="2" fill="url(#g4)"/><rect x="1300" y="322" width="154" height="2" fill="url(#g5)"/><rect x="1299" y="324" width="169" height="2" fill="url(#g6)"/><rect x="1298" y="326" width="185" height="2" fill="url(#g7)"/><rect x="1297" y="328" width="200" height="2" fill="url(#g8)"/><rect x="1296" y="330" width="215" height="2" fill="url(#g9)"/><rect x="1295" y="332" width="231" height="2" fill="url(#g10)"/><rect x="1295" y="334" width="245" height="2" fill="url(#g11)"/><rect x="1294" y="336" width="260" height="2" fill="url(#g12)"/><rect x="1294" y="338" width="274" height="2" fill="url(#g13)"/><rect x="1293" y="340" width="290" height="2" fill="url(#g14)"/><rect x="1293" y="342" width="304" height="2" fill="url(#g15)"/><rect x="1293" y="344" width="318" height="2" fill="url(#g16)"/><rect x="1293" y="346" width="333" height="2" fill="url(#g17)"/><rect x="1293" y="348" width="347" height="2" fill="url(#g18)"/><rect x="1293" y="350" width="361" height="2" fill="url(#g19)"/><rect x="1293" y="352" width="375" height="2" fill="url(#g20)"/><rect x="1293" y="354" width="390" height="2" fill="url(#g21)"/><rect x="1293" y="356" width="404" height="2" fill="url(#g22)"/><rect x="1293" y="358" width="418" height="2" fill="url(#g23)"/><rect x="1293" y="360" width="433" height="2" fill="url(#g24)"/><rect x="1293" y="362" width="447" height="2" fill="url(#g25)"/><rect x="1293" y="364" width="461" height="2" fill="url(#g26)"/><rect x="1293" y="366" width="476" height="2" fill="url(#g27)"/><rect x="1293" y="368" width="490" height="2" fill="url(#g28)"/><rect x="1294" y="370" width="503" height="2" fill="url(#g29)"/><rect x="1294" y="372" width="517" height="2" fill="url(#g30)"/><rect x="1294" y="374" width="532" height="2" fill="url(#g31)"/><rect x="1294" y="376" width="546" height="2" fill="url(#g32)"/><rect x="1295" y="378" width="559" height="2" fill="url(#g33)"/><rect x="1295" y="380" width="573" height="2" fill="url(#g34)"/><rect x="1295" y="382" width="577" height="2" fill="url(#g35)"/><rect x="1296" y="384" width="575" height="2" fill="url(#g36)"/><rect x="1296" y="386" width="573" height="2" fill="url(#g37)"/><rect x="1296" y="388" width="572" height="2" fill="url(#g38)"/><rect x="1297" y="390" width="569" height="2" fill="url(#g39)"/><rect x="1297" y="392" width="567" height="2" fill="url(#g40)"/><rect x="1298" y="394" width="565" height="2" fill="url(#g41)"/><rect x="1298" y="396" width="563" height="2" fill="url(#g42)"/><rect x="1298" y="398" width="562" height="2" fill="url(#g43)"/><rect x="1299" y="400" width="559" height="2" fill="url(#g44)"/><rect x="1299" y="402" width="557" height="2" fill="url(#g45)"/><rect x="1300" y="404" width="555" height="2" fill="url(#g46)"/><rect x="1300" y="406" width="553" height="2" fill="url(#g47)"/><rect x="1301" y="408" width="551" height="2" fill="url(#g48)"/><rect x="1301" y="410" width="549" height="2" fill="url(#g49)"/><rect x="1302" y="412" width="547" height="2" fill="url(#g50)"/><rect x="1302" y="414" width="545" height="2" fill="url(#g51)"/><rect x="1303" y="416" width="542" height="2" fill="url(#g52)"/><rect x="1303" y="418" width="541" height="2" fill="url(#g53)"/><rect x="1304" y="420" width="538" height="2" fill="url(#g54)"/><rect x="1304" y="422" width="537" height="2" fill="url(#g55)"/><rect x="1305" y="424" width="534" height="2" fill="url(#g56)"/><rect x="1305" y="426" width="532" height="2" fill="url(#g57)"/><rect x="1306" y="428" width="530" height="2" fill="url(#g58)"/><rect x="1307" y="430" width="527" height="2" fill="url(#g59)"/><rect x="1307" y="432" width="526" height="2" fill="url(#g60)"/><rect x="1308" y="434" width="523" height="2" fill="url(#g61)"/><rect x="1308" y="436" width="521" height="2" fill="url(#g62)"/><rect x="1309" y="438" width="519" height="2" fill="url(#g63)"/><rect x="1309" y="440" width="517" height="2" fill="url(#g64)"/><rect x="1310" y="442" width="515" height="2" fill="url(#g65)"/><rect x="1311" y="444" width="512" height="2" fill="url(#g66)"/><rect x="1311" y="446" width="511" height="2" fill="url(#g67)"/><rect x="1312" y="448" width="508" height="2" fill="url(#g68)"/><rect x="1313" y="450" width="505" height="2" fill="url(#g69)"/><rect x="1313" y="452" width="504" height="2" fill="url(#g70)"/><rect x="1314" y="454" width="501" height="2" fill="url(#g71)"/><rect x="1314" y="456" width="500" height="2" fill="url(#g72)"/><rect x="1315" y="458" width="497" height="2" fill="url(#g73)"/><rect x="1316" y="460" width="494" height="2" fill="url(#g74)"/><rect x="1316" y="462" width="493" height="2" fill="url(#g75)"/><rect x="1317" y="464" width="490" height="2" fill="url(#g76)"/><rect x="1318" y="466" width="488" height="2" fill="url(#g77)"/><rect x="1318" y="468" width="486" height="2" fill="url(#g78)"/><rect x="1319" y="470" width="483" height="2" fill="url(#g79)"/><rect x="1320" y="472" width="481" height="2" fill="url(#g80)"/><rect x="1320" y="474" width="479" height="2" fill="url(#g81)"/><rect x="1321" y="476" width="477" height="2" fill="url(#g82)"/><rect x="1322" y="478" width="474" height="2" fill="url(#g83)"/><rect x="1323" y="480" width="472" height="2" fill="url(#g84)"/><rect x="1323" y="482" width="470" height="2" fill="url(#g85)"/><rect x="1324" y="484" width="467" height="2" fill="url(#g86)"/><rect x="1325" y="486" width="465" height="2" fill="url(#g87)"/><rect x="1325" y="488" width="463" height="2" fill="url(#g88)"/><rect x="1326" y="490" width="461" height="2" fill="url(#g89)"/><rect x="1327" y="492" width="458" height="2" fill="url(#g90)"/><rect x="1328" y="494" width="455" height="2" fill="url(#g91)"/><rect x="1328" y="496" width="454" height="2" fill="url(#g92)"/><rect x="1329" y="498" width="451" height="2" fill="url(#g93)"/><rect x="1330" y="500" width="449" height="2" fill="url(#g94)"/><rect x="1331" y="502" width="446" height="2" fill="url(#g95)"/><rect x="1331" y="504" width="444" height="2" fill="url(#g96)"/><rect x="1332" y="506" width="442" height="2" fill="url(#g97)"/><rect x="1333" y="508" width="439" height="2" fill="url(#g98)"/><rect x="1334" y="510" width="437" height="2" fill="url(#g99)"/><rect x="1334" y="512" width="435" height="2" fill="url(#g100)"/><rect x="1335" y="514" width="433" height="2" fill="url(#g101)"/><rect x="1336" y="516" width="430" height="2" fill="url(#g102)"/><rect x="1337" y="518" width="427" height="2" fill="url(#g103)"/><rect x="1338" y="520" width="425" height="2" fill="url(#g104)"/><rect x="1338" y="522" width="423" height="2" fill="url(#g105)"/><rect x="1339" y="524" width="421" height="2" fill="url(#g106)"/><rect x="1340" y="526" width="418" height="2" fill="url(#g107)"/><rect x="1341" y="528" width="415" height="2" fill="url(#g108)"/><rect x="1342" y="530" width="413" height="2" fill="url(#g109)"/><rect x="1343" y="532" width="410" height="2" fill="url(#g110)"/><rect x="1343" y="534" width="409" height="2" fill="url(#g111)"/><rect x="1344" y="536" width="406" height="2" fill="url(#g112)"/><rect x="1345" y="538" width="403" height="2" fill="url(#g113)"/><rect x="1346" y="540" width="401" height="2" fill="url(#g114)"/><rect x="1347" y="542" width="398" height="2" fill="url(#g115)"/><rect x="1348" y="544" width="396" height="2" fill="url(#g116)"/><rect x="1349" y="546" width="393" height="2" fill="url(#g117)"/><rect x="1350" y="548" width="391" height="2" fill="url(#g118)"/><rect x="1350" y="550" width="389" height="2" fill="url(#g119)"/><rect x="1351" y="552" width="386" height="2" fill="url(#g120)"/><rect x="1352" y="554" width="384" height="2" fill="url(#g121)"/><rect x="1353" y="556" width="381" height="2" fill="url(#g122)"/><rect x="1354" y="558" width="379" height="2" fill="url(#g123)"/><rect x="1355" y="560" width="376" height="2" fill="url(#g124)"/><rect x="1356" y="562" width="373" height="2" fill="url(#g125)"/><rect x="1357" y="564" width="371" height="2" fill="url(#g126)"/><rect x="1358" y="566" width="368" height="2" fill="url(#g127)"/><rect x="1359" y="568" width="366" height="2" fill="url(#g128)"/><rect x="1360" y="570" width="363" height="2" fill="url(#g129)"/><rect x="1361" y="572" width="360" height="2" fill="url(#g130)"/><rect x="1362" y="574" width="358" height="2" fill="url(#g131)"/><rect x="1363" y="576" width="355" height="2" fill="url(#g132)"/><rect x="1364" y="578" width="353" height="2" fill="url(#g133)"/><rect x="1365" y="580" width="350" height="2" fill="url(#g134)"/><rect x="1365" y="582" width="349" height="2" fill="url(#g135)"/><rect x="1366" y="584" width="346" height="2" fill="url(#g136)"/><rect x="1367" y="586" width="343" height="2" fill="url(#g137)"/><rect x="1368" y="588" width="341" height="2" fill="url(#g138)"/><rect x="1369" y="590" width="338" height="2" fill="url(#g139)"/><rect x="1370" y="592" width="336" height="2" fill="url(#g140)"/><rect x="1371" y="594" width="333" height="2" fill="url(#g141)"/><rect x="1372" y="596" width="330" height="2" fill="url(#g142)"/><rect x="1373" y="598" width="328" height="2" fill="url(#g143)"/><rect x="1374" y="600" width="325" height="2" fill="url(#g144)"/><rect x="1375" y="602" width="323" height="2" fill="url(#g145)"/><rect x="1376" y="604" width="320" height="2" fill="url(#g146)"/><rect x="1377" y="606" width="317" height="2" fill="url(#g147)"/><rect x="1378" y="608" width="315" height="2" fill="url(#g148)"/><rect x="1379" y="610" width="312" height="2" fill="url(#g149)"/><rect x="1380" y="612" width="310" height="2" fill="url(#g150)"/><rect x="1381" y="614" width="307" height="2" fill="url(#g151)"/><rect x="1382" y="616" width="305" height="2" fill="url(#g152)"/><rect x="1383" y="618" width="302" height="2" fill="url(#g153)"/><rect x="1384" y="620" width="299" height="2" fill="url(#g154)"/><rect x="1385" y="622" width="297" height="2" fill="url(#g155)"/><rect x="1386" y="624" width="294" height="2" fill="url(#g156)"/><rect x="1387" y="626" width="292" height="2" fill="url(#g157)"/><rect x="1389" y="628" width="288" height="2" fill="url(#g158)"/><rect x="1390" y="630" width="285" height="2" fill="url(#g159)"/><rect x="1391" y="632" width="283" height="2" fill="url(#g160)"/><rect x="1392" y="634" width="280" height="2" fill="url(#g161)"/><rect x="1393" y="636" width="278" height="2" fill="url(#g162)"/><rect x="1394" y="638" width="275" height="2" fill="url(#g163)"/><rect x="1395" y="640" width="272" height="2" fill="url(#g164)"/><rect x="1396" y="642" width="270" height="2" fill="url(#g165)"/><rect x="1397" y="644" width="267" height="2" fill="url(#g166)"/><rect x="1398" y="646" width="265" height="2" fill="url(#g167)"/><rect x="1399" y="648" width="262" height="2" fill="url(#g168)"/><rect x="1400" y="650" width="260" height="2" fill="url(#g169)"/><rect x="1401" y="652" width="257" height="2" fill="url(#g170)"/><rect x="1403" y="654" width="253" height="2" fill="url(#g171)"/><rect x="1404" y="656" width="251" height="2" fill="url(#g172)"/><rect x="1405" y="658" width="248" height="2" fill="url(#g173)"/><rect x="1406" y="660" width="246" height="2" fill="url(#g174)"/><rect x="1407" y="662" width="243" height="2" fill="url(#g175)"/><rect x="1408" y="664" width="240" height="2" fill="url(#g176)"/><rect x="1409" y="666" width="238" height="2" fill="url(#g177)"/><rect x="1411" y="668" width="234" height="2" fill="url(#g178)"/><rect x="1412" y="670" width="232" height="2" fill="url(#g179)"/><rect x="1413" y="672" width="229" height="2" fill="url(#g180)"/><rect x="1414" y="674" width="226" height="2" fill="url(#g181)"/><rect x="1415" y="676" width="224" height="2" fill="url(#g182)"/><rect x="1417" y="678" width="220" height="2" fill="url(#g183)"/><rect x="1418" y="680" width="218" height="2" fill="url(#g184)"/><rect x="1419" y="682" width="215" height="2" fill="url(#g185)"/><rect x="1420" y="684" width="213" height="2" fill="url(#g186)"/><rect x="1422" y="686" width="209" height="2" fill="url(#g187)"/><rect x="1423" y="688" width="206" height="2" fill="url(#g188)"/><rect x="1424" y="690" width="204" height="2" fill="url(#g189)"/><rect x="1425" y="692" width="201" height="2" fill="url(#g190)"/><rect x="1427" y="694" width="198" height="2" fill="url(#g191)"/><rect x="1428" y="696" width="195" height="2" fill="url(#g192)"/><rect x="1429" y="698" width="192" height="2" fill="url(#g193)"/><rect x="1430" y="700" width="190" height="2" fill="url(#g194)"/><rect x="1432" y="702" width="186" height="2" fill="url(#g195)"/><rect x="1433" y="704" width="184" height="2" fill="url(#g196)"/><rect x="1434" y="706" width="181" height="2" fill="url(#g197)"/><rect x="1436" y="708" width="177" height="2" fill="url(#g198)"/><rect x="1437" y="710" width="175" height="2" fill="url(#g199)"/><rect x="1438" y="712" width="172" height="2" fill="url(#g200)"/><rect x="1440" y="714" width="169" height="2" fill="url(#g201)"/><rect x="1441" y="716" width="166" height="2" fill="url(#g202)"/><rect x="1443" y="718" width="163" height="2" fill="url(#g203)"/><rect x="1444" y="720" width="160" height="2" fill="url(#g204)"/><rect x="1446" y="722" width="156" height="2" fill="url(#g205)"/><rect x="1447" y="724" width="154" height="2" fill="url(#g206)"/><rect x="1448" y="726" width="151" height="2" fill="url(#g207)"/><rect x="1450" y="728" width="148" height="2" fill="url(#g208)"/><rect x="1451" y="730" width="145" height="2" fill="url(#g209)"/><rect x="1453" y="732" width="141" height="2" fill="url(#g210)"/><rect x="1455" y="734" width="138" height="2" fill="url(#g211)"/><rect x="1456" y="736" width="135" height="2" fill="url(#g212)"/><rect x="1458" y="738" width="132" height="2" fill="url(#g213)"/><rect x="1459" y="740" width="129" height="2" fill="url(#g214)"/><rect x="1461" y="742" width="125" height="2" fill="url(#g215)"/><rect x="1463" y="744" width="122" height="2" fill="url(#g216)"/><rect x="1465" y="746" width="118" height="2" fill="url(#g217)"/><rect x="1466" y="748" width="116" height="2" fill="url(#g218)"/><rect x="1468" y="750" width="112" height="2" fill="url(#g219)"/><rect x="1470" y="752" width="109" height="2" fill="url(#g220)"/><rect x="1472" y="754" width="105" height="2" fill="url(#g221)"/><rect x="1473" y="756" width="102" height="2" fill="url(#g222)"/><rect x="1475" y="758" width="99" height="2" fill="url(#g223)"/><rect x="1477" y="760" width="95" height="2" fill="url(#g224)"/><rect x="1479" y="762" width="92" height="2" fill="url(#g225)"/><rect x="1481" y="764" width="88" height="2" fill="url(#g226)"/><rect x="1483" y="766" width="84" height="2" fill="url(#g227)"/><rect x="1485" y="768" width="81" height="2" fill="url(#g228)"/><rect x="1487" y="770" width="77" height="2" fill="url(#g229)"/><rect x="1489" y="772" width="74" height="2" fill="url(#g230)"/><rect x="1491" y="774" width="70" height="2" fill="url(#g231)"/><rect x="1493" y="776" width="66" height="2" fill="url(#g232)"/><rect x="1495" y="778" width="63" height="2" fill="url(#g233)"/><rect x="1497" y="780" width="59" height="2" fill="url(#g234)"/><rect x="1499" y="782" width="56" height="2" fill="url(#g235)"/><rect x="1501" y="784" width="52" height="2" fill="url(#g236)"/><rect x="1503" y="786" width="49" height="2" fill="url(#g237)"/><rect x="1505" y="788" width="45" height="2" fill="url(#g238)"/><rect x="1507" y="790" width="41" height="2" fill="url(#g239)"/><rect x="1509" y="792" width="38" height="2" fill="url(#g240)"/><rect x="1511" y="794" width="34" height="2" fill="url(#g241)"/><rect x="1513" y="796" width="31" height="2" fill="url(#g242)"/><rect x="1514" y="798" width="28" height="2" fill="url(#g243)"/><rect x="1516" y="800" width="24" height="2" fill="url(#g244)"/><rect x="1519" y="802" width="20" height="2" fill="url(#g245)"/><rect x="1521" y="804" width="16" height="2" fill="url(#g246)"/><rect x="1523" y="806" width="13" height="2" fill="url(#g247)"/><rect x="1526" y="808" width="8" height="2" fill="url(#g248)"/></g>
<g clip-path="url(#loc)"><path d="M1290,270H1880V830H1290Z M1809.5,372.7L1344.8,311.7L1441.3,713.0Z" fill="#000" fill-opacity="0.4" fill-rule="evenodd"/></g>
<rect x="1707" y="662" width="163" height="155" fill="#2c2c2c"/>
<rect x="1711" y="666" width="155" height="147" fill="#232323"/>
<g clip-path="url(#ibox)"><g clip-path="url(#iloc)"><g shape-rendering="crispEdges"><rect x="1708" y="717" width="10" height="3" fill="url(#h0)"/><rect x="1708" y="720" width="32" height="3" fill="url(#h1)"/><rect x="1708" y="723" width="54" height="3" fill="url(#h2)"/><rect x="1708" y="726" width="75" height="3" fill="url(#h3)"/><rect x="1708" y="729" width="97" height="3" fill="url(#h4)"/><rect x="1708" y="732" width="118" height="3" fill="url(#h5)"/><rect x="1708" y="735" width="140" height="3" fill="url(#h6)"/><rect x="1708" y="738" width="161" height="3" fill="url(#h7)"/><rect x="1708" y="741" width="161" height="3" fill="url(#h8)"/><rect x="1708" y="744" width="161" height="3" fill="url(#h9)"/><rect x="1708" y="747" width="161" height="3" fill="url(#h10)"/><rect x="1708" y="750" width="161" height="3" fill="url(#h11)"/><rect x="1708" y="753" width="161" height="3" fill="url(#h12)"/><rect x="1708" y="756" width="161" height="3" fill="url(#h13)"/><rect x="1708" y="759" width="161" height="3" fill="url(#h14)"/><rect x="1708" y="762" width="161" height="3" fill="url(#h15)"/><rect x="1708" y="765" width="161" height="3" fill="url(#h16)"/><rect x="1708" y="768" width="161" height="3" fill="url(#h17)"/><rect x="1708" y="771" width="161" height="3" fill="url(#h18)"/><rect x="1708" y="774" width="161" height="3" fill="url(#h19)"/><rect x="1708" y="777" width="161" height="3" fill="url(#h20)"/><rect x="1708" y="780" width="161" height="3" fill="url(#h21)"/><rect x="1708" y="783" width="161" height="3" fill="url(#h22)"/><rect x="1708" y="786" width="161" height="3" fill="url(#h23)"/><rect x="1708" y="789" width="161" height="3" fill="url(#h24)"/><rect x="1708" y="792" width="161" height="3" fill="url(#h25)"/><rect x="1708" y="795" width="161" height="3" fill="url(#h26)"/><rect x="1708" y="798" width="161" height="3" fill="url(#h27)"/><rect x="1708" y="801" width="161" height="3" fill="url(#h28)"/><rect x="1708" y="804" width="161" height="3" fill="url(#h29)"/><rect x="1708" y="807" width="161" height="3" fill="url(#h30)"/><rect x="1708" y="810" width="161" height="3" fill="url(#h31)"/></g><path d="M1700,650H1880V830H1700Z M2817.1,874.0L1332.6,678.8L1639.7,1958.7Z" fill="#000" fill-opacity="0.4" fill-rule="evenodd"/></g></g>
<rect x="1710.75" y="665.75" width="155.5" height="147.5" fill="none" stroke="#a2a2a2" stroke-width="1.5"/>
<rect x="1778.2" y="730.2" width="16.6" height="16.6" fill="none" stroke="#fff" stroke-width="1.6"/>
<circle cx="1840.8" cy="746.6" r="4.6" fill="#808000" stroke="#000" stroke-width="1.2"/>
<rect x="1294" y="278" width="579" height="544" fill="none" stroke="#9a9a9a" stroke-width="2"/>
<rect x="1286.5" y="821.4" width="6.5" height="1.4" fill="#e4e4e4"/>
<rect x="1286.5" y="778.5" width="6.5" height="2" fill="#e4e4e4"/>
<rect x="1286.5" y="735.3" width="6.5" height="1.4" fill="#e4e4e4"/>
<rect x="1286.5" y="691.6" width="6.5" height="2" fill="#e4e4e4"/>
<rect x="1286.5" y="648.4" width="6.5" height="1.4" fill="#e4e4e4"/>
<rect x="1286.5" y="604.6" width="6.5" height="2" fill="#e4e4e4"/>
<rect x="1286.5" y="561.4" width="6.5" height="1.4" fill="#e4e4e4"/>
<rect x="1286.5" y="517.7" width="6.5" height="2" fill="#e4e4e4"/>
<rect x="1286.5" y="474.5" width="6.5" height="1.4" fill="#e4e4e4"/>
<rect x="1286.5" y="430.7" width="6.5" height="2" fill="#e4e4e4"/>
<rect x="1286.5" y="387.6" width="6.5" height="1.4" fill="#e4e4e4"/>
<rect x="1286.5" y="343.8" width="6.5" height="2" fill="#e4e4e4"/>
<rect x="1286.5" y="300.6" width="6.5" height="1.4" fill="#e4e4e4"/>
<rect x="1293.0" y="823" width="1.6" height="7" fill="#e4e4e4"/>
<rect x="1385.6" y="823" width="1.6" height="7" fill="#e4e4e4"/>
<rect x="1478.2" y="823" width="1.6" height="7" fill="#e4e4e4"/>
<rect x="1570.8" y="823" width="1.6" height="7" fill="#e4e4e4"/>
<rect x="1663.4" y="823" width="1.6" height="7" fill="#e4e4e4"/>
<rect x="1756.0" y="823" width="1.6" height="7" fill="#e4e4e4"/>
<rect x="1848.4" y="823" width="2" height="7" fill="#e4e4e4"/>
<rect x="1495.8" y="403.2" width="15.4" height="15.4" fill="none" stroke="#fff" stroke-width="1.7"/>
<rect x="1524.1" y="399.6" width="15.4" height="15.4" fill="none" stroke="#fff" stroke-width="1.7"/>
<rect x="1553.7" y="395.9" width="15.4" height="15.4" fill="none" stroke="#fff" stroke-width="1.7"/>
<rect x="1584.5" y="392.0" width="15.4" height="15.4" fill="none" stroke="#fff" stroke-width="1.7"/>
<rect x="1616.6" y="388.0" width="15.4" height="15.4" fill="none" stroke="#fff" stroke-width="1.7"/>
<rect x="1650.2" y="383.8" width="15.4" height="15.4" fill="none" stroke="#fff" stroke-width="1.7"/>
<rect x="1685.3" y="379.4" width="15.4" height="15.4" fill="none" stroke="#fff" stroke-width="1.7"/>
<rect x="1722.0" y="374.7" width="15.4" height="15.4" fill="none" stroke="#fff" stroke-width="1.7"/>
<rect x="1760.4" y="369.9" width="15.4" height="15.4" fill="none" stroke="#fff" stroke-width="1.7"/>
<rect x="1800.7" y="364.8" width="15.4" height="15.4" fill="none" stroke="#fff" stroke-width="1.7"/>
<rect x="1445.2" y="388.5" width="15.4" height="15.4" fill="none" stroke="#fff" stroke-width="1.7"/>
<rect x="1425.6" y="373.1" width="15.4" height="15.4" fill="none" stroke="#fff" stroke-width="1.7"/>
<rect x="1408.8" y="360.1" width="15.4" height="15.4" fill="none" stroke="#fff" stroke-width="1.7"/>
<rect x="1394.3" y="348.7" width="15.4" height="15.4" fill="none" stroke="#fff" stroke-width="1.7"/>
<rect x="1381.7" y="338.9" width="15.4" height="15.4" fill="none" stroke="#fff" stroke-width="1.7"/>
<rect x="1370.6" y="330.2" width="15.4" height="15.4" fill="none" stroke="#fff" stroke-width="1.7"/>
<rect x="1360.7" y="322.5" width="15.4" height="15.4" fill="none" stroke="#fff" stroke-width="1.7"/>
<rect x="1351.9" y="315.6" width="15.4" height="15.4" fill="none" stroke="#fff" stroke-width="1.7"/>
<rect x="1344.0" y="309.4" width="15.4" height="15.4" fill="none" stroke="#fff" stroke-width="1.7"/>
<rect x="1336.8" y="303.8" width="15.4" height="15.4" fill="none" stroke="#fff" stroke-width="1.7"/>
<rect x="1466.5" y="422.9" width="15.4" height="15.4" fill="none" stroke="#fff" stroke-width="1.7"/>
<rect x="1464.4" y="440.8" width="15.4" height="15.4" fill="none" stroke="#fff" stroke-width="1.7"/>
<rect x="1462.0" y="460.8" width="15.4" height="15.4" fill="none" stroke="#fff" stroke-width="1.7"/>
<rect x="1459.3" y="483.2" width="15.4" height="15.4" fill="none" stroke="#fff" stroke-width="1.7"/>
<rect x="1456.3" y="508.3" width="15.4" height="15.4" fill="none" stroke="#fff" stroke-width="1.7"/>
<rect x="1452.8" y="536.9" width="15.4" height="15.4" fill="none" stroke="#fff" stroke-width="1.7"/>
<rect x="1448.9" y="569.6" width="15.4" height="15.4" fill="none" stroke="#fff" stroke-width="1.7"/>
<rect x="1444.4" y="607.4" width="15.4" height="15.4" fill="none" stroke="#fff" stroke-width="1.7"/>
<rect x="1439.1" y="651.5" width="15.4" height="15.4" fill="none" stroke="#fff" stroke-width="1.7"/>
<rect x="1432.8" y="703.8" width="15.4" height="15.4" fill="none" stroke="#fff" stroke-width="1.7"/>
<rect x="1457.3" y="408.0" width="15.4" height="15.4" fill="none" stroke="#fff" stroke-width="1.7"/>
<rect x="1446.4" y="409.4" width="15.4" height="15.4" fill="none" stroke="#fff" stroke-width="1.7"/>
<rect x="1435.6" y="410.8" width="15.4" height="15.4" fill="none" stroke="#fff" stroke-width="1.7"/>
<rect x="1425.0" y="412.1" width="15.4" height="15.4" fill="none" stroke="#fff" stroke-width="1.7"/>
<rect x="1414.5" y="413.4" width="15.4" height="15.4" fill="none" stroke="#fff" stroke-width="1.7"/>
<rect x="1404.2" y="414.7" width="15.4" height="15.4" fill="none" stroke="#fff" stroke-width="1.7"/>
<rect x="1394.1" y="416.0" width="15.4" height="15.4" fill="none" stroke="#fff" stroke-width="1.7"/>
<rect x="1384.1" y="417.3" width="15.4" height="15.4" fill="none" stroke="#fff" stroke-width="1.7"/>
<rect x="1374.3" y="418.5" width="15.4" height="15.4" fill="none" stroke="#fff" stroke-width="1.7"/>
<rect x="1364.6" y="419.7" width="15.4" height="15.4" fill="none" stroke="#fff" stroke-width="1.7"/>
<rect x="1478.8" y="414.7" width="15.4" height="15.4" fill="none" stroke="#fff" stroke-width="1.7"/>
<rect x="1489.8" y="423.3" width="15.4" height="15.4" fill="none" stroke="#fff" stroke-width="1.7"/>
<rect x="1501.8" y="432.6" width="15.4" height="15.4" fill="none" stroke="#fff" stroke-width="1.7"/>
<rect x="1514.8" y="442.8" width="15.4" height="15.4" fill="none" stroke="#fff" stroke-width="1.7"/>
<rect x="1528.9" y="453.8" width="15.4" height="15.4" fill="none" stroke="#fff" stroke-width="1.7"/>
<rect x="1544.4" y="465.9" width="15.4" height="15.4" fill="none" stroke="#fff" stroke-width="1.7"/>
<rect x="1561.3" y="479.1" width="15.4" height="15.4" fill="none" stroke="#fff" stroke-width="1.7"/>
<rect x="1580.0" y="493.7" width="15.4" height="15.4" fill="none" stroke="#fff" stroke-width="1.7"/>
<rect x="1600.7" y="509.9" width="15.4" height="15.4" fill="none" stroke="#fff" stroke-width="1.7"/>
<rect x="1623.8" y="527.9" width="15.4" height="15.4" fill="none" stroke="#fff" stroke-width="1.7"/>
<rect x="1469.8" y="395.6" width="15.4" height="15.4" fill="none" stroke="#fff" stroke-width="1.7"/>
<rect x="1471.0" y="385.4" width="15.4" height="15.4" fill="none" stroke="#fff" stroke-width="1.7"/>
<rect x="1472.2" y="375.7" width="15.4" height="15.4" fill="none" stroke="#fff" stroke-width="1.7"/>
<rect x="1473.3" y="366.7" width="15.4" height="15.4" fill="none" stroke="#fff" stroke-width="1.7"/>
<rect x="1474.3" y="358.2" width="15.4" height="15.4" fill="none" stroke="#fff" stroke-width="1.7"/>
<rect x="1475.3" y="350.3" width="15.4" height="15.4" fill="none" stroke="#fff" stroke-width="1.7"/>
<rect x="1476.2" y="342.7" width="15.4" height="15.4" fill="none" stroke="#fff" stroke-width="1.7"/>
<rect x="1477.0" y="335.6" width="15.4" height="15.4" fill="none" stroke="#fff" stroke-width="1.7"/>
<rect x="1477.8" y="328.9" width="15.4" height="15.4" fill="none" stroke="#fff" stroke-width="1.7"/>
<rect x="1478.6" y="322.5" width="15.4" height="15.4" fill="none" stroke="#fff" stroke-width="1.7"/>
<rect x="1468.8" y="407" width="15.4" height="15.4" fill="none" stroke="#000" stroke-width="1.8"/>
<circle cx="1513.5" cy="414.4" r="5" fill="#867c7c" stroke="#000" stroke-width="1.3"/>
<circle cx="1539.5" cy="411.3" r="5" fill="#867878" stroke="#000" stroke-width="1.3"/>
<circle cx="1570.4" cy="406.5" r="5" fill="#867474" stroke="#000" stroke-width="1.3"/>
<circle cx="1607.5" cy="400.4" r="5" fill="#866f6f" stroke="#000" stroke-width="1.3"/>
<circle cx="1624.4" cy="402.1" r="5" fill="#866969" stroke="#000" stroke-width="1.3"/>
<circle cx="1660.4" cy="395.4" r="5" fill="#866363" stroke="#000" stroke-width="1.3"/>
<circle cx="1697.5" cy="392.3" r="5" fill="#865b5b" stroke="#000" stroke-width="1.3"/>
<circle cx="1737.7" cy="386.7" r="5" fill="#865252" stroke="#000" stroke-width="1.3"/>
<circle cx="1770.4" cy="378.4" r="5" fill="#864343" stroke="#000" stroke-width="1.3"/>
<circle cx="1799.6" cy="371.1" r="5" fill="#800000" stroke="#000" stroke-width="1.3"/>
<circle cx="1460.6" cy="397.3" r="5" fill="#7c867c" stroke="#000" stroke-width="1.3"/>
<circle cx="1434.5" cy="381.4" r="5" fill="#788678" stroke="#000" stroke-width="1.3"/>
<circle cx="1421.5" cy="372.4" r="5" fill="#748674" stroke="#000" stroke-width="1.3"/>
<circle cx="1406.6" cy="358.4" r="5" fill="#6f866f" stroke="#000" stroke-width="1.3"/>
<circle cx="1392.4" cy="349.4" r="5" fill="#698669" stroke="#000" stroke-width="1.3"/>
<circle cx="1384.4" cy="338.3" r="5" fill="#638663" stroke="#000" stroke-width="1.3"/>
<circle cx="1375.5" cy="330.5" r="5" fill="#5b865b" stroke="#000" stroke-width="1.3"/>
<circle cx="1372.5" cy="324.5" r="5" fill="#528652" stroke="#000" stroke-width="1.3"/>
<circle cx="1372.5" cy="319.1" r="5" fill="#438643" stroke="#000" stroke-width="1.3"/>
<circle cx="1370.7" cy="313.3" r="5" fill="#008000" stroke="#000" stroke-width="1.3"/>
<circle cx="1479.5" cy="437.2" r="5" fill="#7c7c86" stroke="#000" stroke-width="1.3"/>
<circle cx="1479.5" cy="453.3" r="5" fill="#787886" stroke="#000" stroke-width="1.3"/>
<circle cx="1469.5" cy="476.3" r="5" fill="#747486" stroke="#000" stroke-width="1.3"/>
<circle cx="1468.3" cy="493.3" r="5" fill="#6f6f86" stroke="#000" stroke-width="1.3"/>
<circle cx="1465.5" cy="522.5" r="5" fill="#696986" stroke="#000" stroke-width="1.3"/>
<circle cx="1463.3" cy="550.3" r="5" fill="#636386" stroke="#000" stroke-width="1.3"/>
<circle cx="1457.5" cy="580" r="5" fill="#5b5b86" stroke="#000" stroke-width="1.3"/>
<circle cx="1454.2" cy="621.5" r="5" fill="#525286" stroke="#000" stroke-width="1.3"/>
<circle cx="1448.4" cy="660.5" r="5" fill="#434386" stroke="#000" stroke-width="1.3"/>
<circle cx="1455.6" cy="713.4" r="5" fill="#000080" stroke="#000" stroke-width="1.3"/>
<circle cx="1466.25" cy="417.5" r="5" fill="#7c8686" stroke="#000" stroke-width="1.3"/>
<circle cx="1455.8" cy="420.7" r="5" fill="#788686" stroke="#000" stroke-width="1.3"/>
<circle cx="1449.2" cy="420.4" r="5" fill="#748686" stroke="#000" stroke-width="1.3"/>
<circle cx="1437.5" cy="423.3" r="5" fill="#6f8686" stroke="#000" stroke-width="1.3"/>
<circle cx="1423.5" cy="426.4" r="5" fill="#698686" stroke="#000" stroke-width="1.3"/>
<circle cx="1415.7" cy="425.4" r="5" fill="#638686" stroke="#000" stroke-width="1.3"/>
<circle cx="1407.7" cy="426.4" r="5" fill="#5b8686" stroke="#000" stroke-width="1.3"/>
<circle cx="1397.1" cy="426" r="5" fill="#528686" stroke="#000" stroke-width="1.3"/>
<circle cx="1394.2" cy="425" r="5" fill="#438686" stroke="#000" stroke-width="1.3"/>
<circle cx="1395.4" cy="431.7" r="5" fill="#008080" stroke="#000" stroke-width="1.3"/>
<circle cx="1486.7" cy="425.3" r="5" fill="#867c86" stroke="#000" stroke-width="1.3"/>
<circle cx="1500.6" cy="431.5" r="5" fill="#867886" stroke="#000" stroke-width="1.3"/>
<circle cx="1514.4" cy="446.4" r="5" fill="#867486" stroke="#000" stroke-width="1.3"/>
<circle cx="1528.6" cy="453.3" r="5" fill="#866f86" stroke="#000" stroke-width="1.3"/>
<circle cx="1531.5" cy="466.9" r="5" fill="#866986" stroke="#000" stroke-width="1.3"/>
<circle cx="1551.7" cy="479.2" r="5" fill="#866386" stroke="#000" stroke-width="1.3"/>
<circle cx="1570.7" cy="488.5" r="5" fill="#865b86" stroke="#000" stroke-width="1.3"/>
<circle cx="1589" cy="505.4" r="5" fill="#865286" stroke="#000" stroke-width="1.3"/>
<circle cx="1613.75" cy="514.9" r="5" fill="#864386" stroke="#000" stroke-width="1.3"/>
<circle cx="1629.7" cy="541.25" r="5" fill="#800080" stroke="#000" stroke-width="1.3"/>
<circle cx="1480.5" cy="405.2" r="5" fill="#86867c" stroke="#000" stroke-width="1.3"/>
<circle cx="1482.6" cy="395.5" r="5" fill="#868678" stroke="#000" stroke-width="1.3"/>
<circle cx="1482.6" cy="386.4" r="5" fill="#868674" stroke="#000" stroke-width="1.3"/>
<circle cx="1490.1" cy="378.4" r="5" fill="#86866f" stroke="#000" stroke-width="1.3"/>
<circle cx="1490.1" cy="368" r="5" fill="#868669" stroke="#000" stroke-width="1.3"/>
<circle cx="1491.4" cy="358.7" r="5" fill="#868663" stroke="#000" stroke-width="1.3"/>
<circle cx="1490.1" cy="350.2" r="5" fill="#86865b" stroke="#000" stroke-width="1.3"/>
<circle cx="1497.5" cy="344.4" r="5" fill="#868652" stroke="#000" stroke-width="1.3"/>
<circle cx="1493" cy="337" r="5" fill="#868643" stroke="#000" stroke-width="1.3"/>
<circle cx="1502.6" cy="332.4" r="5" fill="#808000" stroke="#000" stroke-width="1.3"/>
<circle cx="1480.4" cy="418.8" r="5" fill="#fff" stroke="#000" stroke-width="1.3"/>
<path d="M19.5,1029.5 L27.5,1029.5 L23.5,1024.5Z" fill="#2e2e2e"/>
<path d="M1617.2,1029.3 L1625.4,1029.3 L1621.3,1024.3Z" fill="#2e2e2e"/>
<rect x="1664.8" y="1029" width="8.4" height="8" fill="#2e2e2e"/>
<path d="M1711.5,1027.5 L1720.5,1033 L1711.5,1038.5Z" fill="#2e2e2e"/>
<path d="M1757,1028.5h-2.6v9h2.6M1763,1028.5h2.6v9h-2.6" fill="none" stroke="#2e2e2e" stroke-width="1.7"/><rect x="1757.6" y="1032.2" width="1.6" height="1.6" fill="#2e2e2e"/><rect x="1760.8" y="1032.2" width="1.6" height="1.6" fill="#2e2e2e"/>
<path d="M1805,1033 c-1.5,-3.1 -6.2,-3.1 -6.2,0 c0,3.1 4.7,3.1 6.2,0 c1.5,-3.1 6.2,-3.1 6.2,0 c0,3.1 -4.7,3.1 -6.2,0z" fill="none" stroke="#2e2e2e" stroke-width="1.5"/>
<path d="M1845.2,1031.6a4.9,4.9 0 0 1 8.6,-1.9M1854.8,1034.4a4.9,4.9 0 0 1 -8.6,1.9" fill="none" stroke="#2e2e2e" stroke-width="2.2"/><path d="M1856.3,1026.6v4.8h-4.8zM1843.7,1039.4v-4.8h4.8z" fill="#2e2e2e"/>
<path d="M1677.5,1059.5l-4,4.5l4,4.5M1682.5,1059.5l-4,4.5l4,4.5" fill="none" stroke="#2e2e2e" stroke-width="1.5"/>
<path d="M1886.5,1059.5l4,4.5l-4,4.5M1891.5,1059.5l4,4.5l-4,4.5" fill="none" stroke="#2e2e2e" stroke-width="1.5"/>
<rect x="-2.90" y="-2.90" width="5.80" height="5.80" rx="0.9" fill="#ffc515" transform="translate(9.9,6.6) rotate(45)"/><rect x="-2.90" y="-2.90" width="5.80" height="5.80" rx="0.9" fill="#3cc0ff" transform="translate(5.9,10.9) rotate(45)"/><rect x="-2.90" y="-2.90" width="5.80" height="5.80" rx="0.9" fill="#17d41f" transform="translate(14.4,10.9) rotate(45)"/><rect x="-2.90" y="-2.90" width="5.80" height="5.80" rx="0.9" fill="#ff1e5a" transform="translate(9.9,15.0) rotate(45)"/>
<path d="M1799,10.5h10" stroke="#111" stroke-width="1"/>
<rect x="1844" y="7" width="8" height="8" rx="1.5" fill="none" stroke="#111" stroke-width="1"/><path d="M1846.3,5.2h5.2a2.2,2.2 0 0 1 2.2,2.2v5.2" fill="none" stroke="#111" stroke-width="1"/>
<path d="M1890,5l10,10M1900,5l-10,10" stroke="#111" stroke-width="1.1"/>
<g transform="translate(34.5,37.4) rotate(45)" fill="none" stroke="#fff"><path d="M-7.25,-0.8V-7.25H-0.8M0.8,-7.25H7.25V-0.8M7.25,0.8V7.25H0.8M-0.8,7.25H-7.25V0.8" stroke-width="2.1" stroke-linejoin="round" stroke-linecap="butt"/><rect x="-5.5" y="-5.5" width="11" height="11" stroke-width="0.6"/><path d="M-5.5,0H5.5M0,-5.5V5.5" stroke-width="0.45"/><rect x="-5.00" y="-5.00" width="3.8" height="3.8" fill="#fff" stroke="none"/><rect x="-5.00" y="1.20" width="3.8" height="3.8" fill="#fff" stroke="none"/><rect x="1.20" y="-5.00" width="3.8" height="3.8" fill="#fff" stroke="none"/><rect x="1.20" y="1.20" width="3.8" height="3.8" fill="#fff" stroke="none"/></g>
<path d="M161.2,36.2h9.4l-4.7,4.9z" fill="#fff"/>
<path d="M10,66.8v9.6l5.8,-4.8z" fill="#fff"/>
<path d="M1431.4,70.7h9.2l-4.6,4.8z" fill="#fff"/>
<path d="M1686.4,70.7h9.2l-4.6,4.8z" fill="#fff"/>
<path d="M1835.4,70.7h9.2l-4.6,4.8z" fill="#fff"/>
<path d="M1881.93,71.11L1881.93,72.89L1880.37,73.08L1879.86,74.32L1880.83,75.56L1879.56,76.83L1878.32,75.86L1877.08,76.37L1876.89,77.93L1875.11,77.93L1874.92,76.37L1873.68,75.86L1872.44,76.83L1871.17,75.56L1872.14,74.32L1871.63,73.08L1870.07,72.89L1870.07,71.11L1871.63,70.92L1872.14,69.68L1871.17,68.44L1872.44,67.17L1873.68,68.14L1874.92,67.63L1875.11,66.07L1876.89,66.07L1877.08,67.63L1878.32,68.14L1879.56,67.17L1880.83,68.44L1879.86,69.68L1880.37,70.92Z" fill="#d4d4d4"/><circle cx="1876" cy="72" r="2.7" fill="#646464"/><circle cx="1876" cy="72" r="4.3" fill="none" stroke="#ddd" stroke-width="0"/>
<path d="M1909.5,66.5v10l-6,-5z" fill="#fff"/></svg>
</body></html>
